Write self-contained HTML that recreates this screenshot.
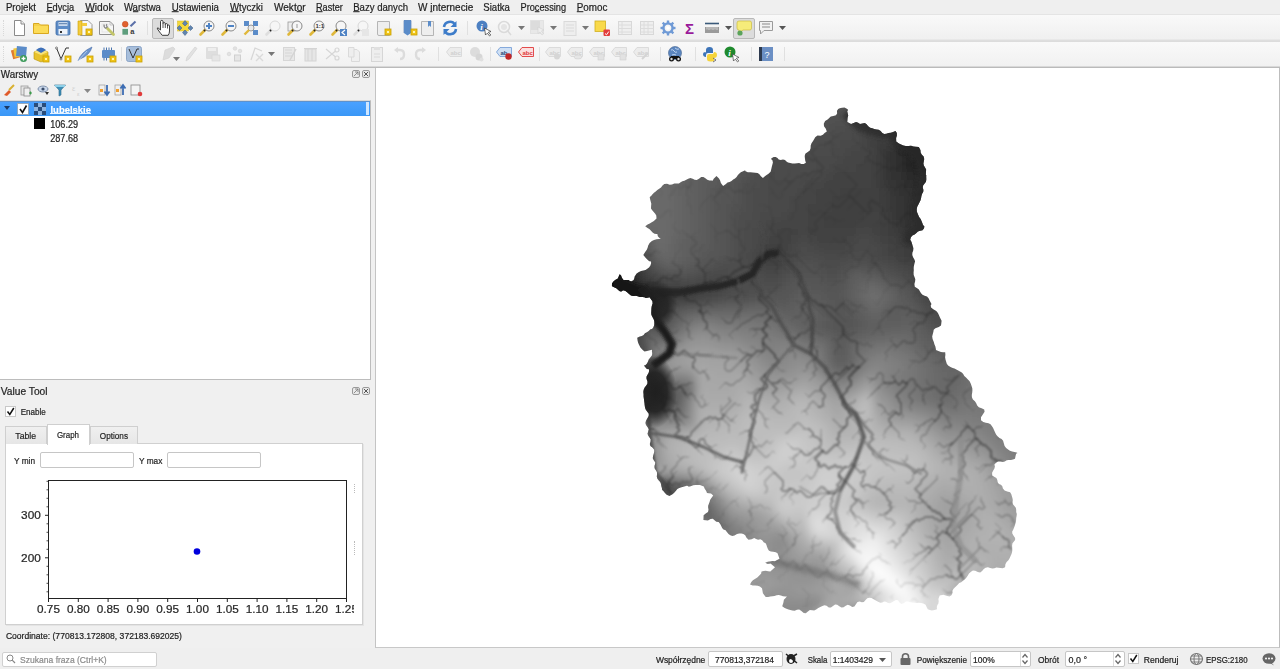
<!DOCTYPE html>
<html><head><meta charset="utf-8"><style>
*{margin:0;padding:0;box-sizing:border-box}
html,body{width:1280px;height:669px;overflow:hidden;background:#f0f0f0;font-family:"Liberation Sans",sans-serif;color:#222;font-size:10px}
.a{position:absolute;white-space:nowrap}
svg.a{overflow:visible}
#menubar{left:0;top:0;width:1280px;height:14px;background:#efefef}
#tb1{left:0;top:14px;width:1280px;height:27px;background:linear-gradient(#e4e4e4 0,#e4e4e4 1px,#f9f9f9 1px,#f0f0f0 25px,#e0e0e0 26px,#dcdcdc 27px)}
#tb2{left:0;top:41px;width:1280px;height:27px;background:linear-gradient(#dcdcdc 0,#dcdcdc 1px,#f9f9f9 1px,#f1f1f1 25px,#d8d8d8 25px,#d8d8d8 26px,#bababa 26px,#bababa 27px)}
.mi{top:2px;font-size:10px;line-height:11px;color:#1e1e1e;letter-spacing:-0.1px}
.mi u{text-decoration:underline;text-underline-offset:1px}
#canvas{left:375px;top:68px;width:905px;height:580px;background:#fff;border-left:1px solid #c4c4c4;border-right:1px solid #bdbdbd;border-bottom:1px solid #c8c8c8}
.t9{font-size:9.5px;color:#222}
.inp{background:#fff;border:1px solid #c6c6c6;border-radius:2px}
</style></head><body>
<div class="a" id="menubar"></div>
<div class="a" id="tb1"></div><div class="a" id="tb2"></div>
<div class="a" style="left:3px;top:20px;width:2px;height:16px;border-left:1px dotted #d8d8d8"></div>
<div class="a" style="left:3px;top:46px;width:2px;height:16px;border-left:1px dotted #d8d8d8"></div>
<svg class="a" style="left:11px;top:20px" width="16" height="16" viewBox="0 0 16 16"><path d="M3.5 .5H10L13.5 4V15.5H3.5Z" fill="#fff" stroke="#8a8a8a"/><path d="M10 .5V4H13.5" fill="#eee" stroke="#8a8a8a"/></svg>

<svg class="a" style="left:33px;top:20px" width="16" height="16" viewBox="0 0 16 16"><path d="M.5 3.5H6L7.5 5H15.5V13.5H.5Z" fill="#f5d14b" stroke="#d9a820"/><rect x="1" y="6" width="14" height="7" fill="#fcdc58"/></svg>

<svg class="a" style="left:55px;top:20px" width="16" height="16" viewBox="0 0 16 16"><rect x="1" y="1" width="14" height="14" rx="1.5" fill="#5d8cc7" stroke="#3d6aa5" stroke-width=".8"/><rect x="3.5" y="2" width="9" height="4" fill="#c9d9ee"/><rect x="4" y="3" width="8" height="1.2" fill="#6f8fb8"/><rect x="3.5" y="9" width="9" height="5.5" fill="#eef3fa"/><rect x="5" y="11" width="2" height="2" fill="#333"/></svg>

<svg class="a" style="left:77px;top:20px" width="16" height="16" viewBox="0 0 16 16"><path d="M3.5 .5H11L15 4.5V15.5H3.5Z" fill="#f7f7f7" stroke="#9a9a9a"/><path d="M1 1H5V15H1Z" fill="#f3cb3d" stroke="#c9a000" stroke-width=".6"/><path d="M5 3H10V6H5Z" fill="#f3cb3d"/><rect x="9" y="9" width="6" height="6" fill="#f0c419" stroke="#c9a000" stroke-width="0.8"/><rect x="11" y="11" width="2" height="2" fill="#fff6b0"/></svg>

<svg class="a" style="left:99px;top:20px" width="16" height="16" viewBox="0 0 16 16"><path d="M.5 1.5H11L14.5 5V14.5H.5Z" fill="#f6f6f6" stroke="#8e8e8e"/><path d="M11 1.5V5H14.5" fill="none" stroke="#b0b0b0" stroke-width=".7"/><rect x="3" y="4" width="6" height="8" fill="none" stroke="#e0e0e0" stroke-width=".8"/><path d="M8.5 8.5L14.5 14.5" stroke="#c3c66a" stroke-width="2.8" stroke-linecap="round"/><path d="M5.2 4.5Q4.5 7 6.5 8.2L8.2 7Q6.8 5.6 7.8 4.2" fill="none" stroke="#8a8a8a" stroke-width="1.3"/></svg>

<svg class="a" style="left:121px;top:20px" width="16" height="16" viewBox="0 0 16 16"><circle cx="4.2" cy="4.2" r="2.9" fill="#e0612f" stroke="#c04a20" stroke-width=".5"/><rect x="1.4" y="8.9" width="5.6" height="5.8" fill="#5e9e7e"/><path d="M9.5 6.2L14.5 1.5" stroke="#5a6fa8" stroke-width="2"/><text x="9.2" y="14" font-size="7.5" font-weight="bold" fill="#3a3a3a" font-family="Liberation Sans">a</text></svg>

<div class="a" style="left:147px;top:21px;width:1px;height:14px;background:#e0e0e0"></div>
<div class="a" style="left:152px;top:18px;width:22px;height:21px;background:#dcdcdc;border:1px solid #b8b8b8;border-radius:2px"></div>
<svg class="a" style="left:156px;top:20px" width="16" height="16" viewBox="0 0 16 16"><path d="M1.5 9Q.8 7.8 2 7.8L4.5 10V1.6Q4.5 .4 5.75 .4Q7 .4 7 1.6V3.6Q7 2.6 8.15 2.6Q9.3 2.6 9.3 3.6V4.6Q9.3 3.6 10.4 3.6Q11.5 3.6 11.5 4.6V6Q11.5 5 12.5 5Q13.5 5 13.5 6V11Q13.5 13.5 12.2 15.3H6.2Q5 13.8 3.6 12Z" fill="#fff" stroke="#2a2a2a" stroke-width=".9" stroke-linejoin="round"/><path d="M7 3.6V8M9.3 4.6V8M11.5 6V8.5" stroke="#2a2a2a" stroke-width=".8"/></svg>

<svg class="a" style="left:177px;top:20px" width="16" height="16" viewBox="0 0 16 16"><rect x=".5" y="1" width="11" height="10" fill="#f3d83a" stroke="#d8b820" stroke-width=".5"/><path d="M8 .5L10.5 3.5L8 6L5.5 3.5Z M2.5 5.5L5 8L2.5 10.5L0 8Z M13.5 5.5L16 8L13.5 10.5L11 8Z M8 10L10.5 12.5L8 15.5L5.5 12.5Z" fill="#5f84b0" stroke="#3a5a80" stroke-width=".5"/></svg>

<svg class="a" style="left:199px;top:20px" width="16" height="16" viewBox="0 0 16 16"><path d="M1.5 14.5L6 10" stroke="#e0b83a" stroke-width="2.6" stroke-linecap="round"/><path d="M5 11L6 10" stroke="#222" stroke-width="2"/><circle cx="10" cy="6" r="5" fill="#f6f6f6" stroke="#8a8a8a" stroke-width="1"/><path d="M10 3V9M7 6H13" stroke="#4f83c4" stroke-width="2"/></svg>

<svg class="a" style="left:221px;top:20px" width="16" height="16" viewBox="0 0 16 16"><path d="M1.5 14.5L6 10" stroke="#e0b83a" stroke-width="2.6" stroke-linecap="round"/><path d="M5 11L6 10" stroke="#222" stroke-width="2"/><circle cx="10" cy="6" r="5" fill="#f6f6f6" stroke="#8a8a8a" stroke-width="1"/><path d="M7 6H13" stroke="#4f83c4" stroke-width="2"/></svg>

<svg class="a" style="left:243px;top:20px" width="16" height="16" viewBox="0 0 16 16"><path d="M1 1H6L1 6Z M15 1H10L15 6Z M15 15H10L15 10Z" fill="#4f83c4"/><rect x="1" y="1" width="5" height="5" fill="#5b8cc9"/><rect x="10" y="1" width="5" height="5" fill="#5b8cc9"/><rect x="10" y="10" width="5" height="5" fill="#5b8cc9"/><circle cx="8" cy="8" r="3" fill="#eaeaea" stroke="#999"/><path d="M1.5 14.5L6 10" stroke="#e0b83a" stroke-width="2.4"/></svg>

<svg class="a" style="left:265px;top:20px" width="16" height="16" viewBox="0 0 16 16"><path d="M1.5 14.5L6 10" stroke="#dedede" stroke-width="2.6" stroke-linecap="round"/><path d="M5 11L6 10" stroke="#222" stroke-width="2"/><circle cx="10" cy="6" r="5" fill="#f6f6f6" stroke="#d8d8d8" stroke-width="1"/></svg>

<svg class="a" style="left:287px;top:20px" width="16" height="16" viewBox="0 0 16 16"><rect x="1" y="2" width="7" height="9" fill="#eee" stroke="#999" stroke-width=".8"/><path d="M1.5 14.5L6 10" stroke="#e0b83a" stroke-width="2.6" stroke-linecap="round"/><path d="M5 11L6 10" stroke="#222" stroke-width="2"/><circle cx="10" cy="6" r="5" fill="#f6f6f6" stroke="#8a8a8a" stroke-width="1"/><path d="M10 4V8" stroke="#999"/></svg>

<svg class="a" style="left:309px;top:20px" width="16" height="16" viewBox="0 0 16 16"><path d="M1.5 14.5L6 10" stroke="#e0b83a" stroke-width="2.6" stroke-linecap="round"/><path d="M5 11L6 10" stroke="#222" stroke-width="2"/><circle cx="10" cy="6" r="5" fill="#f6f6f6" stroke="#8a8a8a" stroke-width="1"/><text x="6.5" y="8.3" font-size="6" font-weight="bold" fill="#333" font-family="Liberation Sans">1:1</text></svg>

<svg class="a" style="left:331px;top:20px" width="16" height="16" viewBox="0 0 16 16"><path d="M1.5 14.5L6 10" stroke="#e0b83a" stroke-width="2.6" stroke-linecap="round"/><path d="M5 11L6 10" stroke="#222" stroke-width="2"/><circle cx="10" cy="6" r="5" fill="#f6f6f6" stroke="#8a8a8a" stroke-width="1"/><rect x="9" y="9" width="7" height="7" fill="#4f83c4"/><path d="M14 10L11 12.5L14 15" stroke="#fff" stroke-width="1.2" fill="none"/></svg>

<svg class="a" style="left:353px;top:20px" width="16" height="16" viewBox="0 0 16 16"><path d="M1.5 14.5L6 10" stroke="#dedede" stroke-width="2.6" stroke-linecap="round"/><path d="M5 11L6 10" stroke="#222" stroke-width="2"/><circle cx="10" cy="6" r="5" fill="#f6f6f6" stroke="#d8d8d8" stroke-width="1"/><rect x="9" y="9" width="7" height="7" fill="#e6e6e6"/></svg>

<svg class="a" style="left:376px;top:20px" width="16" height="16" viewBox="0 0 16 16"><path d="M1.5 1.5H13.5V15.5H3Q1.5 15.5 1.5 14Z" fill="#eeeeee" stroke="#b5b5b5"/><rect x="9" y="9" width="6" height="6" fill="#f0c419" stroke="#c9a000" stroke-width="0.8"/><rect x="11" y="11" width="2" height="2" fill="#fff6b0"/></svg>

<svg class="a" style="left:402px;top:20px" width="16" height="16" viewBox="0 0 16 16"><path d="M2 .5H9V13L5.5 10L2 13Z" fill="#5b8cc9" stroke="#3e6aa8" stroke-width=".6"/><path d="M2 .5H9V13L5.5 15.5L2 13Z" fill="#5b8cc9"/><rect x="9" y="9" width="6" height="6" fill="#f0c419" stroke="#c9a000" stroke-width="0.8"/><rect x="11" y="11" width="2" height="2" fill="#fff6b0"/></svg>

<svg class="a" style="left:420px;top:20px" width="16" height="16" viewBox="0 0 16 16"><path d="M1.5 1.5H13.5V15.5H3Q1.5 15.5 1.5 14Z" fill="#eeeeee" stroke="#b5b5b5"/><path d="M8 1V7L9.5 5.5L11 7V1Z" fill="#5b8cc9"/></svg>

<svg class="a" style="left:442px;top:20px" width="16" height="16" viewBox="0 0 16 16"><path d="M2 7A6 6 0 0 1 13 4.5" stroke="#3d7cc9" stroke-width="2.6" fill="none"/><path d="M14.5 1V7H8.5Z" fill="#3d7cc9"/><path d="M14 9A6 6 0 0 1 3 11.5" stroke="#3d7cc9" stroke-width="2.6" fill="none"/><path d="M1.5 15V9H7.5Z" fill="#3d7cc9"/></svg>

<div class="a" style="left:467px;top:21px;width:1px;height:14px;background:#e0e0e0"></div>
<svg class="a" style="left:476px;top:20px" width="16" height="16" viewBox="0 0 16 16"><circle cx="6" cy="6" r="5.5" fill="#4d80c2"/><text x="4.3" y="9.5" font-size="9" font-style="italic" font-weight="bold" fill="#fff" font-family="Liberation Serif">i</text><path d="M8.5 8L15 11.5L12.3 12.3L14.8 15L13.6 16L11.3 13.2L9.5 15Z" fill="#fff" stroke="#333" stroke-width=".7"/></svg>

<svg class="a" style="left:497px;top:20px" width="16" height="16" viewBox="0 0 16 16"><circle cx="7" cy="7" r="5.5" fill="none" stroke="#dadada" stroke-width="1.5"/><circle cx="7" cy="7" r="3" fill="#e4e4e4"/><path d="M10 10L14 15" stroke="#dadada" stroke-width="1.5"/></svg>

<svg class="a" style="left:518px;top:26px" width="7" height="4" viewBox="0 0 7 4"><path d="M0 0H7L3.5 4Z" fill="#777"/></svg>

<svg class="a" style="left:530px;top:20px" width="16" height="16" viewBox="0 0 16 16"><rect x=".5" y=".5" width="13" height="13" fill="#e8e8e8" stroke="#d4d4d4" stroke-dasharray="1 1"/><rect x="1" y="1" width="9" height="9" fill="#dcdcdc"/><path d="M8 7L14 10L11.5 11L13.5 14L12 15L10 12L8 13.5Z" fill="#eee" stroke="#d0d0d0" stroke-width=".6"/></svg>

<svg class="a" style="left:550px;top:26px" width="7" height="4" viewBox="0 0 7 4"><path d="M0 0H7L3.5 4Z" fill="#777"/></svg>

<svg class="a" style="left:562px;top:20px" width="16" height="16" viewBox="0 0 16 16"><rect x="2" y="1.5" width="12" height="14" fill="#eeeeee" stroke="#dadada"/><path d="M4 5H12M4 8H12M4 11H12" stroke="#dadada"/></svg>

<svg class="a" style="left:582px;top:26px" width="7" height="4" viewBox="0 0 7 4"><path d="M0 0H7L3.5 4Z" fill="#777"/></svg>

<svg class="a" style="left:594px;top:20px" width="16" height="16" viewBox="0 0 16 16"><rect x="1" y="1" width="10.5" height="10.5" fill="#f9d94a" stroke="#d0b020" stroke-width=".8"/><rect x="9.5" y="9.5" width="6.5" height="6.5" rx="1" fill="#e33d3d"/><path d="M11 13.5L12.5 14.8L14.8 11.5" stroke="#fff" stroke-width="1" fill="none"/></svg>

<svg class="a" style="left:617px;top:20px" width="16" height="16" viewBox="0 0 16 16"><rect x="1.5" y="1.5" width="13" height="13" fill="#efefef" stroke="#d8d8d8"/><path d="M1.5 5H14.5M1.5 8.5H14.5M1.5 12H14.5M5 1.5V14.5" stroke="#dcdcdc"/></svg>

<svg class="a" style="left:639px;top:20px" width="16" height="16" viewBox="0 0 16 16"><rect x="1.5" y="1.5" width="13" height="13" fill="#efefef" stroke="#d8d8d8"/><path d="M1.5 5H14.5M1.5 8.5H14.5M1.5 12H14.5M5 1.5V14.5M9 1.5V14.5" stroke="#dcdcdc"/></svg>

<svg class="a" style="left:660px;top:20px" width="16" height="16" viewBox="0 0 16 16"><g transform="translate(8 8)"><circle r="4.6" fill="none" stroke="#6f9ad6" stroke-width="2.4"/><rect x="-1.2" y="-7.5" width="2.4" height="3.6" fill="#6f9ad6" transform="rotate(0)"/><rect x="-1.2" y="-7.5" width="2.4" height="3.6" fill="#6f9ad6" transform="rotate(45)"/><rect x="-1.2" y="-7.5" width="2.4" height="3.6" fill="#6f9ad6" transform="rotate(90)"/><rect x="-1.2" y="-7.5" width="2.4" height="3.6" fill="#6f9ad6" transform="rotate(135)"/><rect x="-1.2" y="-7.5" width="2.4" height="3.6" fill="#6f9ad6" transform="rotate(180)"/><rect x="-1.2" y="-7.5" width="2.4" height="3.6" fill="#6f9ad6" transform="rotate(225)"/><rect x="-1.2" y="-7.5" width="2.4" height="3.6" fill="#6f9ad6" transform="rotate(270)"/><rect x="-1.2" y="-7.5" width="2.4" height="3.6" fill="#6f9ad6" transform="rotate(315)"/><circle r="1.8" fill="#fff"/></g></svg>

<svg class="a" style="left:684px;top:20px" width="16" height="16" viewBox="0 0 16 16"><text x="1" y="14" font-size="15" font-weight="bold" fill="#9a1a9a" font-family="Liberation Sans">&#931;</text></svg>

<svg class="a" style="left:704px;top:20px" width="16" height="16" viewBox="0 0 16 16"><path d="M1 3.5H15" stroke="#3b5a7a" stroke-width="1.6"/><rect x="1" y="7" width="14" height="6" fill="#9a9a9a"/><path d="M3 7V9.5M5 7V10M7 7V9.5M9 7V10M11 7V9.5M13 7V10" stroke="#eee" stroke-width=".7"/></svg>

<svg class="a" style="left:725px;top:26px" width="7" height="4" viewBox="0 0 7 4"><path d="M0 0H7L3.5 4Z" fill="#555"/></svg>

<div class="a" style="left:733px;top:18px;width:22px;height:21px;background:#dcdcdc;border:1px solid #b8b8b8;border-radius:2px"></div>
<svg class="a" style="left:736px;top:20px" width="16" height="16" viewBox="0 0 16 16"><path d="M3 1H14Q15.5 1 15.5 3V8Q15.5 10 14 10H7L3 13V10Q1 10 1 8V3Q1 1 3 1Z" fill="#f6ec7a" stroke="#cbbd40" stroke-width=".7"/><circle cx="4" cy="13" r="2.6" fill="#5aa35a"/></svg>

<svg class="a" style="left:758px;top:20px" width="16" height="16" viewBox="0 0 16 16"><path d="M1.5 1.5H14.5V10.5H6L2.5 14V10.5H1.5Z" fill="#f2f2f2" stroke="#9a9a9a"/><path d="M4 4H12M4 7H12" stroke="#8a8a8a" stroke-width="1.2"/></svg>

<svg class="a" style="left:779px;top:26px" width="7" height="4" viewBox="0 0 7 4"><path d="M0 0H7L3.5 4Z" fill="#555"/></svg>

<svg class="a" style="left:11px;top:46px" width="16" height="16" viewBox="0 0 16 16"><rect x="1" y="3" width="9" height="9" fill="#e07a30" transform="rotate(-15 6 8)"/><rect x="3" y="2" width="9" height="9" fill="#f0c53a" transform="rotate(-8 7 7)"/><rect x="5.5" y=".5" width="10" height="10" fill="#5b8cc9" transform="rotate(5 10 5)"/><circle cx="12.5" cy="12.5" r="3.5" fill="#3c9a5a"/><path d="M12.5 10.5V14.5M10.5 12.5H14.5" stroke="#fff" stroke-width="1.3"/></svg>

<svg class="a" style="left:33px;top:46px" width="16" height="16" viewBox="0 0 16 16"><path d="M1 6L8 3L15 6V13L8 16L1 13Z" fill="#e8c22c" stroke="#b8960a" stroke-width=".6"/><path d="M1 6L8 9L15 6L8 3Z" fill="#f7e27a"/><path d="M3 4Q8 -1 13 4L8 7Z" fill="#3d6fb8"/><rect x="10" y="10" width="6" height="6" fill="#f0c419" stroke="#c9a000" stroke-width="0.8"/><rect x="12" y="12" width="2" height="2" fill="#fff6b0"/></svg>

<svg class="a" style="left:55px;top:46px" width="16" height="16" viewBox="0 0 16 16"><path d="M1.5 2L6 13L11 2L14 2" stroke="#333" stroke-width="1" fill="none"/><circle cx="1.5" cy="2" r="1" fill="#fff" stroke="#333" stroke-width=".6"/><circle cx="6" cy="13" r="1" fill="#fff" stroke="#333" stroke-width=".6"/><rect x="10" y="10" width="6" height="6" fill="#f0c419" stroke="#c9a000" stroke-width="0.8"/><rect x="12" y="12" width="2" height="2" fill="#fff6b0"/></svg>

<svg class="a" style="left:77px;top:46px" width="16" height="16" viewBox="0 0 16 16"><path d="M1 15Q4 6 15 1Q13 9 3 13Z" fill="#6d95cf" stroke="#4a6fa8" stroke-width=".6"/><path d="M1 15L10 5" stroke="#cfe0f5" stroke-width=".7"/><rect x="10" y="10" width="6" height="6" fill="#f0c419" stroke="#c9a000" stroke-width="0.8"/><rect x="12" y="12" width="2" height="2" fill="#fff6b0"/></svg>

<svg class="a" style="left:101px;top:46px" width="16" height="16" viewBox="0 0 16 16"><rect x="1" y="4" width="13" height="8" rx="1" fill="#5b8cc9"/><path d="M3 1.5V4M5.5 1.5V4M8 1.5V4M10.5 1.5V4M3 12V14.5M5.5 12V14.5" stroke="#4a74ad" stroke-width="1"/><rect x="9" y="10" width="6" height="6" fill="#f0c419" stroke="#c9a000" stroke-width="0.8"/><rect x="11" y="12" width="2" height="2" fill="#fff6b0"/></svg>

<div class="a" style="left:121px;top:47px;width:1px;height:14px;background:#e0e0e0"></div>
<svg class="a" style="left:126px;top:46px" width="16" height="16" viewBox="0 0 16 16"><rect x=".5" y=".5" width="15" height="15" rx="2" fill="#a7bedb" stroke="#7d9ac0" stroke-width=".8"/><path d="M3 3L7 12L11 3L13 3" stroke="#333" fill="none"/><rect x="10" y="10" width="6" height="6" fill="#f0c419" stroke="#c9a000" stroke-width="0.8"/><rect x="12" y="12" width="2" height="2" fill="#fff6b0"/></svg>

<svg class="a" style="left:161px;top:46px" width="16" height="16" viewBox="0 0 16 16"><path d="M2 14L4 4L12 1L14 3L8 12Z" fill="#dcdcdc" stroke="#d0d0d0" stroke-width=".6"/></svg>

<svg class="a" style="left:173px;top:57px" width="7" height="4" viewBox="0 0 7 4"><path d="M0 0H7L3.5 4Z" fill="#777"/></svg>

<svg class="a" style="left:184px;top:46px" width="16" height="16" viewBox="0 0 16 16"><path d="M2 15L3 11L11 1L13 2.5L5 13Z" fill="#e2e2e2" stroke="#d2d2d2" stroke-width=".7"/></svg>

<svg class="a" style="left:205px;top:46px" width="16" height="16" viewBox="0 0 16 16"><rect x="1" y="1" width="12" height="12" rx="1" fill="#dedede"/><rect x="3" y="2" width="8" height="3" fill="#eee"/><rect x="7" y="9" width="8" height="6" fill="#e6e6e6" stroke="#d4d4d4" stroke-width=".6"/></svg>

<svg class="a" style="left:227px;top:46px" width="16" height="16" viewBox="0 0 16 16"><circle cx="2" cy="8" r="1.8" fill="#e2e2e2" stroke="#d4d4d4" stroke-width=".6"/><circle cx="8" cy="2.5" r="1.8" fill="#e2e2e2" stroke="#d4d4d4" stroke-width=".6"/><circle cx="13" cy="5" r="1.8" fill="#e2e2e2" stroke="#d4d4d4" stroke-width=".6"/><rect x="7.5" y="9" width="6" height="6" fill="#e6e6e6" stroke="#cfcfcf"/></svg>

<svg class="a" style="left:250px;top:46px" width="16" height="16" viewBox="0 0 16 16"><path d="M1 14L5 2L12 5" stroke="#d6d6d6" stroke-width="1.2" fill="none"/><path d="M6 8L13 15M13 8L6 15" stroke="#dadada" stroke-width="1.4"/></svg>

<svg class="a" style="left:268px;top:52px" width="7" height="4" viewBox="0 0 7 4"><path d="M0 0H7L3.5 4Z" fill="#777"/></svg>

<svg class="a" style="left:282px;top:46px" width="16" height="16" viewBox="0 0 16 16"><rect x="1.5" y="1.5" width="11" height="13" fill="#e8e8e8" stroke="#d6d6d6"/><path d="M3 4H10M3 7H10M3 10H10" stroke="#d6d6d6"/><path d="M8 14L14 3" stroke="#d4d4d4" stroke-width="1.5"/></svg>

<svg class="a" style="left:303px;top:46px" width="16" height="16" viewBox="0 0 16 16"><rect x="2" y="3" width="11" height="12" fill="#e6e6e6" stroke="#d4d4d4"/><path d="M1 2.5H14M5 3V15M9 3V15" stroke="#d4d4d4"/></svg>

<svg class="a" style="left:325px;top:46px" width="16" height="16" viewBox="0 0 16 16"><circle cx="12" cy="4" r="2" fill="none" stroke="#d6d6d6" stroke-width="1.2"/><circle cx="12" cy="12" r="2" fill="none" stroke="#d6d6d6" stroke-width="1.2"/><path d="M1 3L10.5 11M1 13L10.5 5" stroke="#d6d6d6" stroke-width="1.2"/></svg>

<svg class="a" style="left:347px;top:46px" width="16" height="16" viewBox="0 0 16 16"><path d="M4.5 3.5H10L12.5 6V15.5H4.5Z" fill="#f0f0f0" stroke="#dadada"/><path d="M1.5 1.5H7V11H1.5Z" fill="#eeeeee" stroke="#dadada"/></svg>

<svg class="a" style="left:369px;top:46px" width="16" height="16" viewBox="0 0 16 16"><rect x="2.5" y="1.5" width="11" height="14" fill="#eeeeee" stroke="#d6d6d6"/><rect x="5" y="1" width="6" height="3" fill="#e0e0e0"/><path d="M5 8H11M5 11H11" stroke="#dadada"/></svg>

<svg class="a" style="left:391px;top:46px" width="16" height="16" viewBox="0 0 16 16"><path d="M3 4L7 1V7Z" fill="#dcdcdc"/><path d="M5 4H9Q13 4 13 8.5Q13 13 9 13" stroke="#dcdcdc" stroke-width="2.4" fill="none"/></svg>

<svg class="a" style="left:413px;top:46px" width="16" height="16" viewBox="0 0 16 16"><path d="M13 4L9 1V7Z" fill="#dcdcdc"/><path d="M11 4H7Q3 4 3 8.5Q3 13 7 13" stroke="#dcdcdc" stroke-width="2.4" fill="none"/></svg>

<div class="a" style="left:438px;top:47px;width:1px;height:14px;background:#e0e0e0"></div>
<svg class="a" style="left:446px;top:44px" width="16" height="16" viewBox="0 0 16 16"><path d="M.5 8L4 3.5H15.5V12.5H4Z" fill="#ececec" stroke="#d8d8d8" stroke-width=".9"/><text x="4.5" y="10.5" font-size="6" font-weight="bold" fill="#d0d0d0" font-family="Liberation Sans">abc</text></svg>

<svg class="a" style="left:469px;top:46px" width="16" height="16" viewBox="0 0 16 16"><circle cx="6" cy="6" r="5" fill="#dcdcdc"/><circle cx="10" cy="11" r="3.5" fill="#d6d6d6"/><circle cx="12.5" cy="13.5" r="2" fill="#e0e0e0"/></svg>

<div class="a" style="left:490px;top:47px;width:1px;height:14px;background:#e0e0e0"></div>
<svg class="a" style="left:496px;top:44px" width="16" height="16" viewBox="0 0 16 16"><path d="M.5 8L4 3.5H15.5V12.5H4Z" fill="#cfe0f5" stroke="#7aa2d8" stroke-width=".9"/><text x="4.5" y="10.5" font-size="6" font-weight="bold" fill="#2a4a78" font-family="Liberation Sans">ab</text><circle cx="12.5" cy="12.5" r="3.2" fill="#c0282a"/></svg>

<svg class="a" style="left:518px;top:44px" width="16" height="16" viewBox="0 0 16 16"><path d="M.5 8L4 3.5H15.5V12.5H4Z" fill="#fbe0e0" stroke="#e03a3a" stroke-width=".9"/><text x="4.5" y="10.5" font-size="6" font-weight="bold" fill="#e03a3a" font-family="Liberation Sans">abc</text></svg>

<div class="a" style="left:539px;top:47px;width:1px;height:14px;background:#e0e0e0"></div>
<svg class="a" style="left:545px;top:44px" width="16" height="16" viewBox="0 0 16 16"><path d="M.5 8L4 3.5H15.5V12.5H4Z" fill="#ececec" stroke="#d8d8d8" stroke-width=".9"/><text x="4.5" y="10.5" font-size="6" font-weight="bold" fill="#d0d0d0" font-family="Liberation Sans">abc</text><circle cx="12" cy="12.5" r="3" fill="#d6d6d6"/></svg>

<svg class="a" style="left:567px;top:44px" width="16" height="16" viewBox="0 0 16 16"><path d="M.5 8L4 3.5H15.5V12.5H4Z" fill="#ececec" stroke="#d8d8d8" stroke-width=".9"/><text x="4.5" y="10.5" font-size="6" font-weight="bold" fill="#d0d0d0" font-family="Liberation Sans">abc</text><ellipse cx="11" cy="13" rx="4" ry="2" fill="#e6e6e6" stroke="#d0d0d0" stroke-width=".6"/></svg>

<svg class="a" style="left:589px;top:44px" width="16" height="16" viewBox="0 0 16 16"><path d="M.5 8L4 3.5H15.5V12.5H4Z" fill="#ececec" stroke="#d8d8d8" stroke-width=".9"/><text x="4.5" y="10.5" font-size="6" font-weight="bold" fill="#d0d0d0" font-family="Liberation Sans">abc</text><rect x="9" y="10" width="6" height="6" fill="#e2e2e2" stroke="#d0d0d0" stroke-width=".6"/></svg>

<svg class="a" style="left:611px;top:44px" width="16" height="16" viewBox="0 0 16 16"><path d="M.5 8L4 3.5H15.5V12.5H4Z" fill="#ececec" stroke="#d8d8d8" stroke-width=".9"/><text x="4.5" y="10.5" font-size="6" font-weight="bold" fill="#d0d0d0" font-family="Liberation Sans">abc</text><rect x="9" y="10" width="6" height="6" fill="#e2e2e2" stroke="#d0d0d0" stroke-width=".6"/></svg>

<svg class="a" style="left:633px;top:44px" width="16" height="16" viewBox="0 0 16 16"><path d="M.5 8L4 3.5H15.5V12.5H4Z" fill="#ececec" stroke="#d8d8d8" stroke-width=".9"/><text x="4.5" y="10.5" font-size="6" font-weight="bold" fill="#d0d0d0" font-family="Liberation Sans">abc</text><path d="M9 15L15 9" stroke="#d4d4d4" stroke-width="2"/></svg>

<div class="a" style="left:660px;top:47px;width:1px;height:14px;background:#e0e0e0"></div>
<svg class="a" style="left:667px;top:46px" width="16" height="16" viewBox="0 0 16 16"><circle cx="8" cy="7" r="6.5" fill="#5b86c0" stroke="#3f5f8c" stroke-width=".6"/><path d="M4 4Q6 3 7 5T10 6M8 2Q10 4 12 3M5 9Q7 8 9 9" stroke="#bcd2ee" stroke-width="1" fill="none"/><circle cx="4.5" cy="13" r="2.5" fill="#111"/><circle cx="11.5" cy="13" r="2.5" fill="#111"/><rect x="4" y="10" width="8" height="3" fill="#111"/><circle cx="4.5" cy="13" r="1.2" fill="#ddd"/><circle cx="11.5" cy="13" r="1.2" fill="#ddd"/></svg>

<div class="a" style="left:695px;top:47px;width:1px;height:14px;background:#e0e0e0"></div>
<svg class="a" style="left:702px;top:46px" width="16" height="16" viewBox="0 0 16 16"><path d="M4 7V4Q4 1 7.5 1Q11 1 11 4V7H6Q4 7 4 9V11Q1 11 1 8Q1 6 3.5 6Z" fill="#3d74b8"/><path d="M12 6Q15 6 15 9Q15 12 12 12V14.5Q12 15.5 8.5 15.5Q5 15.5 5 13V10Q5 8 7 8H11Z" fill="#f5d43c"/><path d="M11 12L14 14L11 16" stroke="#555" stroke-width=".8" fill="none"/></svg>

<svg class="a" style="left:724px;top:46px" width="16" height="16" viewBox="0 0 16 16"><circle cx="6" cy="6" r="5.5" fill="#1f8a2e"/><text x="4.3" y="9.5" font-size="9" font-style="italic" font-weight="bold" fill="#fff" font-family="Liberation Serif">i</text><path d="M8.5 8L15 11.5L12.3 12.3L14.8 15L13.6 16L11.3 13.2L9.5 15Z" fill="#fff" stroke="#444" stroke-width=".7"/></svg>

<div class="a" style="left:751px;top:47px;width:1px;height:14px;background:#e0e0e0"></div>
<svg class="a" style="left:758px;top:46px" width="16" height="16" viewBox="0 0 16 16"><rect x="1" y="1" width="14" height="14" fill="#6b8fc4"/><rect x="1" y="1" width="3" height="14" fill="#2d3a4e"/><text x="6.5" y="11.5" font-size="9" fill="#fff" font-family="Liberation Sans">?</text></svg>

<div class="a" style="left:784px;top:47px;width:1px;height:14px;background:#e0e0e0"></div>
<div class="a" style="left:352px;top:70px;width:8px;height:8px;border:1px solid #9a9a9a;border-radius:2px;background:#eaeaea"></div><div class="a" style="left:362px;top:70px;width:8px;height:8px;border:1px solid #9a9a9a;border-radius:2px;background:#eaeaea"></div><svg class="a" style="left:353px;top:71px" width="6" height="6" viewBox="0 0 6 6"><path d="M1 5L5 1M2 1H5V4" stroke="#777" stroke-width=".8" fill="none"/></svg>
<svg class="a" style="left:363px;top:71px" width="6" height="6" viewBox="0 0 6 6"><path d="M1 1L5 5M5 1L1 5" stroke="#555" stroke-width="1"/></svg>

<svg class="a" style="left:3px;top:84px" width="12" height="12" viewBox="0 0 12 12"><path d="M1 11L6 6L8 8L4 12Z" fill="#e05a2a"/><path d="M6 6L11 1" stroke="#d9b030" stroke-width="2"/></svg>

<svg class="a" style="left:20px;top:84px" width="12" height="12" viewBox="0 0 12 12"><rect x="1" y="2" width="7" height="9" fill="#e6e6e6" stroke="#999" stroke-width=".8"/><rect x="4" y="4" width="6" height="8" fill="#f0f0f0" stroke="#888" stroke-width=".8"/><path d="M9 9H12M10.5 7.5V10.5" stroke="#3a9a4a" stroke-width="1.2"/></svg>

<svg class="a" style="left:37px;top:84px" width="12" height="12" viewBox="0 0 12 12"><ellipse cx="6" cy="5" rx="5" ry="3" fill="#c8d6ea" stroke="#6a7d9a" stroke-width=".8"/><circle cx="6" cy="5" r="1.6" fill="#3a4d6a"/><path d="M8 8H12L10 11Z" fill="#333"/></svg>

<svg class="a" style="left:54px;top:84px" width="12" height="12" viewBox="0 0 12 12"><path d="M.5 1H11.5L7 6V11L5 12V6Z" fill="#3d8fb8" stroke="#2c6a8a" stroke-width=".6"/><path d="M1 1H11V3H1Z" fill="#8fd0e8"/></svg>

<svg class="a" style="left:71px;top:84px" width="12" height="12" viewBox="0 0 12 12"><text x="1" y="7" font-size="8" fill="#d0d0d0" font-family="Liberation Serif">&#949;</text><text x="6" y="12" font-size="6" fill="#d0d0d0" font-family="Liberation Sans">&#949;</text></svg>

<svg class="a" style="left:84px;top:89px" width="7" height="4" viewBox="0 0 7 4"><path d="M0 0H7L3.5 4Z" fill="#888"/></svg>

<svg class="a" style="left:98px;top:84px" width="12" height="12" viewBox="0 0 12 12"><rect x="1" y="1" width="6" height="10" fill="#f0f0f0" stroke="#999" stroke-width=".7"/><rect x="2" y="5" width="3" height="3" fill="#f0a030"/><path d="M9 1V10M6.5 7.5L9 11L11.5 7.5" stroke="#3d6db3" stroke-width="1.8" fill="none"/></svg>

<svg class="a" style="left:114px;top:84px" width="12" height="12" viewBox="0 0 12 12"><rect x="1" y="1" width="6" height="10" fill="#f0f0f0" stroke="#999" stroke-width=".7"/><rect x="2" y="5" width="3" height="3" fill="#f0a030"/><path d="M9 11V2M6.5 4.5L9 1L11.5 4.5" stroke="#3d6db3" stroke-width="1.8" fill="none"/></svg>

<svg class="a" style="left:130px;top:84px" width="12" height="12" viewBox="0 0 12 12"><rect x="1" y="1" width="9" height="10" fill="#f4f4f4" stroke="#888" stroke-width=".8"/><circle cx="10" cy="10" r="2.3" fill="#e03a3a"/></svg>

<div class="a" style="left:0;top:100px;width:371px;height:280px;background:#fff;border-top:1px solid #d8d8d8;border-right:1px solid #bcbcbc;border-bottom:1px solid #bcbcbc"></div>
<div class="a" style="left:0;top:101px;width:370px;height:15px;background:linear-gradient(#4aa1ff,#3a97f6);border-top:1px solid #5f92cc"></div>
<div class="a" style="left:366px;top:102px;width:3px;height:13px;background:#cfe6ff"></div>
<svg class="a" style="left:4px;top:106px" width="6" height="4" viewBox="0 0 6 4"><path d="M0 0H6L3 4Z" fill="#1a3a66"/></svg>

<div class="a" style="left:17px;top:103px;width:12px;height:12px;background:#fff;border:1px solid #9ab"></div>
<svg class="a" style="left:18px;top:104px" width="10" height="10" viewBox="0 0 10 10"><path d="M2 5L4.5 8.5L8.5 1.5" stroke="#111" stroke-width="1.6" fill="none"/></svg>

<svg class="a" style="left:34px;top:103px" width="12" height="12" viewBox="0 0 12 12"><rect x="0" y="0" width="4" height="4" fill="#2a4d7a"/><rect x="8" y="0" width="4" height="4" fill="#2a4d7a"/><rect x="4" y="4" width="4" height="4" fill="#2a4d7a"/><rect x="0" y="8" width="4" height="4" fill="#2a4d7a"/><rect x="8" y="8" width="4" height="4" fill="#2a4d7a"/><rect x="4" y="0" width="4" height="4" fill="#8fb3dd"/><rect x="0" y="4" width="4" height="4" fill="#8fb3dd"/><rect x="8" y="4" width="4" height="4" fill="#8fb3dd"/><rect x="4" y="8" width="4" height="4" fill="#8fb3dd"/></svg>

<div class="a" style="left:50px;top:113px;width:41px;height:1px;background:#e8f2ff"></div>
<div class="a" style="left:34px;top:118px;width:11px;height:11px;background:#000"></div>
<div class="a" style="left:352px;top:387px;width:8px;height:8px;border:1px solid #9a9a9a;border-radius:2px;background:#eaeaea"></div><div class="a" style="left:362px;top:387px;width:8px;height:8px;border:1px solid #9a9a9a;border-radius:2px;background:#eaeaea"></div><svg class="a" style="left:353px;top:388px" width="6" height="6" viewBox="0 0 6 6"><path d="M1 5L5 1M2 1H5V4" stroke="#777" stroke-width=".8" fill="none"/></svg>
<svg class="a" style="left:363px;top:388px" width="6" height="6" viewBox="0 0 6 6"><path d="M1 1L5 5M5 1L1 5" stroke="#555" stroke-width="1"/></svg>

<div class="a" style="left:5px;top:406px;width:11px;height:11px;background:#fff;border:1px solid #c8c8c8"></div>
<svg class="a" style="left:6px;top:407px" width="9" height="9" viewBox="0 0 9 9"><path d="M1.5 4.5L3.8 7.5L7.8 1" stroke="#111" stroke-width="1.5" fill="none"/></svg>

<div class="a" style="left:5px;top:443px;width:358px;height:182px;background:#fff;border:1px solid #d0d0d0;box-shadow:1px 1px 0 #e4e4e4"></div>
<div class="a" style="left:5px;top:426px;width:42px;height:18px;background:linear-gradient(#f0f0f0,#e6e6e6);border:1px solid #cfcfcf;border-bottom:none"></div>
<div class="a" style="left:90px;top:426px;width:48px;height:18px;background:linear-gradient(#f0f0f0,#e6e6e6);border:1px solid #cfcfcf;border-bottom:none"></div>
<div class="a" style="left:47px;top:424px;width:43px;height:21px;background:#fff;border:1px solid #cfcfcf;border-bottom:none"></div>
<div class="a inp" style="left:40px;top:452px;width:94px;height:16px"></div>
<div class="a inp" style="left:167px;top:452px;width:94px;height:16px"></div>
<svg class="a" style="left:0;top:0" width="370" height="669" viewBox="0 0 370 669"><rect x="48.5" y="480.5" width="298" height="118" fill="#fff" stroke="#222" stroke-width="1"/><path d="M46.5 591.8H48.5" stroke="#222" stroke-width="0.8"/><path d="M46.5 583.3H48.5" stroke="#222" stroke-width="0.8"/><path d="M46.5 574.8H48.5" stroke="#222" stroke-width="0.8"/><path d="M46.5 566.3H48.5" stroke="#222" stroke-width="0.8"/><path d="M45.0 557.8H48.5" stroke="#222" stroke-width="1"/><path d="M46.5 549.3H48.5" stroke="#222" stroke-width="0.8"/><path d="M46.5 540.8H48.5" stroke="#222" stroke-width="0.8"/><path d="M46.5 532.3H48.5" stroke="#222" stroke-width="0.8"/><path d="M46.5 523.8H48.5" stroke="#222" stroke-width="0.8"/><path d="M45.0 515.3H48.5" stroke="#222" stroke-width="1"/><path d="M46.5 506.8H48.5" stroke="#222" stroke-width="0.8"/><path d="M46.5 498.3H48.5" stroke="#222" stroke-width="0.8"/><path d="M46.5 489.8H48.5" stroke="#222" stroke-width="0.8"/><path d="M46.5 481.3H48.5" stroke="#222" stroke-width="0.8"/><path d="M48.5 598.5V602" stroke="#222" stroke-width="1"/><path d="M78.3 598.5V602" stroke="#222" stroke-width="1"/><path d="M108.1 598.5V602" stroke="#222" stroke-width="1"/><path d="M137.9 598.5V602" stroke="#222" stroke-width="1"/><path d="M167.7 598.5V602" stroke="#222" stroke-width="1"/><path d="M197.5 598.5V602" stroke="#222" stroke-width="1"/><path d="M227.3 598.5V602" stroke="#222" stroke-width="1"/><path d="M257.1 598.5V602" stroke="#222" stroke-width="1"/><path d="M286.9 598.5V602" stroke="#222" stroke-width="1"/><path d="M316.7 598.5V602" stroke="#222" stroke-width="1"/><path d="M346.5 598.5V602" stroke="#222" stroke-width="1"/><circle cx="197" cy="551.5" r="3.3" fill="#0000dd"/></svg>
<div class="a" style="left:354px;top:484px;width:1px;height:9px;border-left:1px dotted #bbb"></div>
<div class="a" style="left:354px;top:541px;width:1px;height:14px;border-left:1px dotted #bbb"></div>
<div class="a" id="canvas"></div>
<svg class="a" style="left:0;top:0;overflow:hidden" width="1280" height="669" viewBox="0 0 1280 669"><defs><clipPath id="cp"><polygon points="611.9,286.2 612.0,283.3 613.6,281.3 615.6,279.8 617.6,278.7 618.6,276.5 619.7,274.1 621.3,275.7 622.1,278.1 623.5,279.9 626.1,280.0 628.9,280.0 629.9,281.1 631.6,281.3 633.6,280.0 634.2,278.5 634.6,276.4 636.6,273.5 638.9,272.0 641.0,271.1 643.3,270.5 645.5,269.9 647.3,268.7 649.0,267.6 650.4,265.6 651.1,263.2 651.0,261.4 649.3,261.2 647.5,259.7 645.8,258.1 643.3,254.9 645.5,251.5 646.8,249.8 647.6,247.7 648.2,245.6 649.6,243.0 651.9,241.0 654.0,239.9 656.5,239.3 659.1,238.9 660.8,239.0 659.7,238.2 658.0,236.4 657.3,234.4 658.4,234.1 658.4,234.3 656.4,234.0 654.5,233.8 652.6,232.4 650.8,230.6 649.3,228.9 647.5,228.0 645.2,226.3 648.0,224.3 649.8,223.6 651.3,222.4 653.9,220.9 656.5,218.6 656.3,215.5 655.2,213.7 653.7,212.0 652.2,210.3 651.0,208.5 651.1,206.1 651.3,203.8 650.7,201.5 650.1,199.2 649.7,197.1 651.1,195.9 652.5,194.2 654.0,192.7 655.7,191.5 657.3,190.0 659.2,188.8 661.0,187.4 662.5,185.5 664.3,184.0 667.0,183.7 669.7,184.8 672.0,184.6 674.3,183.6 676.6,183.4 678.9,183.4 680.6,182.3 682.4,181.3 684.4,180.7 686.3,179.7 688.2,178.8 690.4,178.1 692.7,178.8 694.6,179.7 696.7,179.9 699.0,178.7 701.2,177.0 703.4,176.9 705.4,178.2 707.3,179.7 709.4,180.5 711.5,180.6 712.6,180.7 713.7,178.8 716.5,176.0 719.0,178.4 720.1,180.6 720.9,183.1 723.1,185.9 725.9,184.0 727.5,182.4 729.6,181.9 731.5,180.9 733.2,179.5 735.0,178.4 736.6,177.0 737.9,175.0 739.4,173.5 740.8,172.2 743.1,171.3 745.2,170.3 745.1,169.9 745.5,171.2 747.8,172.2 750.5,172.2 752.9,172.4 755.2,172.7 757.6,173.1 759.4,174.3 760.9,176.3 762.9,178.0 764.9,176.3 766.6,175.0 768.5,173.8 770.6,171.8 771.3,168.9 771.8,166.8 772.4,164.6 772.9,162.5 772.4,160.2 771.0,159.0 771.6,158.2 773.6,157.1 775.7,157.1 777.5,158.1 778.7,159.6 780.7,160.1 783.0,159.6 785.0,160.0 786.5,161.5 788.0,162.6 790.2,163.0 792.4,163.6 794.8,163.6 797.1,163.3 799.1,163.1 801.4,163.9 803.7,164.1 805.9,162.8 805.2,160.4 804.9,158.2 804.7,156.1 805.3,153.7 807.7,152.1 809.8,150.6 810.6,148.3 810.7,145.5 811.5,143.2 812.9,141.3 814.1,139.3 815.2,137.2 817.5,135.5 820.6,135.8 822.9,134.8 824.6,133.1 826.8,131.5 825.8,128.7 824.0,126.2 823.8,123.8 825.1,120.9 827.6,119.6 829.2,118.1 830.8,116.6 833.3,115.9 835.9,115.2 837.1,113.4 837.0,110.7 838.2,109.1 839.7,108.3 842.0,107.8 844.5,107.5 846.8,108.7 848.2,109.9 847.2,111.1 847.7,113.3 848.2,115.4 847.6,117.7 847.3,121.9 851.1,123.9 853.6,122.9 856.1,122.0 858.1,122.7 860.0,123.9 862.4,123.5 864.8,123.0 866.6,124.2 868.2,126.3 870.1,127.7 872.2,128.2 874.2,128.9 876.3,129.4 878.6,129.7 880.6,130.9 882.3,133.0 884.2,134.0 886.4,133.7 888.6,133.1 890.9,132.7 893.1,131.9 895.5,131.1 896.8,133.0 896.9,135.4 896.1,138.1 896.2,141.4 898.9,143.4 901.0,144.6 903.2,145.6 905.7,146.0 908.6,146.1 911.1,145.7 913.2,146.4 915.5,146.7 918.8,147.0 920.4,149.9 920.6,152.6 921.8,154.7 923.6,156.6 924.2,158.9 923.8,161.2 923.4,163.5 923.8,165.6 925.0,167.4 926.1,169.4 926.0,172.0 925.8,174.6 926.3,175.6 926.2,176.7 926.3,179.3 926.0,181.8 924.6,183.6 923.1,185.4 922.8,187.5 923.4,189.9 923.2,192.0 922.1,193.8 921.4,195.9 921.1,198.1 920.5,200.2 919.5,202.3 918.4,204.4 917.3,206.6 916.7,209.3 916.9,211.8 917.9,214.2 919.1,216.9 920.6,218.9 921.5,220.9 922.3,223.0 923.0,225.1 924.4,226.5 923.9,228.6 922.5,230.3 920.1,230.8 917.9,231.6 916.4,233.1 914.6,234.4 912.4,235.5 910.9,237.2 910.2,239.7 911.4,241.8 912.1,244.0 912.7,246.1 913.4,248.3 913.2,250.5 912.4,252.8 912.3,255.0 913.1,257.2 914.3,259.2 915.1,261.3 914.5,263.6 913.9,265.9 913.7,268.1 913.8,270.3 913.6,272.6 913.7,274.9 914.5,277.0 915.3,279.2 915.1,281.5 914.4,284.1 914.8,286.8 917.2,288.3 918.9,289.5 920.0,291.4 921.1,293.2 922.5,294.7 924.6,295.7 927.0,296.5 928.6,298.2 929.6,300.5 930.7,302.6 931.5,304.1 930.7,305.5 931.1,307.5 933.3,309.2 935.9,310.8 937.2,312.1 938.3,313.7 939.3,315.9 940.2,318.1 941.6,320.7 941.3,323.5 941.0,325.5 938.8,327.0 935.4,328.2 933.7,329.8 933.4,331.8 932.8,334.1 932.2,336.5 932.6,339.1 933.8,341.9 934.4,344.3 935.3,346.3 935.8,348.5 936.0,350.0 937.1,350.4 939.0,351.3 941.0,352.1 943.0,352.3 945.2,352.3 945.4,354.7 945.1,357.2 945.5,359.5 946.1,361.6 946.8,363.8 948.1,365.6 950.5,367.0 952.7,368.1 954.5,368.5 956.3,369.5 958.2,370.4 960.0,371.4 961.8,372.4 963.2,374.0 964.3,376.0 966.0,377.6 967.9,379.5 969.6,381.2 970.7,383.4 971.5,385.7 972.3,388.2 972.4,390.5 972.2,392.8 971.8,395.1 971.9,397.3 972.9,399.5 974.9,401.3 976.2,403.2 977.2,405.4 978.8,407.2 981.6,408.2 984.2,409.6 984.6,411.7 982.8,414.5 981.0,417.3 981.0,420.3 983.3,422.1 985.8,422.7 988.5,423.2 990.5,424.3 991.8,426.0 993.0,427.8 994.0,430.0 995.0,432.2 996.1,434.4 997.5,436.3 999.5,437.9 1001.6,439.0 1003.1,440.8 1003.8,443.3 1004.6,445.9 1006.1,448.1 1008.1,449.6 1009.9,450.8 1012.1,451.6 1014.4,451.9 1016.6,452.5 1017.5,453.1 1016.1,453.8 1015.5,456.2 1015.0,458.7 1013.0,459.5 1010.9,459.9 1008.8,460.0 1006.7,460.3 1004.8,461.4 1002.9,461.9 1000.4,461.4 998.0,461.5 996.1,462.8 994.4,464.4 994.9,466.5 994.4,468.6 993.1,470.7 992.1,472.8 992.2,475.5 994.6,476.9 996.4,478.0 997.3,479.9 997.7,482.3 998.9,483.9 1000.9,484.8 1002.3,486.3 1002.9,488.5 1004.6,490.5 1007.2,491.5 1010.1,492.3 1011.3,494.2 1011.8,496.1 1012.4,498.1 1012.8,500.1 1012.5,502.3 1012.9,504.3 1014.4,506.0 1015.8,507.7 1016.2,509.8 1016.2,511.9 1016.8,513.9 1016.6,515.9 1016.2,518.0 1016.1,520.0 1015.9,522.0 1015.3,524.1 1014.7,526.0 1014.0,527.8 1013.2,529.7 1012.2,531.6 1012.3,533.6 1013.6,535.8 1015.1,538.0 1015.1,540.0 1013.7,541.7 1012.5,543.3 1012.1,545.4 1012.2,547.6 1012.3,549.9 1012.1,552.1 1011.5,554.1 1010.6,556.1 1009.6,558.3 1008.4,560.3 1006.6,562.1 1005.4,564.2 1005.1,567.2 1002.7,568.3 1000.6,568.0 998.5,567.7 996.4,567.6 994.4,568.2 992.4,568.5 990.2,567.9 987.9,567.2 985.6,567.7 983.8,569.0 982.1,570.9 980.2,572.4 977.8,572.0 975.2,570.8 972.9,570.6 971.0,571.8 969.0,573.5 967.7,575.8 966.3,577.8 964.7,579.4 963.0,580.8 961.2,582.2 959.2,583.1 957.9,584.4 956.4,585.9 954.8,587.4 953.4,589.0 952.4,590.7 952.6,592.7 951.5,595.2 949.5,596.4 946.4,595.7 943.3,594.7 939.7,595.6 938.4,598.9 938.7,601.2 938.4,603.4 937.4,605.1 936.8,607.1 937.0,609.2 934.5,610.1 931.8,610.6 929.9,609.9 927.8,609.2 926.7,607.2 925.6,604.7 923.3,603.5 921.1,602.9 918.9,602.8 916.6,602.9 914.3,602.7 912.1,602.6 910.1,602.3 908.2,601.4 906.0,601.5 903.6,603.2 901.3,604.1 899.5,602.5 898.0,600.2 896.0,600.0 894.0,601.1 892.0,602.3 890.0,603.2 888.0,602.9 886.0,601.7 884.1,601.4 882.3,602.4 880.3,602.7 878.1,601.8 875.9,600.5 873.7,599.2 871.5,598.1 869.3,597.7 867.3,598.3 865.6,600.1 863.8,602.0 861.8,602.3 859.7,601.6 857.5,602.0 855.9,604.3 854.4,606.6 852.2,607.0 849.9,605.4 847.8,604.8 845.7,605.8 843.6,607.3 841.5,607.6 839.3,606.2 837.2,604.7 835.1,604.6 833.0,606.1 830.9,607.6 828.8,607.4 826.6,605.8 824.5,605.2 822.4,606.0 820.3,606.9 818.3,607.9 816.2,609.6 814.2,610.6 812.1,610.2 809.9,610.0 807.9,611.5 805.8,613.2 803.7,613.0 801.4,610.9 799.2,609.5 797.0,609.8 794.7,610.7 792.3,610.5 790.4,610.0 788.5,609.4 786.5,608.8 784.7,607.9 782.2,606.2 783.3,603.1 783.9,599.8 785.8,597.7 787.4,595.9 788.9,594.1 791.0,593.2 792.9,596.0 792.6,596.5 790.2,596.3 787.8,596.2 785.4,596.4 783.0,596.3 780.9,595.5 778.8,594.9 776.6,595.2 774.5,596.0 772.4,596.3 770.2,596.6 768.1,596.9 765.7,596.9 764.2,595.0 762.9,593.3 762.5,591.0 762.0,588.3 759.9,586.6 757.7,585.7 755.2,585.5 752.7,585.4 750.0,584.5 751.3,581.9 752.9,580.2 754.9,578.9 757.3,577.6 759.3,575.4 761.2,573.4 761.3,572.2 761.6,571.6 763.6,570.9 765.8,570.8 768.1,571.3 770.3,571.6 775.0,567.3 770.6,563.6 767.7,564.0 765.2,562.8 767.8,561.7 770.1,561.4 772.4,561.1 774.9,561.2 779.5,558.8 777.5,553.2 775.7,552.2 773.3,551.8 770.9,551.4 769.0,550.7 767.9,548.9 767.0,546.8 766.4,544.7 765.4,543.1 763.9,542.5 762.2,540.3 760.3,539.3 758.1,539.7 756.1,539.1 754.2,538.1 751.7,539.2 748.5,539.7 746.5,537.8 745.2,535.3 743.4,534.0 741.4,533.5 739.3,533.4 737.0,534.1 734.5,535.4 732.3,535.9 730.3,535.3 728.5,534.0 726.9,532.0 725.3,530.0 723.8,529.7 722.3,528.2 721.2,526.1 720.2,523.9 718.6,521.9 716.3,521.7 714.5,520.3 712.8,518.7 710.6,518.9 707.9,520.4 703.4,519.9 703.6,515.2 705.7,513.6 708.0,511.9 708.5,509.7 708.1,507.3 708.2,505.4 709.0,503.5 709.7,501.6 710.2,499.7 711.4,497.9 713.2,495.5 711.0,493.5 708.8,493.2 707.0,492.9 706.2,490.9 704.7,488.7 703.8,486.6 701.9,485.8 699.9,485.1 697.7,485.0 695.5,485.1 693.2,485.3 690.8,486.2 688.5,486.8 688.1,485.9 686.8,485.8 684.3,486.6 681.6,487.2 679.3,487.9 677.4,489.0 675.8,491.1 674.0,493.0 672.2,494.6 669.4,496.1 666.6,494.8 664.9,493.0 663.3,491.1 662.1,489.9 662.0,488.5 661.3,486.3 661.0,484.1 660.2,482.0 658.3,480.0 657.1,478.3 656.8,476.6 657.1,474.1 656.9,471.9 655.7,470.1 654.6,468.3 654.5,466.0 655.1,463.9 655.2,462.2 653.8,460.2 652.8,458.3 653.0,456.2 653.7,454.0 654.2,451.9 654.2,449.8 652.7,447.8 650.4,446.0 649.8,444.0 650.5,441.8 650.7,439.6 649.7,437.7 648.3,435.8 647.5,433.8 648.2,431.6 648.8,429.3 647.7,427.2 646.0,425.1 645.4,423.0 646.0,420.7 647.3,418.4 648.7,416.0 648.8,413.8 647.3,411.7 645.7,409.6 645.0,407.5 644.7,405.3 644.5,403.1 644.2,400.9 643.9,398.7 643.6,396.5 643.6,394.3 643.4,392.0 643.7,389.7 644.7,387.6 646.3,385.6 647.5,383.5 647.5,381.3 646.6,379.1 646.5,376.8 647.4,374.9 648.6,373.1 649.1,371.0 649.0,369.3 646.9,369.0 645.1,367.1 643.9,365.6 645.3,365.3 646.8,363.7 647.9,361.7 648.7,359.4 649.7,358.2 650.7,357.1 652.0,355.3 652.2,353.2 651.9,351.2 652.0,349.8 650.0,350.2 647.1,351.1 644.5,351.4 642.7,350.1 640.4,347.6 639.0,344.8 638.2,342.9 637.6,340.7 637.2,337.7 639.7,336.6 641.8,336.0 643.6,335.0 644.9,333.3 646.8,332.2 648.7,331.0 650.4,329.3 652.0,329.0 653.2,327.5 654.2,325.3 654.4,323.2 654.3,321.1 653.6,319.1 652.5,317.1 651.5,315.1 651.3,313.0 651.4,310.7 651.5,308.3 651.8,305.9 652.7,303.4 652.5,301.2 649.6,297.3 645.9,298.0 644.5,297.3 642.3,297.1 640.0,297.0 637.8,296.2 635.6,295.8 633.3,295.9 631.0,295.5 629.1,294.1 627.2,292.3 625.2,290.7 623.0,290.3 621.3,291.4 619.9,291.2 618.2,289.9 616.7,288.4 614.6,287.4"/></clipPath><filter id="b8" x="-50%" y="-50%" width="200%" height="200%"><feGaussianBlur stdDeviation="8"/></filter><filter id="b15" x="-50%" y="-50%" width="200%" height="200%"><feGaussianBlur stdDeviation="15"/></filter><filter id="b4" x="-10%" y="-10%" width="120%" height="120%"><feGaussianBlur stdDeviation="5"/></filter><filter id="b1" x="-50%" y="-50%" width="200%" height="200%"><feGaussianBlur stdDeviation="1"/></filter><filter id="tex" x="0" y="0" width="100%" height="100%" filterUnits="objectBoundingBox" color-interpolation-filters="sRGB"><feTurbulence type="fractalNoise" baseFrequency="0.035" numOctaves="4" seed="3"/><feColorMatrix type="matrix" values="1 0 0 0 0  1 0 0 0 0  1 0 0 0 0  0 0 0 0 1"/><feComponentTransfer><feFuncR type="table" tableValues="1 1 1 1 1 .25 1 1 1 1 1"/><feFuncG type="table" tableValues="1 1 1 1 1 .25 1 1 1 1 1"/><feFuncB type="table" tableValues="1 1 1 1 1 .25 1 1 1 1 1"/></feComponentTransfer></filter><filter id="b07" x="0" y="0" width="100%" height="100%"><feGaussianBlur stdDeviation="0.8"/></filter><filter id="b15x" x="-20%" y="-20%" width="140%" height="140%"><feGaussianBlur stdDeviation="1.6"/></filter><filter id="b3" x="-50%" y="-50%" width="200%" height="200%"><feGaussianBlur stdDeviation="2"/></filter><linearGradient id="lg" x1="0" y1="107" x2="0" y2="610" gradientUnits="userSpaceOnUse"><stop offset="0" stop-color="#565656"/><stop offset=".35" stop-color="#6e6e6e"/><stop offset=".6" stop-color="#a8a8a8"/><stop offset="1" stop-color="#b8b8b8"/></linearGradient></defs><g clip-path="url(#cp)"><g filter="url(#b4)"><rect x="600" y="100" width="72" height="8" fill="#696969"/><rect x="672" y="100" width="32" height="8" fill="#636363"/><rect x="704" y="100" width="80" height="8" fill="#4e4e4e"/><rect x="784" y="100" width="104" height="8" fill="#515151"/><rect x="888" y="100" width="8" height="8" fill="#3f3f3f"/><rect x="896" y="100" width="136" height="8" fill="#1e1e1e"/><rect x="600" y="108" width="72" height="8" fill="#696969"/><rect x="672" y="108" width="32" height="8" fill="#636363"/><rect x="704" y="108" width="88" height="8" fill="#4e4e4e"/><rect x="792" y="108" width="88" height="8" fill="#515151"/><rect x="880" y="108" width="16" height="8" fill="#3f3f3f"/><rect x="896" y="108" width="88" height="8" fill="#1e1e1e"/><rect x="984" y="108" width="32" height="8" fill="#212121"/><rect x="1016" y="108" width="8" height="8" fill="#1e1e1e"/><rect x="1024" y="108" width="8" height="8" fill="#212121"/><rect x="600" y="116" width="8" height="8" fill="#6c6c6c"/><rect x="608" y="116" width="64" height="8" fill="#696969"/><rect x="672" y="116" width="40" height="8" fill="#636363"/><rect x="712" y="116" width="88" height="8" fill="#4e4e4e"/><rect x="800" y="116" width="72" height="8" fill="#515151"/><rect x="872" y="116" width="24" height="8" fill="#3f3f3f"/><rect x="896" y="116" width="16" height="8" fill="#1e1e1e"/><rect x="912" y="116" width="104" height="8" fill="#212121"/><rect x="1016" y="116" width="8" height="8" fill="#1e1e1e"/><rect x="1024" y="116" width="8" height="8" fill="#212121"/><rect x="600" y="124" width="8" height="8" fill="#6c6c6c"/><rect x="608" y="124" width="64" height="8" fill="#696969"/><rect x="672" y="124" width="40" height="8" fill="#606060"/><rect x="712" y="124" width="96" height="8" fill="#4e4e4e"/><rect x="808" y="124" width="24" height="8" fill="#515151"/><rect x="832" y="124" width="16" height="8" fill="#4e4e4e"/><rect x="848" y="124" width="8" height="8" fill="#484848"/><rect x="856" y="124" width="8" height="8" fill="#515151"/><rect x="864" y="124" width="32" height="8" fill="#3f3f3f"/><rect x="896" y="124" width="136" height="8" fill="#212121"/><rect x="600" y="132" width="16" height="8" fill="#6c6c6c"/><rect x="616" y="132" width="40" height="8" fill="#696969"/><rect x="656" y="132" width="16" height="8" fill="#666666"/><rect x="672" y="132" width="48" height="8" fill="#606060"/><rect x="720" y="132" width="8" height="8" fill="#4b4b4b"/><rect x="728" y="132" width="72" height="8" fill="#4e4e4e"/><rect x="800" y="132" width="8" height="8" fill="#545454"/><rect x="808" y="132" width="24" height="8" fill="#4e4e4e"/><rect x="832" y="132" width="24" height="8" fill="#4b4b4b"/><rect x="856" y="132" width="8" height="8" fill="#454545"/><rect x="864" y="132" width="8" height="8" fill="#3f3f3f"/><rect x="872" y="132" width="24" height="8" fill="#424242"/><rect x="896" y="132" width="136" height="8" fill="#212121"/><rect x="600" y="140" width="16" height="8" fill="#6c6c6c"/><rect x="616" y="140" width="32" height="8" fill="#696969"/><rect x="648" y="140" width="24" height="8" fill="#666666"/><rect x="672" y="140" width="48" height="8" fill="#606060"/><rect x="720" y="140" width="8" height="8" fill="#575757"/><rect x="728" y="140" width="56" height="8" fill="#4b4b4b"/><rect x="784" y="140" width="8" height="8" fill="#545454"/><rect x="792" y="140" width="32" height="8" fill="#4e4e4e"/><rect x="824" y="140" width="16" height="8" fill="#4b4b4b"/><rect x="840" y="140" width="24" height="8" fill="#484848"/><rect x="864" y="140" width="8" height="8" fill="#424242"/><rect x="872" y="140" width="8" height="8" fill="#3c3c3c"/><rect x="880" y="140" width="8" height="8" fill="#363636"/><rect x="888" y="140" width="8" height="8" fill="#424242"/><rect x="896" y="140" width="136" height="8" fill="#212121"/><rect x="600" y="148" width="16" height="8" fill="#6c6c6c"/><rect x="616" y="148" width="32" height="8" fill="#696969"/><rect x="648" y="148" width="32" height="8" fill="#666666"/><rect x="680" y="148" width="40" height="8" fill="#606060"/><rect x="720" y="148" width="16" height="8" fill="#545454"/><rect x="736" y="148" width="32" height="8" fill="#4b4b4b"/><rect x="768" y="148" width="8" height="8" fill="#545454"/><rect x="776" y="148" width="8" height="8" fill="#4e4e4e"/><rect x="784" y="148" width="48" height="8" fill="#4b4b4b"/><rect x="832" y="148" width="16" height="8" fill="#484848"/><rect x="848" y="148" width="24" height="8" fill="#454545"/><rect x="872" y="148" width="8" height="8" fill="#3f3f3f"/><rect x="880" y="148" width="8" height="8" fill="#393939"/><rect x="888" y="148" width="8" height="8" fill="#303030"/><rect x="896" y="148" width="8" height="8" fill="#2a2a2a"/><rect x="904" y="148" width="48" height="8" fill="#242424"/><rect x="952" y="148" width="64" height="8" fill="#212121"/><rect x="1016" y="148" width="8" height="8" fill="#242424"/><rect x="1024" y="148" width="8" height="8" fill="#212121"/><rect x="600" y="156" width="8" height="8" fill="#6c6c6c"/><rect x="608" y="156" width="8" height="8" fill="#6f6f6f"/><rect x="616" y="156" width="8" height="8" fill="#6c6c6c"/><rect x="624" y="156" width="32" height="8" fill="#696969"/><rect x="656" y="156" width="24" height="8" fill="#666666"/><rect x="680" y="156" width="40" height="8" fill="#606060"/><rect x="720" y="156" width="16" height="8" fill="#545454"/><rect x="736" y="156" width="8" height="8" fill="#4b4b4b"/><rect x="744" y="156" width="8" height="8" fill="#5a5a5a"/><rect x="752" y="156" width="8" height="8" fill="#545454"/><rect x="760" y="156" width="56" height="8" fill="#4b4b4b"/><rect x="816" y="156" width="24" height="8" fill="#484848"/><rect x="840" y="156" width="24" height="8" fill="#454545"/><rect x="864" y="156" width="8" height="8" fill="#424242"/><rect x="872" y="156" width="8" height="8" fill="#3f3f3f"/><rect x="880" y="156" width="8" height="8" fill="#393939"/><rect x="888" y="156" width="8" height="8" fill="#333333"/><rect x="896" y="156" width="8" height="8" fill="#2d2d2d"/><rect x="904" y="156" width="8" height="8" fill="#272727"/><rect x="912" y="156" width="40" height="8" fill="#242424"/><rect x="952" y="156" width="56" height="8" fill="#212121"/><rect x="1008" y="156" width="16" height="8" fill="#242424"/><rect x="1024" y="156" width="8" height="8" fill="#212121"/><rect x="600" y="164" width="16" height="8" fill="#6f6f6f"/><rect x="616" y="164" width="8" height="8" fill="#6c6c6c"/><rect x="624" y="164" width="32" height="8" fill="#696969"/><rect x="656" y="164" width="24" height="8" fill="#666666"/><rect x="680" y="164" width="40" height="8" fill="#606060"/><rect x="720" y="164" width="8" height="8" fill="#545454"/><rect x="728" y="164" width="8" height="8" fill="#5a5a5a"/><rect x="736" y="164" width="8" height="8" fill="#545454"/><rect x="744" y="164" width="8" height="8" fill="#515151"/><rect x="752" y="164" width="8" height="8" fill="#4e4e4e"/><rect x="760" y="164" width="56" height="8" fill="#4b4b4b"/><rect x="816" y="164" width="16" height="8" fill="#484848"/><rect x="832" y="164" width="24" height="8" fill="#454545"/><rect x="856" y="164" width="16" height="8" fill="#424242"/><rect x="872" y="164" width="8" height="8" fill="#3f3f3f"/><rect x="880" y="164" width="8" height="8" fill="#393939"/><rect x="888" y="164" width="8" height="8" fill="#333333"/><rect x="896" y="164" width="8" height="8" fill="#2d2d2d"/><rect x="904" y="164" width="8" height="8" fill="#272727"/><rect x="912" y="164" width="40" height="8" fill="#242424"/><rect x="952" y="164" width="56" height="8" fill="#212121"/><rect x="1008" y="164" width="16" height="8" fill="#242424"/><rect x="1024" y="164" width="8" height="8" fill="#212121"/><rect x="600" y="172" width="16" height="8" fill="#6f6f6f"/><rect x="616" y="172" width="16" height="8" fill="#6c6c6c"/><rect x="632" y="172" width="32" height="8" fill="#696969"/><rect x="664" y="172" width="16" height="8" fill="#666666"/><rect x="680" y="172" width="16" height="8" fill="#606060"/><rect x="696" y="172" width="16" height="8" fill="#5d5d5d"/><rect x="712" y="172" width="8" height="8" fill="#5a5a5a"/><rect x="720" y="172" width="8" height="8" fill="#575757"/><rect x="728" y="172" width="16" height="8" fill="#545454"/><rect x="744" y="172" width="8" height="8" fill="#515151"/><rect x="752" y="172" width="8" height="8" fill="#4e4e4e"/><rect x="760" y="172" width="8" height="8" fill="#4b4b4b"/><rect x="768" y="172" width="8" height="8" fill="#484848"/><rect x="776" y="172" width="24" height="8" fill="#4b4b4b"/><rect x="800" y="172" width="24" height="8" fill="#484848"/><rect x="824" y="172" width="8" height="8" fill="#454545"/><rect x="832" y="172" width="40" height="8" fill="#424242"/><rect x="872" y="172" width="8" height="8" fill="#3f3f3f"/><rect x="880" y="172" width="8" height="8" fill="#393939"/><rect x="888" y="172" width="8" height="8" fill="#333333"/><rect x="896" y="172" width="8" height="8" fill="#303030"/><rect x="904" y="172" width="16" height="8" fill="#2a2a2a"/><rect x="920" y="172" width="56" height="8" fill="#2d2d2d"/><rect x="976" y="172" width="24" height="8" fill="#2a2a2a"/><rect x="1000" y="172" width="8" height="8" fill="#2d2d2d"/><rect x="1008" y="172" width="16" height="8" fill="#303030"/><rect x="1024" y="172" width="8" height="8" fill="#2d2d2d"/><rect x="600" y="180" width="24" height="8" fill="#6f6f6f"/><rect x="624" y="180" width="8" height="8" fill="#6c6c6c"/><rect x="632" y="180" width="32" height="8" fill="#696969"/><rect x="664" y="180" width="16" height="8" fill="#666666"/><rect x="680" y="180" width="16" height="8" fill="#606060"/><rect x="696" y="180" width="8" height="8" fill="#5d5d5d"/><rect x="704" y="180" width="16" height="8" fill="#5a5a5a"/><rect x="720" y="180" width="8" height="8" fill="#575757"/><rect x="728" y="180" width="8" height="8" fill="#545454"/><rect x="736" y="180" width="8" height="8" fill="#515151"/><rect x="744" y="180" width="16" height="8" fill="#4e4e4e"/><rect x="760" y="180" width="8" height="8" fill="#4b4b4b"/><rect x="768" y="180" width="40" height="8" fill="#484848"/><rect x="808" y="180" width="16" height="8" fill="#454545"/><rect x="824" y="180" width="48" height="8" fill="#424242"/><rect x="872" y="180" width="8" height="8" fill="#3f3f3f"/><rect x="880" y="180" width="8" height="8" fill="#393939"/><rect x="888" y="180" width="8" height="8" fill="#363636"/><rect x="896" y="180" width="8" height="8" fill="#303030"/><rect x="904" y="180" width="8" height="8" fill="#2d2d2d"/><rect x="912" y="180" width="8" height="8" fill="#2a2a2a"/><rect x="920" y="180" width="56" height="8" fill="#2d2d2d"/><rect x="976" y="180" width="16" height="8" fill="#2a2a2a"/><rect x="992" y="180" width="16" height="8" fill="#2d2d2d"/><rect x="1008" y="180" width="16" height="8" fill="#303030"/><rect x="1024" y="180" width="8" height="8" fill="#2d2d2d"/><rect x="600" y="188" width="8" height="8" fill="#6f6f6f"/><rect x="608" y="188" width="8" height="8" fill="#727272"/><rect x="616" y="188" width="8" height="8" fill="#6f6f6f"/><rect x="624" y="188" width="16" height="8" fill="#6c6c6c"/><rect x="640" y="188" width="32" height="8" fill="#696969"/><rect x="672" y="188" width="16" height="8" fill="#636363"/><rect x="688" y="188" width="8" height="8" fill="#606060"/><rect x="696" y="188" width="8" height="8" fill="#5d5d5d"/><rect x="704" y="188" width="8" height="8" fill="#5a5a5a"/><rect x="712" y="188" width="16" height="8" fill="#575757"/><rect x="728" y="188" width="8" height="8" fill="#545454"/><rect x="736" y="188" width="8" height="8" fill="#515151"/><rect x="744" y="188" width="8" height="8" fill="#4e4e4e"/><rect x="752" y="188" width="16" height="8" fill="#4b4b4b"/><rect x="768" y="188" width="32" height="8" fill="#484848"/><rect x="800" y="188" width="16" height="8" fill="#454545"/><rect x="816" y="188" width="24" height="8" fill="#424242"/><rect x="840" y="188" width="40" height="8" fill="#3f3f3f"/><rect x="880" y="188" width="8" height="8" fill="#3c3c3c"/><rect x="888" y="188" width="8" height="8" fill="#393939"/><rect x="896" y="188" width="8" height="8" fill="#333333"/><rect x="904" y="188" width="8" height="8" fill="#303030"/><rect x="912" y="188" width="64" height="8" fill="#2d2d2d"/><rect x="976" y="188" width="16" height="8" fill="#2a2a2a"/><rect x="992" y="188" width="8" height="8" fill="#2d2d2d"/><rect x="1000" y="188" width="24" height="8" fill="#303030"/><rect x="1024" y="188" width="8" height="8" fill="#2d2d2d"/><rect x="600" y="196" width="8" height="8" fill="#6f6f6f"/><rect x="608" y="196" width="16" height="8" fill="#727272"/><rect x="624" y="196" width="8" height="8" fill="#6f6f6f"/><rect x="632" y="196" width="8" height="8" fill="#6c6c6c"/><rect x="640" y="196" width="32" height="8" fill="#696969"/><rect x="672" y="196" width="8" height="8" fill="#666666"/><rect x="680" y="196" width="8" height="8" fill="#636363"/><rect x="688" y="196" width="8" height="8" fill="#606060"/><rect x="696" y="196" width="8" height="8" fill="#5d5d5d"/><rect x="704" y="196" width="8" height="8" fill="#5a5a5a"/><rect x="712" y="196" width="8" height="8" fill="#575757"/><rect x="720" y="196" width="16" height="8" fill="#545454"/><rect x="736" y="196" width="8" height="8" fill="#515151"/><rect x="744" y="196" width="8" height="8" fill="#4e4e4e"/><rect x="752" y="196" width="16" height="8" fill="#4b4b4b"/><rect x="768" y="196" width="24" height="8" fill="#484848"/><rect x="792" y="196" width="24" height="8" fill="#454545"/><rect x="816" y="196" width="16" height="8" fill="#424242"/><rect x="832" y="196" width="48" height="8" fill="#3f3f3f"/><rect x="880" y="196" width="8" height="8" fill="#3c3c3c"/><rect x="888" y="196" width="8" height="8" fill="#393939"/><rect x="896" y="196" width="8" height="8" fill="#363636"/><rect x="904" y="196" width="24" height="8" fill="#303030"/><rect x="928" y="196" width="48" height="8" fill="#2d2d2d"/><rect x="976" y="196" width="8" height="8" fill="#2a2a2a"/><rect x="984" y="196" width="16" height="8" fill="#2d2d2d"/><rect x="1000" y="196" width="24" height="8" fill="#303030"/><rect x="1024" y="196" width="8" height="8" fill="#2d2d2d"/><rect x="600" y="204" width="8" height="8" fill="#6f6f6f"/><rect x="608" y="204" width="16" height="8" fill="#727272"/><rect x="624" y="204" width="8" height="8" fill="#6f6f6f"/><rect x="632" y="204" width="16" height="8" fill="#6c6c6c"/><rect x="648" y="204" width="24" height="8" fill="#696969"/><rect x="672" y="204" width="8" height="8" fill="#666666"/><rect x="680" y="204" width="8" height="8" fill="#636363"/><rect x="688" y="204" width="8" height="8" fill="#606060"/><rect x="696" y="204" width="8" height="8" fill="#5d5d5d"/><rect x="704" y="204" width="8" height="8" fill="#5a5a5a"/><rect x="712" y="204" width="8" height="8" fill="#575757"/><rect x="720" y="204" width="8" height="8" fill="#545454"/><rect x="728" y="204" width="16" height="8" fill="#515151"/><rect x="744" y="204" width="8" height="8" fill="#4e4e4e"/><rect x="752" y="204" width="16" height="8" fill="#4b4b4b"/><rect x="768" y="204" width="24" height="8" fill="#484848"/><rect x="792" y="204" width="16" height="8" fill="#454545"/><rect x="808" y="204" width="24" height="8" fill="#424242"/><rect x="832" y="204" width="40" height="8" fill="#3f3f3f"/><rect x="872" y="204" width="8" height="8" fill="#424242"/><rect x="880" y="204" width="8" height="8" fill="#3c3c3c"/><rect x="888" y="204" width="8" height="8" fill="#393939"/><rect x="896" y="204" width="8" height="8" fill="#363636"/><rect x="904" y="204" width="16" height="8" fill="#333333"/><rect x="920" y="204" width="8" height="8" fill="#303030"/><rect x="928" y="204" width="24" height="8" fill="#333333"/><rect x="952" y="204" width="32" height="8" fill="#303030"/><rect x="984" y="204" width="16" height="8" fill="#333333"/><rect x="1000" y="204" width="24" height="8" fill="#363636"/><rect x="1024" y="204" width="8" height="8" fill="#333333"/><rect x="600" y="212" width="8" height="8" fill="#6f6f6f"/><rect x="608" y="212" width="16" height="8" fill="#727272"/><rect x="624" y="212" width="16" height="8" fill="#6f6f6f"/><rect x="640" y="212" width="8" height="8" fill="#6c6c6c"/><rect x="648" y="212" width="24" height="8" fill="#696969"/><rect x="672" y="212" width="8" height="8" fill="#666666"/><rect x="680" y="212" width="8" height="8" fill="#636363"/><rect x="688" y="212" width="8" height="8" fill="#606060"/><rect x="696" y="212" width="8" height="8" fill="#5d5d5d"/><rect x="704" y="212" width="8" height="8" fill="#5a5a5a"/><rect x="712" y="212" width="8" height="8" fill="#575757"/><rect x="720" y="212" width="8" height="8" fill="#545454"/><rect x="728" y="212" width="8" height="8" fill="#515151"/><rect x="736" y="212" width="16" height="8" fill="#4e4e4e"/><rect x="752" y="212" width="8" height="8" fill="#4b4b4b"/><rect x="760" y="212" width="24" height="8" fill="#484848"/><rect x="784" y="212" width="24" height="8" fill="#454545"/><rect x="808" y="212" width="16" height="8" fill="#424242"/><rect x="824" y="212" width="40" height="8" fill="#3f3f3f"/><rect x="864" y="212" width="16" height="8" fill="#424242"/><rect x="880" y="212" width="8" height="8" fill="#3f3f3f"/><rect x="888" y="212" width="8" height="8" fill="#393939"/><rect x="896" y="212" width="8" height="8" fill="#363636"/><rect x="904" y="212" width="56" height="8" fill="#333333"/><rect x="960" y="212" width="24" height="8" fill="#303030"/><rect x="984" y="212" width="8" height="8" fill="#333333"/><rect x="992" y="212" width="32" height="8" fill="#363636"/><rect x="1024" y="212" width="8" height="8" fill="#333333"/><rect x="600" y="220" width="8" height="8" fill="#6f6f6f"/><rect x="608" y="220" width="24" height="8" fill="#727272"/><rect x="632" y="220" width="8" height="8" fill="#6f6f6f"/><rect x="640" y="220" width="8" height="8" fill="#6c6c6c"/><rect x="648" y="220" width="8" height="8" fill="#696969"/><rect x="656" y="220" width="8" height="8" fill="#6c6c6c"/><rect x="664" y="220" width="8" height="8" fill="#696969"/><rect x="672" y="220" width="8" height="8" fill="#666666"/><rect x="680" y="220" width="8" height="8" fill="#636363"/><rect x="688" y="220" width="8" height="8" fill="#606060"/><rect x="696" y="220" width="8" height="8" fill="#5d5d5d"/><rect x="704" y="220" width="8" height="8" fill="#5a5a5a"/><rect x="712" y="220" width="8" height="8" fill="#575757"/><rect x="720" y="220" width="8" height="8" fill="#545454"/><rect x="728" y="220" width="8" height="8" fill="#515151"/><rect x="736" y="220" width="8" height="8" fill="#4e4e4e"/><rect x="744" y="220" width="16" height="8" fill="#4b4b4b"/><rect x="760" y="220" width="8" height="8" fill="#484848"/><rect x="768" y="220" width="40" height="8" fill="#454545"/><rect x="808" y="220" width="16" height="8" fill="#424242"/><rect x="824" y="220" width="32" height="8" fill="#3f3f3f"/><rect x="856" y="220" width="24" height="8" fill="#424242"/><rect x="880" y="220" width="8" height="8" fill="#3f3f3f"/><rect x="888" y="220" width="8" height="8" fill="#3c3c3c"/><rect x="896" y="220" width="8" height="8" fill="#363636"/><rect x="904" y="220" width="8" height="8" fill="#333333"/><rect x="912" y="220" width="24" height="8" fill="#363636"/><rect x="936" y="220" width="24" height="8" fill="#333333"/><rect x="960" y="220" width="8" height="8" fill="#303030"/><rect x="968" y="220" width="16" height="8" fill="#333333"/><rect x="984" y="220" width="16" height="8" fill="#363636"/><rect x="1000" y="220" width="16" height="8" fill="#393939"/><rect x="1016" y="220" width="8" height="8" fill="#363636"/><rect x="1024" y="220" width="8" height="8" fill="#333333"/><rect x="600" y="228" width="8" height="8" fill="#757575"/><rect x="608" y="228" width="8" height="8" fill="#787878"/><rect x="616" y="228" width="8" height="8" fill="#7b7b7b"/><rect x="624" y="228" width="8" height="8" fill="#757575"/><rect x="632" y="228" width="8" height="8" fill="#727272"/><rect x="640" y="228" width="8" height="8" fill="#6f6f6f"/><rect x="648" y="228" width="8" height="8" fill="#666666"/><rect x="656" y="228" width="8" height="8" fill="#6c6c6c"/><rect x="664" y="228" width="8" height="8" fill="#696969"/><rect x="672" y="228" width="8" height="8" fill="#666666"/><rect x="680" y="228" width="8" height="8" fill="#636363"/><rect x="688" y="228" width="8" height="8" fill="#606060"/><rect x="696" y="228" width="8" height="8" fill="#5d5d5d"/><rect x="704" y="228" width="8" height="8" fill="#5a5a5a"/><rect x="712" y="228" width="8" height="8" fill="#575757"/><rect x="720" y="228" width="8" height="8" fill="#545454"/><rect x="728" y="228" width="8" height="8" fill="#515151"/><rect x="736" y="228" width="8" height="8" fill="#4e4e4e"/><rect x="744" y="228" width="8" height="8" fill="#4b4b4b"/><rect x="752" y="228" width="16" height="8" fill="#484848"/><rect x="768" y="228" width="8" height="8" fill="#454545"/><rect x="776" y="228" width="24" height="8" fill="#424242"/><rect x="800" y="228" width="8" height="8" fill="#454545"/><rect x="808" y="228" width="48" height="8" fill="#424242"/><rect x="856" y="228" width="16" height="8" fill="#454545"/><rect x="872" y="228" width="8" height="8" fill="#424242"/><rect x="880" y="228" width="8" height="8" fill="#3f3f3f"/><rect x="888" y="228" width="8" height="8" fill="#3c3c3c"/><rect x="896" y="228" width="8" height="8" fill="#393939"/><rect x="904" y="228" width="16" height="8" fill="#363636"/><rect x="920" y="228" width="8" height="8" fill="#393939"/><rect x="928" y="228" width="8" height="8" fill="#363636"/><rect x="936" y="228" width="24" height="8" fill="#333333"/><rect x="960" y="228" width="8" height="8" fill="#303030"/><rect x="968" y="228" width="16" height="8" fill="#333333"/><rect x="984" y="228" width="8" height="8" fill="#363636"/><rect x="992" y="228" width="24" height="8" fill="#393939"/><rect x="1016" y="228" width="8" height="8" fill="#363636"/><rect x="1024" y="228" width="8" height="8" fill="#333333"/><rect x="600" y="236" width="8" height="8" fill="#0c0c0c"/><rect x="608" y="236" width="8" height="8" fill="#787878"/><rect x="616" y="236" width="8" height="8" fill="#7b7b7b"/><rect x="624" y="236" width="16" height="8" fill="#787878"/><rect x="640" y="236" width="8" height="8" fill="#4e4e4e"/><rect x="648" y="236" width="8" height="8" fill="#666666"/><rect x="656" y="236" width="8" height="8" fill="#6c6c6c"/><rect x="664" y="236" width="8" height="8" fill="#696969"/><rect x="672" y="236" width="8" height="8" fill="#636363"/><rect x="680" y="236" width="8" height="8" fill="#606060"/><rect x="688" y="236" width="16" height="8" fill="#5d5d5d"/><rect x="704" y="236" width="8" height="8" fill="#5a5a5a"/><rect x="712" y="236" width="8" height="8" fill="#575757"/><rect x="720" y="236" width="8" height="8" fill="#545454"/><rect x="728" y="236" width="8" height="8" fill="#515151"/><rect x="736" y="236" width="8" height="8" fill="#4e4e4e"/><rect x="744" y="236" width="8" height="8" fill="#4b4b4b"/><rect x="752" y="236" width="8" height="8" fill="#484848"/><rect x="760" y="236" width="8" height="8" fill="#454545"/><rect x="768" y="236" width="24" height="8" fill="#424242"/><rect x="792" y="236" width="8" height="8" fill="#454545"/><rect x="800" y="236" width="8" height="8" fill="#484848"/><rect x="808" y="236" width="8" height="8" fill="#454545"/><rect x="816" y="236" width="32" height="8" fill="#424242"/><rect x="848" y="236" width="8" height="8" fill="#454545"/><rect x="856" y="236" width="16" height="8" fill="#484848"/><rect x="872" y="236" width="8" height="8" fill="#454545"/><rect x="880" y="236" width="8" height="8" fill="#424242"/><rect x="888" y="236" width="8" height="8" fill="#3f3f3f"/><rect x="896" y="236" width="8" height="8" fill="#3c3c3c"/><rect x="904" y="236" width="8" height="8" fill="#393939"/><rect x="912" y="236" width="8" height="8" fill="#363636"/><rect x="920" y="236" width="16" height="8" fill="#393939"/><rect x="936" y="236" width="40" height="8" fill="#333333"/><rect x="976" y="236" width="16" height="8" fill="#363636"/><rect x="992" y="236" width="24" height="8" fill="#393939"/><rect x="1016" y="236" width="8" height="8" fill="#363636"/><rect x="1024" y="236" width="8" height="8" fill="#333333"/><rect x="600" y="244" width="16" height="8" fill="#0c0c0c"/><rect x="616" y="244" width="16" height="8" fill="#7b7b7b"/><rect x="632" y="244" width="8" height="8" fill="#787878"/><rect x="640" y="244" width="8" height="8" fill="#4e4e4e"/><rect x="648" y="244" width="8" height="8" fill="#606060"/><rect x="656" y="244" width="8" height="8" fill="#6c6c6c"/><rect x="664" y="244" width="8" height="8" fill="#666666"/><rect x="672" y="244" width="8" height="8" fill="#636363"/><rect x="680" y="244" width="8" height="8" fill="#606060"/><rect x="688" y="244" width="8" height="8" fill="#5d5d5d"/><rect x="696" y="244" width="16" height="8" fill="#5a5a5a"/><rect x="712" y="244" width="8" height="8" fill="#575757"/><rect x="720" y="244" width="8" height="8" fill="#545454"/><rect x="728" y="244" width="8" height="8" fill="#515151"/><rect x="736" y="244" width="8" height="8" fill="#4e4e4e"/><rect x="744" y="244" width="8" height="8" fill="#4b4b4b"/><rect x="752" y="244" width="8" height="8" fill="#484848"/><rect x="760" y="244" width="8" height="8" fill="#424242"/><rect x="768" y="244" width="16" height="8" fill="#3f3f3f"/><rect x="784" y="244" width="8" height="8" fill="#424242"/><rect x="792" y="244" width="8" height="8" fill="#484848"/><rect x="800" y="244" width="8" height="8" fill="#4b4b4b"/><rect x="808" y="244" width="8" height="8" fill="#484848"/><rect x="816" y="244" width="32" height="8" fill="#454545"/><rect x="848" y="244" width="32" height="8" fill="#484848"/><rect x="880" y="244" width="8" height="8" fill="#454545"/><rect x="888" y="244" width="8" height="8" fill="#424242"/><rect x="896" y="244" width="8" height="8" fill="#3f3f3f"/><rect x="904" y="244" width="8" height="8" fill="#3c3c3c"/><rect x="912" y="244" width="8" height="8" fill="#393939"/><rect x="920" y="244" width="16" height="8" fill="#3c3c3c"/><rect x="936" y="244" width="8" height="8" fill="#3f3f3f"/><rect x="944" y="244" width="24" height="8" fill="#3c3c3c"/><rect x="968" y="244" width="16" height="8" fill="#3f3f3f"/><rect x="984" y="244" width="8" height="8" fill="#424242"/><rect x="992" y="244" width="16" height="8" fill="#454545"/><rect x="1008" y="244" width="16" height="8" fill="#424242"/><rect x="1024" y="244" width="8" height="8" fill="#3f3f3f"/><rect x="600" y="252" width="16" height="8" fill="#0c0c0c"/><rect x="616" y="252" width="16" height="8" fill="#0f0f0f"/><rect x="632" y="252" width="8" height="8" fill="#393939"/><rect x="640" y="252" width="8" height="8" fill="#4e4e4e"/><rect x="648" y="252" width="8" height="8" fill="#5a5a5a"/><rect x="656" y="252" width="16" height="8" fill="#666666"/><rect x="672" y="252" width="8" height="8" fill="#636363"/><rect x="680" y="252" width="8" height="8" fill="#606060"/><rect x="688" y="252" width="8" height="8" fill="#5d5d5d"/><rect x="696" y="252" width="8" height="8" fill="#5a5a5a"/><rect x="704" y="252" width="16" height="8" fill="#575757"/><rect x="720" y="252" width="8" height="8" fill="#545454"/><rect x="728" y="252" width="8" height="8" fill="#515151"/><rect x="736" y="252" width="8" height="8" fill="#4e4e4e"/><rect x="744" y="252" width="8" height="8" fill="#484848"/><rect x="752" y="252" width="8" height="8" fill="#454545"/><rect x="760" y="252" width="8" height="8" fill="#424242"/><rect x="768" y="252" width="8" height="8" fill="#3c3c3c"/><rect x="776" y="252" width="8" height="8" fill="#3f3f3f"/><rect x="784" y="252" width="8" height="8" fill="#454545"/><rect x="792" y="252" width="8" height="8" fill="#484848"/><rect x="800" y="252" width="8" height="8" fill="#4e4e4e"/><rect x="808" y="252" width="16" height="8" fill="#4b4b4b"/><rect x="824" y="252" width="24" height="8" fill="#484848"/><rect x="848" y="252" width="24" height="8" fill="#4b4b4b"/><rect x="872" y="252" width="8" height="8" fill="#484848"/><rect x="880" y="252" width="8" height="8" fill="#454545"/><rect x="888" y="252" width="8" height="8" fill="#424242"/><rect x="896" y="252" width="8" height="8" fill="#3f3f3f"/><rect x="904" y="252" width="24" height="8" fill="#3c3c3c"/><rect x="928" y="252" width="8" height="8" fill="#3f3f3f"/><rect x="936" y="252" width="8" height="8" fill="#3c3c3c"/><rect x="944" y="252" width="8" height="8" fill="#3f3f3f"/><rect x="952" y="252" width="16" height="8" fill="#3c3c3c"/><rect x="968" y="252" width="8" height="8" fill="#3f3f3f"/><rect x="976" y="252" width="16" height="8" fill="#424242"/><rect x="992" y="252" width="24" height="8" fill="#454545"/><rect x="1016" y="252" width="16" height="8" fill="#424242"/><rect x="600" y="260" width="8" height="8" fill="#0c0c0c"/><rect x="608" y="260" width="24" height="8" fill="#0f0f0f"/><rect x="632" y="260" width="8" height="8" fill="#363636"/><rect x="640" y="260" width="8" height="8" fill="#454545"/><rect x="648" y="260" width="8" height="8" fill="#515151"/><rect x="656" y="260" width="8" height="8" fill="#5d5d5d"/><rect x="664" y="260" width="8" height="8" fill="#636363"/><rect x="672" y="260" width="8" height="8" fill="#606060"/><rect x="680" y="260" width="8" height="8" fill="#5d5d5d"/><rect x="688" y="260" width="8" height="8" fill="#5a5a5a"/><rect x="696" y="260" width="8" height="8" fill="#575757"/><rect x="704" y="260" width="8" height="8" fill="#545454"/><rect x="712" y="260" width="8" height="8" fill="#515151"/><rect x="720" y="260" width="24" height="8" fill="#4e4e4e"/><rect x="744" y="260" width="8" height="8" fill="#4b4b4b"/><rect x="752" y="260" width="8" height="8" fill="#454545"/><rect x="760" y="260" width="8" height="8" fill="#424242"/><rect x="768" y="260" width="8" height="8" fill="#3f3f3f"/><rect x="776" y="260" width="8" height="8" fill="#454545"/><rect x="784" y="260" width="8" height="8" fill="#484848"/><rect x="792" y="260" width="8" height="8" fill="#4e4e4e"/><rect x="800" y="260" width="16" height="8" fill="#515151"/><rect x="816" y="260" width="8" height="8" fill="#4e4e4e"/><rect x="824" y="260" width="16" height="8" fill="#4b4b4b"/><rect x="840" y="260" width="16" height="8" fill="#4e4e4e"/><rect x="856" y="260" width="8" height="8" fill="#515151"/><rect x="864" y="260" width="16" height="8" fill="#4e4e4e"/><rect x="880" y="260" width="8" height="8" fill="#4b4b4b"/><rect x="888" y="260" width="8" height="8" fill="#484848"/><rect x="896" y="260" width="8" height="8" fill="#454545"/><rect x="904" y="260" width="8" height="8" fill="#424242"/><rect x="912" y="260" width="8" height="8" fill="#3f3f3f"/><rect x="920" y="260" width="8" height="8" fill="#3c3c3c"/><rect x="928" y="260" width="24" height="8" fill="#3f3f3f"/><rect x="952" y="260" width="8" height="8" fill="#3c3c3c"/><rect x="960" y="260" width="8" height="8" fill="#3f3f3f"/><rect x="968" y="260" width="8" height="8" fill="#424242"/><rect x="976" y="260" width="8" height="8" fill="#454545"/><rect x="984" y="260" width="24" height="8" fill="#484848"/><rect x="1008" y="260" width="8" height="8" fill="#454545"/><rect x="1016" y="260" width="16" height="8" fill="#424242"/><rect x="600" y="268" width="8" height="8" fill="#0c0c0c"/><rect x="608" y="268" width="16" height="8" fill="#0f0f0f"/><rect x="624" y="268" width="8" height="8" fill="#121212"/><rect x="632" y="268" width="8" height="8" fill="#333333"/><rect x="640" y="268" width="8" height="8" fill="#3f3f3f"/><rect x="648" y="268" width="8" height="8" fill="#4b4b4b"/><rect x="656" y="268" width="8" height="8" fill="#515151"/><rect x="664" y="268" width="24" height="8" fill="#575757"/><rect x="688" y="268" width="8" height="8" fill="#545454"/><rect x="696" y="268" width="8" height="8" fill="#515151"/><rect x="704" y="268" width="8" height="8" fill="#4e4e4e"/><rect x="712" y="268" width="16" height="8" fill="#4b4b4b"/><rect x="728" y="268" width="24" height="8" fill="#4e4e4e"/><rect x="752" y="268" width="8" height="8" fill="#4b4b4b"/><rect x="760" y="268" width="8" height="8" fill="#484848"/><rect x="768" y="268" width="8" height="8" fill="#454545"/><rect x="776" y="268" width="8" height="8" fill="#484848"/><rect x="784" y="268" width="8" height="8" fill="#4e4e4e"/><rect x="792" y="268" width="32" height="8" fill="#515151"/><rect x="824" y="268" width="16" height="8" fill="#4e4e4e"/><rect x="840" y="268" width="8" height="8" fill="#515151"/><rect x="848" y="268" width="16" height="8" fill="#5a5a5a"/><rect x="864" y="268" width="16" height="8" fill="#575757"/><rect x="880" y="268" width="8" height="8" fill="#515151"/><rect x="888" y="268" width="8" height="8" fill="#4e4e4e"/><rect x="896" y="268" width="8" height="8" fill="#4b4b4b"/><rect x="904" y="268" width="8" height="8" fill="#484848"/><rect x="912" y="268" width="16" height="8" fill="#3f3f3f"/><rect x="928" y="268" width="16" height="8" fill="#424242"/><rect x="944" y="268" width="16" height="8" fill="#3f3f3f"/><rect x="960" y="268" width="8" height="8" fill="#424242"/><rect x="968" y="268" width="16" height="8" fill="#454545"/><rect x="984" y="268" width="24" height="8" fill="#484848"/><rect x="1008" y="268" width="16" height="8" fill="#454545"/><rect x="1024" y="268" width="8" height="8" fill="#424242"/><rect x="600" y="276" width="8" height="8" fill="#0c0c0c"/><rect x="608" y="276" width="8" height="8" fill="#0f0f0f"/><rect x="616" y="276" width="8" height="8" fill="#121212"/><rect x="624" y="276" width="8" height="8" fill="#1e1e1e"/><rect x="632" y="276" width="8" height="8" fill="#2a2a2a"/><rect x="640" y="276" width="8" height="8" fill="#393939"/><rect x="648" y="276" width="8" height="8" fill="#3f3f3f"/><rect x="656" y="276" width="8" height="8" fill="#454545"/><rect x="664" y="276" width="16" height="8" fill="#4b4b4b"/><rect x="680" y="276" width="8" height="8" fill="#4e4e4e"/><rect x="688" y="276" width="8" height="8" fill="#4b4b4b"/><rect x="696" y="276" width="16" height="8" fill="#484848"/><rect x="712" y="276" width="8" height="8" fill="#454545"/><rect x="720" y="276" width="8" height="8" fill="#484848"/><rect x="728" y="276" width="8" height="8" fill="#4b4b4b"/><rect x="736" y="276" width="16" height="8" fill="#4e4e4e"/><rect x="752" y="276" width="8" height="8" fill="#515151"/><rect x="760" y="276" width="8" height="8" fill="#4b4b4b"/><rect x="768" y="276" width="8" height="8" fill="#484848"/><rect x="776" y="276" width="8" height="8" fill="#4e4e4e"/><rect x="784" y="276" width="8" height="8" fill="#515151"/><rect x="792" y="276" width="32" height="8" fill="#545454"/><rect x="824" y="276" width="16" height="8" fill="#515151"/><rect x="840" y="276" width="8" height="8" fill="#545454"/><rect x="848" y="276" width="8" height="8" fill="#5d5d5d"/><rect x="856" y="276" width="24" height="8" fill="#606060"/><rect x="880" y="276" width="8" height="8" fill="#5a5a5a"/><rect x="888" y="276" width="8" height="8" fill="#545454"/><rect x="896" y="276" width="8" height="8" fill="#515151"/><rect x="904" y="276" width="8" height="8" fill="#4e4e4e"/><rect x="912" y="276" width="8" height="8" fill="#454545"/><rect x="920" y="276" width="16" height="8" fill="#424242"/><rect x="936" y="276" width="16" height="8" fill="#454545"/><rect x="952" y="276" width="8" height="8" fill="#5a5a5a"/><rect x="960" y="276" width="16" height="8" fill="#5d5d5d"/><rect x="976" y="276" width="8" height="8" fill="#606060"/><rect x="984" y="276" width="16" height="8" fill="#636363"/><rect x="1000" y="276" width="16" height="8" fill="#606060"/><rect x="1016" y="276" width="8" height="8" fill="#5d5d5d"/><rect x="1024" y="276" width="8" height="8" fill="#5a5a5a"/><rect x="600" y="284" width="8" height="8" fill="#0c0c0c"/><rect x="608" y="284" width="8" height="8" fill="#0f0f0f"/><rect x="616" y="284" width="8" height="8" fill="#121212"/><rect x="624" y="284" width="8" height="8" fill="#151515"/><rect x="632" y="284" width="8" height="8" fill="#242424"/><rect x="640" y="284" width="8" height="8" fill="#2a2a2a"/><rect x="648" y="284" width="8" height="8" fill="#303030"/><rect x="656" y="284" width="8" height="8" fill="#393939"/><rect x="664" y="284" width="16" height="8" fill="#3f3f3f"/><rect x="680" y="284" width="8" height="8" fill="#424242"/><rect x="688" y="284" width="8" height="8" fill="#454545"/><rect x="696" y="284" width="16" height="8" fill="#424242"/><rect x="712" y="284" width="8" height="8" fill="#454545"/><rect x="720" y="284" width="8" height="8" fill="#484848"/><rect x="728" y="284" width="8" height="8" fill="#4b4b4b"/><rect x="736" y="284" width="24" height="8" fill="#4e4e4e"/><rect x="760" y="284" width="8" height="8" fill="#515151"/><rect x="768" y="284" width="8" height="8" fill="#4e4e4e"/><rect x="776" y="284" width="8" height="8" fill="#515151"/><rect x="784" y="284" width="8" height="8" fill="#545454"/><rect x="792" y="284" width="8" height="8" fill="#575757"/><rect x="800" y="284" width="8" height="8" fill="#5a5a5a"/><rect x="808" y="284" width="16" height="8" fill="#575757"/><rect x="824" y="284" width="16" height="8" fill="#545454"/><rect x="840" y="284" width="8" height="8" fill="#575757"/><rect x="848" y="284" width="8" height="8" fill="#5d5d5d"/><rect x="856" y="284" width="8" height="8" fill="#636363"/><rect x="864" y="284" width="16" height="8" fill="#696969"/><rect x="880" y="284" width="8" height="8" fill="#636363"/><rect x="888" y="284" width="8" height="8" fill="#5d5d5d"/><rect x="896" y="284" width="8" height="8" fill="#575757"/><rect x="904" y="284" width="8" height="8" fill="#545454"/><rect x="912" y="284" width="8" height="8" fill="#4b4b4b"/><rect x="920" y="284" width="8" height="8" fill="#454545"/><rect x="928" y="284" width="8" height="8" fill="#424242"/><rect x="936" y="284" width="8" height="8" fill="#454545"/><rect x="944" y="284" width="8" height="8" fill="#484848"/><rect x="952" y="284" width="8" height="8" fill="#5a5a5a"/><rect x="960" y="284" width="8" height="8" fill="#5d5d5d"/><rect x="968" y="284" width="16" height="8" fill="#606060"/><rect x="984" y="284" width="24" height="8" fill="#636363"/><rect x="1008" y="284" width="8" height="8" fill="#606060"/><rect x="1016" y="284" width="8" height="8" fill="#5d5d5d"/><rect x="1024" y="284" width="8" height="8" fill="#5a5a5a"/><rect x="600" y="292" width="8" height="8" fill="#0c0c0c"/><rect x="608" y="292" width="8" height="8" fill="#0f0f0f"/><rect x="616" y="292" width="8" height="8" fill="#151515"/><rect x="624" y="292" width="8" height="8" fill="#181818"/><rect x="632" y="292" width="8" height="8" fill="#212121"/><rect x="640" y="292" width="8" height="8" fill="#272727"/><rect x="648" y="292" width="8" height="8" fill="#2a2a2a"/><rect x="656" y="292" width="8" height="8" fill="#303030"/><rect x="664" y="292" width="8" height="8" fill="#363636"/><rect x="672" y="292" width="16" height="8" fill="#393939"/><rect x="688" y="292" width="8" height="8" fill="#3c3c3c"/><rect x="696" y="292" width="8" height="8" fill="#3f3f3f"/><rect x="704" y="292" width="8" height="8" fill="#424242"/><rect x="712" y="292" width="8" height="8" fill="#454545"/><rect x="720" y="292" width="8" height="8" fill="#484848"/><rect x="728" y="292" width="24" height="8" fill="#4e4e4e"/><rect x="752" y="292" width="16" height="8" fill="#515151"/><rect x="768" y="292" width="8" height="8" fill="#545454"/><rect x="776" y="292" width="16" height="8" fill="#575757"/><rect x="792" y="292" width="8" height="8" fill="#5a5a5a"/><rect x="800" y="292" width="8" height="8" fill="#5d5d5d"/><rect x="808" y="292" width="16" height="8" fill="#5a5a5a"/><rect x="824" y="292" width="16" height="8" fill="#575757"/><rect x="840" y="292" width="8" height="8" fill="#5a5a5a"/><rect x="848" y="292" width="8" height="8" fill="#606060"/><rect x="856" y="292" width="8" height="8" fill="#666666"/><rect x="864" y="292" width="8" height="8" fill="#6c6c6c"/><rect x="872" y="292" width="8" height="8" fill="#6f6f6f"/><rect x="880" y="292" width="8" height="8" fill="#696969"/><rect x="888" y="292" width="8" height="8" fill="#636363"/><rect x="896" y="292" width="8" height="8" fill="#5d5d5d"/><rect x="904" y="292" width="8" height="8" fill="#575757"/><rect x="912" y="292" width="8" height="8" fill="#515151"/><rect x="920" y="292" width="16" height="8" fill="#454545"/><rect x="936" y="292" width="8" height="8" fill="#484848"/><rect x="944" y="292" width="8" height="8" fill="#4b4b4b"/><rect x="952" y="292" width="16" height="8" fill="#5d5d5d"/><rect x="968" y="292" width="8" height="8" fill="#606060"/><rect x="976" y="292" width="32" height="8" fill="#636363"/><rect x="1008" y="292" width="8" height="8" fill="#606060"/><rect x="1016" y="292" width="8" height="8" fill="#5d5d5d"/><rect x="1024" y="292" width="8" height="8" fill="#5a5a5a"/><rect x="600" y="300" width="8" height="8" fill="#0c0c0c"/><rect x="608" y="300" width="16" height="8" fill="#151515"/><rect x="624" y="300" width="8" height="8" fill="#181818"/><rect x="632" y="300" width="8" height="8" fill="#2a2a2a"/><rect x="640" y="300" width="8" height="8" fill="#2d2d2d"/><rect x="648" y="300" width="8" height="8" fill="#333333"/><rect x="656" y="300" width="8" height="8" fill="#393939"/><rect x="664" y="300" width="8" height="8" fill="#424242"/><rect x="672" y="300" width="16" height="8" fill="#4b4b4b"/><rect x="688" y="300" width="8" height="8" fill="#4e4e4e"/><rect x="696" y="300" width="8" height="8" fill="#515151"/><rect x="704" y="300" width="8" height="8" fill="#545454"/><rect x="712" y="300" width="8" height="8" fill="#575757"/><rect x="720" y="300" width="32" height="8" fill="#5a5a5a"/><rect x="752" y="300" width="24" height="8" fill="#5d5d5d"/><rect x="776" y="300" width="8" height="8" fill="#575757"/><rect x="784" y="300" width="8" height="8" fill="#5a5a5a"/><rect x="792" y="300" width="8" height="8" fill="#5d5d5d"/><rect x="800" y="300" width="8" height="8" fill="#606060"/><rect x="808" y="300" width="8" height="8" fill="#5d5d5d"/><rect x="816" y="300" width="16" height="8" fill="#5a5a5a"/><rect x="832" y="300" width="16" height="8" fill="#575757"/><rect x="848" y="300" width="8" height="8" fill="#5a5a5a"/><rect x="856" y="300" width="8" height="8" fill="#606060"/><rect x="864" y="300" width="8" height="8" fill="#666666"/><rect x="872" y="300" width="8" height="8" fill="#6c6c6c"/><rect x="880" y="300" width="8" height="8" fill="#666666"/><rect x="888" y="300" width="8" height="8" fill="#606060"/><rect x="896" y="300" width="16" height="8" fill="#5a5a5a"/><rect x="912" y="300" width="8" height="8" fill="#575757"/><rect x="920" y="300" width="8" height="8" fill="#4b4b4b"/><rect x="928" y="300" width="16" height="8" fill="#484848"/><rect x="944" y="300" width="16" height="8" fill="#4e4e4e"/><rect x="960" y="300" width="16" height="8" fill="#606060"/><rect x="976" y="300" width="8" height="8" fill="#636363"/><rect x="984" y="300" width="8" height="8" fill="#666666"/><rect x="992" y="300" width="16" height="8" fill="#636363"/><rect x="1008" y="300" width="8" height="8" fill="#606060"/><rect x="1016" y="300" width="16" height="8" fill="#5d5d5d"/><rect x="600" y="308" width="8" height="8" fill="#121212"/><rect x="608" y="308" width="8" height="8" fill="#151515"/><rect x="616" y="308" width="16" height="8" fill="#181818"/><rect x="632" y="308" width="16" height="8" fill="#393939"/><rect x="648" y="308" width="8" height="8" fill="#3c3c3c"/><rect x="656" y="308" width="8" height="8" fill="#424242"/><rect x="664" y="308" width="8" height="8" fill="#4b4b4b"/><rect x="672" y="308" width="8" height="8" fill="#545454"/><rect x="680" y="308" width="16" height="8" fill="#606060"/><rect x="696" y="308" width="8" height="8" fill="#636363"/><rect x="704" y="308" width="40" height="8" fill="#666666"/><rect x="744" y="308" width="24" height="8" fill="#696969"/><rect x="768" y="308" width="8" height="8" fill="#666666"/><rect x="776" y="308" width="8" height="8" fill="#606060"/><rect x="784" y="308" width="8" height="8" fill="#5d5d5d"/><rect x="792" y="308" width="24" height="8" fill="#606060"/><rect x="816" y="308" width="8" height="8" fill="#5d5d5d"/><rect x="824" y="308" width="8" height="8" fill="#5a5a5a"/><rect x="832" y="308" width="16" height="8" fill="#575757"/><rect x="848" y="308" width="8" height="8" fill="#5a5a5a"/><rect x="856" y="308" width="8" height="8" fill="#5d5d5d"/><rect x="864" y="308" width="8" height="8" fill="#636363"/><rect x="872" y="308" width="8" height="8" fill="#666666"/><rect x="880" y="308" width="8" height="8" fill="#606060"/><rect x="888" y="308" width="8" height="8" fill="#5a5a5a"/><rect x="896" y="308" width="16" height="8" fill="#5d5d5d"/><rect x="912" y="308" width="8" height="8" fill="#5a5a5a"/><rect x="920" y="308" width="8" height="8" fill="#515151"/><rect x="928" y="308" width="16" height="8" fill="#4b4b4b"/><rect x="944" y="308" width="8" height="8" fill="#515151"/><rect x="952" y="308" width="8" height="8" fill="#545454"/><rect x="960" y="308" width="8" height="8" fill="#606060"/><rect x="968" y="308" width="16" height="8" fill="#636363"/><rect x="984" y="308" width="8" height="8" fill="#666666"/><rect x="992" y="308" width="16" height="8" fill="#636363"/><rect x="1008" y="308" width="8" height="8" fill="#606060"/><rect x="1016" y="308" width="16" height="8" fill="#5d5d5d"/><rect x="600" y="316" width="8" height="8" fill="#121212"/><rect x="608" y="316" width="8" height="8" fill="#151515"/><rect x="616" y="316" width="8" height="8" fill="#181818"/><rect x="624" y="316" width="8" height="8" fill="#636363"/><rect x="632" y="316" width="8" height="8" fill="#333333"/><rect x="640" y="316" width="16" height="8" fill="#454545"/><rect x="656" y="316" width="8" height="8" fill="#484848"/><rect x="664" y="316" width="8" height="8" fill="#515151"/><rect x="672" y="316" width="8" height="8" fill="#5d5d5d"/><rect x="680" y="316" width="8" height="8" fill="#696969"/><rect x="688" y="316" width="8" height="8" fill="#727272"/><rect x="696" y="316" width="8" height="8" fill="#757575"/><rect x="704" y="316" width="8" height="8" fill="#787878"/><rect x="712" y="316" width="8" height="8" fill="#757575"/><rect x="720" y="316" width="24" height="8" fill="#727272"/><rect x="744" y="316" width="8" height="8" fill="#757575"/><rect x="752" y="316" width="8" height="8" fill="#727272"/><rect x="760" y="316" width="16" height="8" fill="#6f6f6f"/><rect x="776" y="316" width="8" height="8" fill="#696969"/><rect x="784" y="316" width="8" height="8" fill="#636363"/><rect x="792" y="316" width="24" height="8" fill="#606060"/><rect x="816" y="316" width="8" height="8" fill="#5d5d5d"/><rect x="824" y="316" width="8" height="8" fill="#5a5a5a"/><rect x="832" y="316" width="24" height="8" fill="#575757"/><rect x="856" y="316" width="8" height="8" fill="#5a5a5a"/><rect x="864" y="316" width="8" height="8" fill="#5d5d5d"/><rect x="872" y="316" width="8" height="8" fill="#636363"/><rect x="880" y="316" width="24" height="8" fill="#5d5d5d"/><rect x="904" y="316" width="8" height="8" fill="#606060"/><rect x="912" y="316" width="8" height="8" fill="#5d5d5d"/><rect x="920" y="316" width="8" height="8" fill="#575757"/><rect x="928" y="316" width="16" height="8" fill="#4e4e4e"/><rect x="944" y="316" width="8" height="8" fill="#515151"/><rect x="952" y="316" width="8" height="8" fill="#575757"/><rect x="960" y="316" width="16" height="8" fill="#636363"/><rect x="976" y="316" width="24" height="8" fill="#666666"/><rect x="1000" y="316" width="8" height="8" fill="#636363"/><rect x="1008" y="316" width="16" height="8" fill="#606060"/><rect x="1024" y="316" width="8" height="8" fill="#5d5d5d"/><rect x="600" y="324" width="8" height="8" fill="#5d5d5d"/><rect x="608" y="324" width="8" height="8" fill="#606060"/><rect x="616" y="324" width="8" height="8" fill="#636363"/><rect x="624" y="324" width="8" height="8" fill="#666666"/><rect x="632" y="324" width="8" height="8" fill="#212121"/><rect x="640" y="324" width="8" height="8" fill="#515151"/><rect x="648" y="324" width="16" height="8" fill="#545454"/><rect x="664" y="324" width="8" height="8" fill="#5a5a5a"/><rect x="672" y="324" width="8" height="8" fill="#666666"/><rect x="680" y="324" width="8" height="8" fill="#727272"/><rect x="688" y="324" width="8" height="8" fill="#7e7e7e"/><rect x="696" y="324" width="8" height="8" fill="#878787"/><rect x="704" y="324" width="8" height="8" fill="#848484"/><rect x="712" y="324" width="8" height="8" fill="#818181"/><rect x="720" y="324" width="16" height="8" fill="#7e7e7e"/><rect x="736" y="324" width="16" height="8" fill="#7b7b7b"/><rect x="752" y="324" width="16" height="8" fill="#787878"/><rect x="768" y="324" width="8" height="8" fill="#757575"/><rect x="776" y="324" width="8" height="8" fill="#6f6f6f"/><rect x="784" y="324" width="8" height="8" fill="#696969"/><rect x="792" y="324" width="8" height="8" fill="#666666"/><rect x="800" y="324" width="8" height="8" fill="#606060"/><rect x="808" y="324" width="8" height="8" fill="#5d5d5d"/><rect x="816" y="324" width="8" height="8" fill="#5a5a5a"/><rect x="824" y="324" width="8" height="8" fill="#575757"/><rect x="832" y="324" width="16" height="8" fill="#545454"/><rect x="848" y="324" width="8" height="8" fill="#575757"/><rect x="856" y="324" width="8" height="8" fill="#5a5a5a"/><rect x="864" y="324" width="16" height="8" fill="#5d5d5d"/><rect x="880" y="324" width="24" height="8" fill="#606060"/><rect x="904" y="324" width="8" height="8" fill="#636363"/><rect x="912" y="324" width="8" height="8" fill="#606060"/><rect x="920" y="324" width="8" height="8" fill="#5a5a5a"/><rect x="928" y="324" width="8" height="8" fill="#545454"/><rect x="936" y="324" width="8" height="8" fill="#515151"/><rect x="944" y="324" width="8" height="8" fill="#545454"/><rect x="952" y="324" width="16" height="8" fill="#5a5a5a"/><rect x="968" y="324" width="32" height="8" fill="#666666"/><rect x="1000" y="324" width="8" height="8" fill="#636363"/><rect x="1008" y="324" width="16" height="8" fill="#606060"/><rect x="1024" y="324" width="8" height="8" fill="#5d5d5d"/><rect x="600" y="332" width="8" height="8" fill="#5d5d5d"/><rect x="608" y="332" width="8" height="8" fill="#606060"/><rect x="616" y="332" width="8" height="8" fill="#636363"/><rect x="624" y="332" width="8" height="8" fill="#666666"/><rect x="632" y="332" width="8" height="8" fill="#303030"/><rect x="640" y="332" width="8" height="8" fill="#5d5d5d"/><rect x="648" y="332" width="16" height="8" fill="#606060"/><rect x="664" y="332" width="8" height="8" fill="#696969"/><rect x="672" y="332" width="8" height="8" fill="#757575"/><rect x="680" y="332" width="8" height="8" fill="#818181"/><rect x="688" y="332" width="8" height="8" fill="#8d8d8d"/><rect x="696" y="332" width="16" height="8" fill="#909090"/><rect x="712" y="332" width="8" height="8" fill="#8a8a8a"/><rect x="720" y="332" width="16" height="8" fill="#878787"/><rect x="736" y="332" width="8" height="8" fill="#848484"/><rect x="744" y="332" width="16" height="8" fill="#818181"/><rect x="760" y="332" width="8" height="8" fill="#7e7e7e"/><rect x="768" y="332" width="8" height="8" fill="#7b7b7b"/><rect x="776" y="332" width="8" height="8" fill="#787878"/><rect x="784" y="332" width="8" height="8" fill="#757575"/><rect x="792" y="332" width="8" height="8" fill="#6f6f6f"/><rect x="800" y="332" width="8" height="8" fill="#696969"/><rect x="808" y="332" width="8" height="8" fill="#666666"/><rect x="816" y="332" width="8" height="8" fill="#636363"/><rect x="824" y="332" width="8" height="8" fill="#606060"/><rect x="832" y="332" width="16" height="8" fill="#5a5a5a"/><rect x="848" y="332" width="8" height="8" fill="#5d5d5d"/><rect x="856" y="332" width="8" height="8" fill="#606060"/><rect x="864" y="332" width="8" height="8" fill="#636363"/><rect x="872" y="332" width="16" height="8" fill="#666666"/><rect x="888" y="332" width="24" height="8" fill="#696969"/><rect x="912" y="332" width="8" height="8" fill="#636363"/><rect x="920" y="332" width="8" height="8" fill="#5d5d5d"/><rect x="928" y="332" width="8" height="8" fill="#5a5a5a"/><rect x="936" y="332" width="8" height="8" fill="#545454"/><rect x="944" y="332" width="8" height="8" fill="#575757"/><rect x="952" y="332" width="8" height="8" fill="#5a5a5a"/><rect x="960" y="332" width="8" height="8" fill="#5d5d5d"/><rect x="968" y="332" width="32" height="8" fill="#666666"/><rect x="1000" y="332" width="16" height="8" fill="#636363"/><rect x="1016" y="332" width="8" height="8" fill="#606060"/><rect x="1024" y="332" width="8" height="8" fill="#5d5d5d"/><rect x="600" y="340" width="16" height="8" fill="#606060"/><rect x="616" y="340" width="8" height="8" fill="#636363"/><rect x="624" y="340" width="8" height="8" fill="#666666"/><rect x="632" y="340" width="8" height="8" fill="#3f3f3f"/><rect x="640" y="340" width="8" height="8" fill="#4e4e4e"/><rect x="648" y="340" width="16" height="8" fill="#6f6f6f"/><rect x="664" y="340" width="8" height="8" fill="#787878"/><rect x="672" y="340" width="8" height="8" fill="#848484"/><rect x="680" y="340" width="8" height="8" fill="#909090"/><rect x="688" y="340" width="24" height="8" fill="#969696"/><rect x="712" y="340" width="8" height="8" fill="#939393"/><rect x="720" y="340" width="16" height="8" fill="#909090"/><rect x="736" y="340" width="8" height="8" fill="#8d8d8d"/><rect x="744" y="340" width="16" height="8" fill="#878787"/><rect x="760" y="340" width="8" height="8" fill="#818181"/><rect x="768" y="340" width="8" height="8" fill="#7e7e7e"/><rect x="776" y="340" width="16" height="8" fill="#818181"/><rect x="792" y="340" width="8" height="8" fill="#7b7b7b"/><rect x="800" y="340" width="8" height="8" fill="#757575"/><rect x="808" y="340" width="8" height="8" fill="#727272"/><rect x="816" y="340" width="8" height="8" fill="#6f6f6f"/><rect x="824" y="340" width="8" height="8" fill="#696969"/><rect x="832" y="340" width="16" height="8" fill="#5a5a5a"/><rect x="848" y="340" width="8" height="8" fill="#666666"/><rect x="856" y="340" width="8" height="8" fill="#696969"/><rect x="864" y="340" width="8" height="8" fill="#6c6c6c"/><rect x="872" y="340" width="16" height="8" fill="#6f6f6f"/><rect x="888" y="340" width="8" height="8" fill="#727272"/><rect x="896" y="340" width="8" height="8" fill="#6f6f6f"/><rect x="904" y="340" width="8" height="8" fill="#6c6c6c"/><rect x="912" y="340" width="8" height="8" fill="#666666"/><rect x="920" y="340" width="8" height="8" fill="#606060"/><rect x="928" y="340" width="8" height="8" fill="#5d5d5d"/><rect x="936" y="340" width="16" height="8" fill="#5a5a5a"/><rect x="952" y="340" width="8" height="8" fill="#5d5d5d"/><rect x="960" y="340" width="8" height="8" fill="#606060"/><rect x="968" y="340" width="16" height="8" fill="#696969"/><rect x="984" y="340" width="16" height="8" fill="#666666"/><rect x="1000" y="340" width="16" height="8" fill="#636363"/><rect x="1016" y="340" width="8" height="8" fill="#606060"/><rect x="1024" y="340" width="8" height="8" fill="#5d5d5d"/><rect x="600" y="348" width="16" height="8" fill="#606060"/><rect x="616" y="348" width="8" height="8" fill="#636363"/><rect x="624" y="348" width="8" height="8" fill="#666666"/><rect x="632" y="348" width="8" height="8" fill="#696969"/><rect x="640" y="348" width="8" height="8" fill="#363636"/><rect x="648" y="348" width="8" height="8" fill="#6f6f6f"/><rect x="656" y="348" width="8" height="8" fill="#848484"/><rect x="664" y="348" width="8" height="8" fill="#878787"/><rect x="672" y="348" width="8" height="8" fill="#939393"/><rect x="680" y="348" width="8" height="8" fill="#999999"/><rect x="688" y="348" width="32" height="8" fill="#9c9c9c"/><rect x="720" y="348" width="16" height="8" fill="#999999"/><rect x="736" y="348" width="8" height="8" fill="#969696"/><rect x="744" y="348" width="8" height="8" fill="#909090"/><rect x="752" y="348" width="8" height="8" fill="#8a8a8a"/><rect x="760" y="348" width="8" height="8" fill="#848484"/><rect x="768" y="348" width="8" height="8" fill="#818181"/><rect x="776" y="348" width="8" height="8" fill="#848484"/><rect x="784" y="348" width="16" height="8" fill="#878787"/><rect x="800" y="348" width="8" height="8" fill="#818181"/><rect x="808" y="348" width="8" height="8" fill="#7e7e7e"/><rect x="816" y="348" width="8" height="8" fill="#787878"/><rect x="824" y="348" width="8" height="8" fill="#696969"/><rect x="832" y="348" width="8" height="8" fill="#5d5d5d"/><rect x="840" y="348" width="8" height="8" fill="#5a5a5a"/><rect x="848" y="348" width="8" height="8" fill="#666666"/><rect x="856" y="348" width="8" height="8" fill="#727272"/><rect x="864" y="348" width="8" height="8" fill="#757575"/><rect x="872" y="348" width="8" height="8" fill="#787878"/><rect x="880" y="348" width="8" height="8" fill="#7b7b7b"/><rect x="888" y="348" width="8" height="8" fill="#787878"/><rect x="896" y="348" width="8" height="8" fill="#757575"/><rect x="904" y="348" width="8" height="8" fill="#727272"/><rect x="912" y="348" width="8" height="8" fill="#6c6c6c"/><rect x="920" y="348" width="8" height="8" fill="#666666"/><rect x="928" y="348" width="8" height="8" fill="#636363"/><rect x="936" y="348" width="16" height="8" fill="#5d5d5d"/><rect x="952" y="348" width="8" height="8" fill="#606060"/><rect x="960" y="348" width="8" height="8" fill="#636363"/><rect x="968" y="348" width="8" height="8" fill="#666666"/><rect x="976" y="348" width="24" height="8" fill="#696969"/><rect x="1000" y="348" width="16" height="8" fill="#666666"/><rect x="1016" y="348" width="8" height="8" fill="#636363"/><rect x="1024" y="348" width="8" height="8" fill="#606060"/><rect x="600" y="356" width="16" height="8" fill="#606060"/><rect x="616" y="356" width="8" height="8" fill="#666666"/><rect x="624" y="356" width="8" height="8" fill="#696969"/><rect x="632" y="356" width="8" height="8" fill="#6c6c6c"/><rect x="640" y="356" width="8" height="8" fill="#2d2d2d"/><rect x="648" y="356" width="8" height="8" fill="#636363"/><rect x="656" y="356" width="8" height="8" fill="#8d8d8d"/><rect x="664" y="356" width="8" height="8" fill="#969696"/><rect x="672" y="356" width="8" height="8" fill="#9c9c9c"/><rect x="680" y="356" width="8" height="8" fill="#9f9f9f"/><rect x="688" y="356" width="8" height="8" fill="#a2a2a2"/><rect x="696" y="356" width="8" height="8" fill="#a5a5a5"/><rect x="704" y="356" width="32" height="8" fill="#a2a2a2"/><rect x="736" y="356" width="8" height="8" fill="#9f9f9f"/><rect x="744" y="356" width="8" height="8" fill="#969696"/><rect x="752" y="356" width="8" height="8" fill="#909090"/><rect x="760" y="356" width="8" height="8" fill="#8a8a8a"/><rect x="768" y="356" width="8" height="8" fill="#848484"/><rect x="776" y="356" width="8" height="8" fill="#878787"/><rect x="784" y="356" width="8" height="8" fill="#8a8a8a"/><rect x="792" y="356" width="16" height="8" fill="#8d8d8d"/><rect x="808" y="356" width="8" height="8" fill="#878787"/><rect x="816" y="356" width="8" height="8" fill="#787878"/><rect x="824" y="356" width="8" height="8" fill="#6c6c6c"/><rect x="832" y="356" width="16" height="8" fill="#5d5d5d"/><rect x="848" y="356" width="8" height="8" fill="#666666"/><rect x="856" y="356" width="8" height="8" fill="#727272"/><rect x="864" y="356" width="8" height="8" fill="#7e7e7e"/><rect x="872" y="356" width="16" height="8" fill="#818181"/><rect x="888" y="356" width="8" height="8" fill="#7e7e7e"/><rect x="896" y="356" width="8" height="8" fill="#7b7b7b"/><rect x="904" y="356" width="8" height="8" fill="#787878"/><rect x="912" y="356" width="8" height="8" fill="#727272"/><rect x="920" y="356" width="8" height="8" fill="#6c6c6c"/><rect x="928" y="356" width="8" height="8" fill="#696969"/><rect x="936" y="356" width="8" height="8" fill="#636363"/><rect x="944" y="356" width="8" height="8" fill="#606060"/><rect x="952" y="356" width="8" height="8" fill="#636363"/><rect x="960" y="356" width="8" height="8" fill="#666666"/><rect x="968" y="356" width="8" height="8" fill="#696969"/><rect x="976" y="356" width="16" height="8" fill="#6c6c6c"/><rect x="992" y="356" width="8" height="8" fill="#696969"/><rect x="1000" y="356" width="16" height="8" fill="#666666"/><rect x="1016" y="356" width="8" height="8" fill="#636363"/><rect x="1024" y="356" width="8" height="8" fill="#606060"/><rect x="600" y="364" width="8" height="8" fill="#272727"/><rect x="608" y="364" width="16" height="8" fill="#2a2a2a"/><rect x="624" y="364" width="8" height="8" fill="#2d2d2d"/><rect x="632" y="364" width="8" height="8" fill="#303030"/><rect x="640" y="364" width="8" height="8" fill="#3f3f3f"/><rect x="648" y="364" width="8" height="8" fill="#515151"/><rect x="656" y="364" width="8" height="8" fill="#7b7b7b"/><rect x="664" y="364" width="8" height="8" fill="#969696"/><rect x="672" y="364" width="8" height="8" fill="#999999"/><rect x="680" y="364" width="8" height="8" fill="#9c9c9c"/><rect x="688" y="364" width="8" height="8" fill="#9f9f9f"/><rect x="696" y="364" width="8" height="8" fill="#a8a8a8"/><rect x="704" y="364" width="32" height="8" fill="#a5a5a5"/><rect x="736" y="364" width="8" height="8" fill="#a2a2a2"/><rect x="744" y="364" width="8" height="8" fill="#9c9c9c"/><rect x="752" y="364" width="8" height="8" fill="#969696"/><rect x="760" y="364" width="8" height="8" fill="#909090"/><rect x="768" y="364" width="16" height="8" fill="#8a8a8a"/><rect x="784" y="364" width="8" height="8" fill="#8d8d8d"/><rect x="792" y="364" width="8" height="8" fill="#909090"/><rect x="800" y="364" width="8" height="8" fill="#939393"/><rect x="808" y="364" width="8" height="8" fill="#8d8d8d"/><rect x="816" y="364" width="8" height="8" fill="#7e7e7e"/><rect x="824" y="364" width="8" height="8" fill="#727272"/><rect x="832" y="364" width="16" height="8" fill="#636363"/><rect x="848" y="364" width="8" height="8" fill="#6c6c6c"/><rect x="856" y="364" width="8" height="8" fill="#787878"/><rect x="864" y="364" width="8" height="8" fill="#848484"/><rect x="872" y="364" width="8" height="8" fill="#878787"/><rect x="880" y="364" width="8" height="8" fill="#848484"/><rect x="888" y="364" width="8" height="8" fill="#818181"/><rect x="896" y="364" width="8" height="8" fill="#7e7e7e"/><rect x="904" y="364" width="8" height="8" fill="#787878"/><rect x="912" y="364" width="8" height="8" fill="#757575"/><rect x="920" y="364" width="8" height="8" fill="#6f6f6f"/><rect x="928" y="364" width="8" height="8" fill="#6c6c6c"/><rect x="936" y="364" width="16" height="8" fill="#666666"/><rect x="952" y="364" width="8" height="8" fill="#636363"/><rect x="960" y="364" width="8" height="8" fill="#696969"/><rect x="968" y="364" width="24" height="8" fill="#6c6c6c"/><rect x="992" y="364" width="16" height="8" fill="#696969"/><rect x="1008" y="364" width="8" height="8" fill="#666666"/><rect x="1016" y="364" width="8" height="8" fill="#636363"/><rect x="1024" y="364" width="8" height="8" fill="#606060"/><rect x="600" y="372" width="8" height="8" fill="#272727"/><rect x="608" y="372" width="16" height="8" fill="#2a2a2a"/><rect x="624" y="372" width="8" height="8" fill="#2d2d2d"/><rect x="632" y="372" width="8" height="8" fill="#303030"/><rect x="640" y="372" width="8" height="8" fill="#4e4e4e"/><rect x="648" y="372" width="8" height="8" fill="#424242"/><rect x="656" y="372" width="8" height="8" fill="#6f6f6f"/><rect x="664" y="372" width="8" height="8" fill="#818181"/><rect x="672" y="372" width="8" height="8" fill="#848484"/><rect x="680" y="372" width="8" height="8" fill="#878787"/><rect x="688" y="372" width="8" height="8" fill="#8d8d8d"/><rect x="696" y="372" width="16" height="8" fill="#a8a8a8"/><rect x="712" y="372" width="24" height="8" fill="#a5a5a5"/><rect x="736" y="372" width="8" height="8" fill="#a8a8a8"/><rect x="744" y="372" width="8" height="8" fill="#a2a2a2"/><rect x="752" y="372" width="8" height="8" fill="#9c9c9c"/><rect x="760" y="372" width="8" height="8" fill="#969696"/><rect x="768" y="372" width="24" height="8" fill="#939393"/><rect x="792" y="372" width="8" height="8" fill="#969696"/><rect x="800" y="372" width="8" height="8" fill="#9c9c9c"/><rect x="808" y="372" width="8" height="8" fill="#999999"/><rect x="816" y="372" width="8" height="8" fill="#909090"/><rect x="824" y="372" width="8" height="8" fill="#818181"/><rect x="832" y="372" width="8" height="8" fill="#757575"/><rect x="840" y="372" width="8" height="8" fill="#727272"/><rect x="848" y="372" width="8" height="8" fill="#7b7b7b"/><rect x="856" y="372" width="8" height="8" fill="#878787"/><rect x="864" y="372" width="8" height="8" fill="#909090"/><rect x="872" y="372" width="8" height="8" fill="#8d8d8d"/><rect x="880" y="372" width="8" height="8" fill="#848484"/><rect x="888" y="372" width="8" height="8" fill="#7e7e7e"/><rect x="896" y="372" width="8" height="8" fill="#7b7b7b"/><rect x="904" y="372" width="8" height="8" fill="#787878"/><rect x="912" y="372" width="8" height="8" fill="#757575"/><rect x="920" y="372" width="8" height="8" fill="#6f6f6f"/><rect x="928" y="372" width="8" height="8" fill="#6c6c6c"/><rect x="936" y="372" width="8" height="8" fill="#696969"/><rect x="944" y="372" width="16" height="8" fill="#666666"/><rect x="960" y="372" width="8" height="8" fill="#6c6c6c"/><rect x="968" y="372" width="16" height="8" fill="#6f6f6f"/><rect x="984" y="372" width="8" height="8" fill="#6c6c6c"/><rect x="992" y="372" width="16" height="8" fill="#696969"/><rect x="1008" y="372" width="8" height="8" fill="#666666"/><rect x="1016" y="372" width="8" height="8" fill="#636363"/><rect x="1024" y="372" width="8" height="8" fill="#727272"/><rect x="600" y="380" width="8" height="8" fill="#272727"/><rect x="608" y="380" width="8" height="8" fill="#2a2a2a"/><rect x="616" y="380" width="16" height="8" fill="#2d2d2d"/><rect x="632" y="380" width="8" height="8" fill="#303030"/><rect x="640" y="380" width="8" height="8" fill="#5d5d5d"/><rect x="648" y="380" width="8" height="8" fill="#333333"/><rect x="656" y="380" width="8" height="8" fill="#606060"/><rect x="664" y="380" width="8" height="8" fill="#6f6f6f"/><rect x="672" y="380" width="8" height="8" fill="#727272"/><rect x="680" y="380" width="8" height="8" fill="#757575"/><rect x="688" y="380" width="8" height="8" fill="#787878"/><rect x="696" y="380" width="40" height="8" fill="#a8a8a8"/><rect x="736" y="380" width="8" height="8" fill="#ababab"/><rect x="744" y="380" width="8" height="8" fill="#a8a8a8"/><rect x="752" y="380" width="8" height="8" fill="#a2a2a2"/><rect x="760" y="380" width="8" height="8" fill="#9c9c9c"/><rect x="768" y="380" width="8" height="8" fill="#999999"/><rect x="776" y="380" width="16" height="8" fill="#9c9c9c"/><rect x="792" y="380" width="8" height="8" fill="#9f9f9f"/><rect x="800" y="380" width="8" height="8" fill="#a5a5a5"/><rect x="808" y="380" width="8" height="8" fill="#9f9f9f"/><rect x="816" y="380" width="8" height="8" fill="#9c9c9c"/><rect x="824" y="380" width="8" height="8" fill="#939393"/><rect x="832" y="380" width="8" height="8" fill="#848484"/><rect x="840" y="380" width="8" height="8" fill="#818181"/><rect x="848" y="380" width="8" height="8" fill="#8a8a8a"/><rect x="856" y="380" width="8" height="8" fill="#939393"/><rect x="864" y="380" width="8" height="8" fill="#9f9f9f"/><rect x="872" y="380" width="8" height="8" fill="#909090"/><rect x="880" y="380" width="8" height="8" fill="#878787"/><rect x="888" y="380" width="8" height="8" fill="#7e7e7e"/><rect x="896" y="380" width="8" height="8" fill="#7b7b7b"/><rect x="904" y="380" width="8" height="8" fill="#787878"/><rect x="912" y="380" width="8" height="8" fill="#757575"/><rect x="920" y="380" width="8" height="8" fill="#6f6f6f"/><rect x="928" y="380" width="8" height="8" fill="#6c6c6c"/><rect x="936" y="380" width="24" height="8" fill="#696969"/><rect x="960" y="380" width="8" height="8" fill="#6c6c6c"/><rect x="968" y="380" width="16" height="8" fill="#727272"/><rect x="984" y="380" width="16" height="8" fill="#6c6c6c"/><rect x="1000" y="380" width="8" height="8" fill="#696969"/><rect x="1008" y="380" width="8" height="8" fill="#757575"/><rect x="1016" y="380" width="16" height="8" fill="#727272"/><rect x="600" y="388" width="8" height="8" fill="#272727"/><rect x="608" y="388" width="8" height="8" fill="#2a2a2a"/><rect x="616" y="388" width="16" height="8" fill="#2d2d2d"/><rect x="632" y="388" width="8" height="8" fill="#303030"/><rect x="640" y="388" width="8" height="8" fill="#696969"/><rect x="648" y="388" width="8" height="8" fill="#3c3c3c"/><rect x="656" y="388" width="8" height="8" fill="#515151"/><rect x="664" y="388" width="8" height="8" fill="#636363"/><rect x="672" y="388" width="8" height="8" fill="#5d5d5d"/><rect x="680" y="388" width="8" height="8" fill="#606060"/><rect x="688" y="388" width="8" height="8" fill="#727272"/><rect x="696" y="388" width="8" height="8" fill="#ababab"/><rect x="704" y="388" width="32" height="8" fill="#a8a8a8"/><rect x="736" y="388" width="16" height="8" fill="#aeaeae"/><rect x="752" y="388" width="8" height="8" fill="#a8a8a8"/><rect x="760" y="388" width="8" height="8" fill="#a5a5a5"/><rect x="768" y="388" width="16" height="8" fill="#a2a2a2"/><rect x="784" y="388" width="8" height="8" fill="#a8a8a8"/><rect x="792" y="388" width="8" height="8" fill="#ababab"/><rect x="800" y="388" width="8" height="8" fill="#aeaeae"/><rect x="808" y="388" width="8" height="8" fill="#a8a8a8"/><rect x="816" y="388" width="8" height="8" fill="#a2a2a2"/><rect x="824" y="388" width="8" height="8" fill="#9f9f9f"/><rect x="832" y="388" width="16" height="8" fill="#939393"/><rect x="848" y="388" width="8" height="8" fill="#999999"/><rect x="856" y="388" width="8" height="8" fill="#a2a2a2"/><rect x="864" y="388" width="8" height="8" fill="#aeaeae"/><rect x="872" y="388" width="8" height="8" fill="#969696"/><rect x="880" y="388" width="8" height="8" fill="#8d8d8d"/><rect x="888" y="388" width="8" height="8" fill="#878787"/><rect x="896" y="388" width="8" height="8" fill="#7e7e7e"/><rect x="904" y="388" width="8" height="8" fill="#7b7b7b"/><rect x="912" y="388" width="8" height="8" fill="#757575"/><rect x="920" y="388" width="8" height="8" fill="#727272"/><rect x="928" y="388" width="8" height="8" fill="#6f6f6f"/><rect x="936" y="388" width="16" height="8" fill="#696969"/><rect x="952" y="388" width="8" height="8" fill="#6c6c6c"/><rect x="960" y="388" width="8" height="8" fill="#6f6f6f"/><rect x="968" y="388" width="16" height="8" fill="#727272"/><rect x="984" y="388" width="16" height="8" fill="#6c6c6c"/><rect x="1000" y="388" width="8" height="8" fill="#787878"/><rect x="1008" y="388" width="16" height="8" fill="#757575"/><rect x="1024" y="388" width="8" height="8" fill="#727272"/><rect x="600" y="396" width="8" height="8" fill="#272727"/><rect x="608" y="396" width="8" height="8" fill="#2a2a2a"/><rect x="616" y="396" width="8" height="8" fill="#2d2d2d"/><rect x="624" y="396" width="16" height="8" fill="#303030"/><rect x="640" y="396" width="8" height="8" fill="#666666"/><rect x="648" y="396" width="8" height="8" fill="#4b4b4b"/><rect x="656" y="396" width="8" height="8" fill="#515151"/><rect x="664" y="396" width="16" height="8" fill="#545454"/><rect x="680" y="396" width="8" height="8" fill="#727272"/><rect x="688" y="396" width="8" height="8" fill="#8d8d8d"/><rect x="696" y="396" width="40" height="8" fill="#ababab"/><rect x="736" y="396" width="8" height="8" fill="#aeaeae"/><rect x="744" y="396" width="8" height="8" fill="#b7b7b7"/><rect x="752" y="396" width="8" height="8" fill="#b1b1b1"/><rect x="760" y="396" width="16" height="8" fill="#ababab"/><rect x="776" y="396" width="8" height="8" fill="#aeaeae"/><rect x="784" y="396" width="8" height="8" fill="#b1b1b1"/><rect x="792" y="396" width="8" height="8" fill="#b4b4b4"/><rect x="800" y="396" width="8" height="8" fill="#b7b7b7"/><rect x="808" y="396" width="8" height="8" fill="#b1b1b1"/><rect x="816" y="396" width="8" height="8" fill="#ababab"/><rect x="824" y="396" width="8" height="8" fill="#a5a5a5"/><rect x="832" y="396" width="16" height="8" fill="#a2a2a2"/><rect x="848" y="396" width="8" height="8" fill="#ababab"/><rect x="856" y="396" width="8" height="8" fill="#b4b4b4"/><rect x="864" y="396" width="8" height="8" fill="#bdbdbd"/><rect x="872" y="396" width="8" height="8" fill="#9c9c9c"/><rect x="880" y="396" width="8" height="8" fill="#969696"/><rect x="888" y="396" width="8" height="8" fill="#8d8d8d"/><rect x="896" y="396" width="8" height="8" fill="#848484"/><rect x="904" y="396" width="8" height="8" fill="#7b7b7b"/><rect x="912" y="396" width="8" height="8" fill="#787878"/><rect x="920" y="396" width="8" height="8" fill="#727272"/><rect x="928" y="396" width="8" height="8" fill="#6f6f6f"/><rect x="936" y="396" width="16" height="8" fill="#6c6c6c"/><rect x="952" y="396" width="8" height="8" fill="#6f6f6f"/><rect x="960" y="396" width="32" height="8" fill="#757575"/><rect x="992" y="396" width="8" height="8" fill="#7b7b7b"/><rect x="1000" y="396" width="8" height="8" fill="#787878"/><rect x="1008" y="396" width="16" height="8" fill="#757575"/><rect x="1024" y="396" width="8" height="8" fill="#727272"/><rect x="600" y="404" width="8" height="8" fill="#787878"/><rect x="608" y="404" width="8" height="8" fill="#7b7b7b"/><rect x="616" y="404" width="16" height="8" fill="#7e7e7e"/><rect x="632" y="404" width="8" height="8" fill="#818181"/><rect x="640" y="404" width="8" height="8" fill="#333333"/><rect x="648" y="404" width="8" height="8" fill="#5a5a5a"/><rect x="656" y="404" width="8" height="8" fill="#6c6c6c"/><rect x="664" y="404" width="8" height="8" fill="#666666"/><rect x="672" y="404" width="8" height="8" fill="#5d5d5d"/><rect x="680" y="404" width="8" height="8" fill="#727272"/><rect x="688" y="404" width="8" height="8" fill="#909090"/><rect x="696" y="404" width="40" height="8" fill="#aeaeae"/><rect x="736" y="404" width="8" height="8" fill="#b1b1b1"/><rect x="744" y="404" width="16" height="8" fill="#b7b7b7"/><rect x="760" y="404" width="8" height="8" fill="#b4b4b4"/><rect x="768" y="404" width="16" height="8" fill="#b1b1b1"/><rect x="784" y="404" width="8" height="8" fill="#b4b4b4"/><rect x="792" y="404" width="16" height="8" fill="#bababa"/><rect x="808" y="404" width="8" height="8" fill="#b4b4b4"/><rect x="816" y="404" width="8" height="8" fill="#b1b1b1"/><rect x="824" y="404" width="8" height="8" fill="#ababab"/><rect x="832" y="404" width="8" height="8" fill="#a5a5a5"/><rect x="840" y="404" width="8" height="8" fill="#a8a8a8"/><rect x="848" y="404" width="8" height="8" fill="#b1b1b1"/><rect x="856" y="404" width="8" height="8" fill="#bababa"/><rect x="864" y="404" width="8" height="8" fill="#c0c0c0"/><rect x="872" y="404" width="8" height="8" fill="#a2a2a2"/><rect x="880" y="404" width="8" height="8" fill="#9c9c9c"/><rect x="888" y="404" width="8" height="8" fill="#939393"/><rect x="896" y="404" width="8" height="8" fill="#8a8a8a"/><rect x="904" y="404" width="8" height="8" fill="#878787"/><rect x="912" y="404" width="8" height="8" fill="#848484"/><rect x="920" y="404" width="8" height="8" fill="#818181"/><rect x="928" y="404" width="8" height="8" fill="#7b7b7b"/><rect x="936" y="404" width="8" height="8" fill="#787878"/><rect x="944" y="404" width="16" height="8" fill="#727272"/><rect x="960" y="404" width="32" height="8" fill="#787878"/><rect x="992" y="404" width="8" height="8" fill="#7b7b7b"/><rect x="1000" y="404" width="16" height="8" fill="#787878"/><rect x="1016" y="404" width="8" height="8" fill="#757575"/><rect x="1024" y="404" width="8" height="8" fill="#727272"/><rect x="600" y="412" width="8" height="8" fill="#787878"/><rect x="608" y="412" width="8" height="8" fill="#7b7b7b"/><rect x="616" y="412" width="16" height="8" fill="#7e7e7e"/><rect x="632" y="412" width="8" height="8" fill="#818181"/><rect x="640" y="412" width="8" height="8" fill="#848484"/><rect x="648" y="412" width="8" height="8" fill="#6c6c6c"/><rect x="656" y="412" width="8" height="8" fill="#7b7b7b"/><rect x="664" y="412" width="8" height="8" fill="#787878"/><rect x="672" y="412" width="8" height="8" fill="#757575"/><rect x="680" y="412" width="8" height="8" fill="#787878"/><rect x="688" y="412" width="8" height="8" fill="#939393"/><rect x="696" y="412" width="40" height="8" fill="#b1b1b1"/><rect x="736" y="412" width="8" height="8" fill="#b7b7b7"/><rect x="744" y="412" width="8" height="8" fill="#bababa"/><rect x="752" y="412" width="8" height="8" fill="#bdbdbd"/><rect x="760" y="412" width="8" height="8" fill="#bababa"/><rect x="768" y="412" width="24" height="8" fill="#b7b7b7"/><rect x="792" y="412" width="8" height="8" fill="#bababa"/><rect x="800" y="412" width="8" height="8" fill="#bdbdbd"/><rect x="808" y="412" width="8" height="8" fill="#b7b7b7"/><rect x="816" y="412" width="8" height="8" fill="#b4b4b4"/><rect x="824" y="412" width="8" height="8" fill="#aeaeae"/><rect x="832" y="412" width="16" height="8" fill="#a8a8a8"/><rect x="848" y="412" width="8" height="8" fill="#b4b4b4"/><rect x="856" y="412" width="8" height="8" fill="#bababa"/><rect x="864" y="412" width="8" height="8" fill="#bdbdbd"/><rect x="872" y="412" width="8" height="8" fill="#ababab"/><rect x="880" y="412" width="8" height="8" fill="#a2a2a2"/><rect x="888" y="412" width="8" height="8" fill="#999999"/><rect x="896" y="412" width="16" height="8" fill="#969696"/><rect x="912" y="412" width="8" height="8" fill="#909090"/><rect x="920" y="412" width="8" height="8" fill="#8d8d8d"/><rect x="928" y="412" width="8" height="8" fill="#878787"/><rect x="936" y="412" width="8" height="8" fill="#818181"/><rect x="944" y="412" width="32" height="8" fill="#7b7b7b"/><rect x="976" y="412" width="8" height="8" fill="#787878"/><rect x="984" y="412" width="16" height="8" fill="#7b7b7b"/><rect x="1000" y="412" width="16" height="8" fill="#787878"/><rect x="1016" y="412" width="8" height="8" fill="#757575"/><rect x="1024" y="412" width="8" height="8" fill="#727272"/><rect x="600" y="420" width="8" height="8" fill="#787878"/><rect x="608" y="420" width="8" height="8" fill="#7b7b7b"/><rect x="616" y="420" width="16" height="8" fill="#7e7e7e"/><rect x="632" y="420" width="8" height="8" fill="#818181"/><rect x="640" y="420" width="16" height="8" fill="#848484"/><rect x="656" y="420" width="8" height="8" fill="#8d8d8d"/><rect x="664" y="420" width="8" height="8" fill="#8a8a8a"/><rect x="672" y="420" width="8" height="8" fill="#8d8d8d"/><rect x="680" y="420" width="8" height="8" fill="#909090"/><rect x="688" y="420" width="8" height="8" fill="#939393"/><rect x="696" y="420" width="8" height="8" fill="#b1b1b1"/><rect x="704" y="420" width="16" height="8" fill="#b4b4b4"/><rect x="720" y="420" width="16" height="8" fill="#b7b7b7"/><rect x="736" y="420" width="8" height="8" fill="#bababa"/><rect x="744" y="420" width="24" height="8" fill="#bdbdbd"/><rect x="768" y="420" width="32" height="8" fill="#bababa"/><rect x="800" y="420" width="8" height="8" fill="#c0c0c0"/><rect x="808" y="420" width="8" height="8" fill="#bdbdbd"/><rect x="816" y="420" width="8" height="8" fill="#bababa"/><rect x="824" y="420" width="8" height="8" fill="#b4b4b4"/><rect x="832" y="420" width="16" height="8" fill="#aeaeae"/><rect x="848" y="420" width="8" height="8" fill="#b4b4b4"/><rect x="856" y="420" width="8" height="8" fill="#b7b7b7"/><rect x="864" y="420" width="8" height="8" fill="#bababa"/><rect x="872" y="420" width="8" height="8" fill="#b1b1b1"/><rect x="880" y="420" width="8" height="8" fill="#a8a8a8"/><rect x="888" y="420" width="8" height="8" fill="#a5a5a5"/><rect x="896" y="420" width="16" height="8" fill="#a2a2a2"/><rect x="912" y="420" width="8" height="8" fill="#9f9f9f"/><rect x="920" y="420" width="8" height="8" fill="#999999"/><rect x="928" y="420" width="8" height="8" fill="#909090"/><rect x="936" y="420" width="8" height="8" fill="#8a8a8a"/><rect x="944" y="420" width="16" height="8" fill="#848484"/><rect x="960" y="420" width="8" height="8" fill="#818181"/><rect x="968" y="420" width="16" height="8" fill="#7e7e7e"/><rect x="984" y="420" width="16" height="8" fill="#7b7b7b"/><rect x="1000" y="420" width="16" height="8" fill="#787878"/><rect x="1016" y="420" width="8" height="8" fill="#7b7b7b"/><rect x="1024" y="420" width="8" height="8" fill="#787878"/><rect x="600" y="428" width="8" height="8" fill="#787878"/><rect x="608" y="428" width="8" height="8" fill="#7b7b7b"/><rect x="616" y="428" width="8" height="8" fill="#7e7e7e"/><rect x="624" y="428" width="16" height="8" fill="#818181"/><rect x="640" y="428" width="8" height="8" fill="#848484"/><rect x="648" y="428" width="8" height="8" fill="#8a8a8a"/><rect x="656" y="428" width="8" height="8" fill="#9c9c9c"/><rect x="664" y="428" width="8" height="8" fill="#a2a2a2"/><rect x="672" y="428" width="8" height="8" fill="#a5a5a5"/><rect x="680" y="428" width="8" height="8" fill="#a8a8a8"/><rect x="688" y="428" width="8" height="8" fill="#ababab"/><rect x="696" y="428" width="8" height="8" fill="#b4b4b4"/><rect x="704" y="428" width="16" height="8" fill="#b7b7b7"/><rect x="720" y="428" width="24" height="8" fill="#bababa"/><rect x="744" y="428" width="48" height="8" fill="#bdbdbd"/><rect x="792" y="428" width="8" height="8" fill="#c0c0c0"/><rect x="800" y="428" width="8" height="8" fill="#c3c3c3"/><rect x="808" y="428" width="16" height="8" fill="#c0c0c0"/><rect x="824" y="428" width="8" height="8" fill="#b7b7b7"/><rect x="832" y="428" width="16" height="8" fill="#b1b1b1"/><rect x="848" y="428" width="16" height="8" fill="#b4b4b4"/><rect x="864" y="428" width="16" height="8" fill="#b7b7b7"/><rect x="880" y="428" width="8" height="8" fill="#b4b4b4"/><rect x="888" y="428" width="24" height="8" fill="#b1b1b1"/><rect x="912" y="428" width="8" height="8" fill="#ababab"/><rect x="920" y="428" width="8" height="8" fill="#a2a2a2"/><rect x="928" y="428" width="8" height="8" fill="#9c9c9c"/><rect x="936" y="428" width="8" height="8" fill="#939393"/><rect x="944" y="428" width="16" height="8" fill="#8d8d8d"/><rect x="960" y="428" width="8" height="8" fill="#8a8a8a"/><rect x="968" y="428" width="8" height="8" fill="#878787"/><rect x="976" y="428" width="8" height="8" fill="#848484"/><rect x="984" y="428" width="16" height="8" fill="#7e7e7e"/><rect x="1000" y="428" width="24" height="8" fill="#7b7b7b"/><rect x="1024" y="428" width="8" height="8" fill="#787878"/><rect x="600" y="436" width="8" height="8" fill="#787878"/><rect x="608" y="436" width="8" height="8" fill="#7b7b7b"/><rect x="616" y="436" width="8" height="8" fill="#7e7e7e"/><rect x="624" y="436" width="16" height="8" fill="#818181"/><rect x="640" y="436" width="8" height="8" fill="#848484"/><rect x="648" y="436" width="8" height="8" fill="#8a8a8a"/><rect x="656" y="436" width="8" height="8" fill="#9c9c9c"/><rect x="664" y="436" width="8" height="8" fill="#aeaeae"/><rect x="672" y="436" width="8" height="8" fill="#b1b1b1"/><rect x="680" y="436" width="8" height="8" fill="#b4b4b4"/><rect x="688" y="436" width="8" height="8" fill="#b7b7b7"/><rect x="696" y="436" width="16" height="8" fill="#bababa"/><rect x="712" y="436" width="8" height="8" fill="#bdbdbd"/><rect x="720" y="436" width="8" height="8" fill="#bababa"/><rect x="728" y="436" width="8" height="8" fill="#bdbdbd"/><rect x="736" y="436" width="8" height="8" fill="#bababa"/><rect x="744" y="436" width="24" height="8" fill="#bdbdbd"/><rect x="768" y="436" width="8" height="8" fill="#c0c0c0"/><rect x="776" y="436" width="8" height="8" fill="#c6c6c6"/><rect x="784" y="436" width="8" height="8" fill="#c9c9c9"/><rect x="792" y="436" width="8" height="8" fill="#cccccc"/><rect x="800" y="436" width="8" height="8" fill="#c6c6c6"/><rect x="808" y="436" width="8" height="8" fill="#c3c3c3"/><rect x="816" y="436" width="8" height="8" fill="#c0c0c0"/><rect x="824" y="436" width="8" height="8" fill="#bababa"/><rect x="832" y="436" width="24" height="8" fill="#b7b7b7"/><rect x="856" y="436" width="40" height="8" fill="#bababa"/><rect x="896" y="436" width="16" height="8" fill="#b7b7b7"/><rect x="912" y="436" width="8" height="8" fill="#b4b4b4"/><rect x="920" y="436" width="8" height="8" fill="#ababab"/><rect x="928" y="436" width="8" height="8" fill="#a5a5a5"/><rect x="936" y="436" width="8" height="8" fill="#9c9c9c"/><rect x="944" y="436" width="16" height="8" fill="#969696"/><rect x="960" y="436" width="8" height="8" fill="#939393"/><rect x="968" y="436" width="8" height="8" fill="#8d8d8d"/><rect x="976" y="436" width="8" height="8" fill="#8a8a8a"/><rect x="984" y="436" width="8" height="8" fill="#848484"/><rect x="992" y="436" width="24" height="8" fill="#7e7e7e"/><rect x="1016" y="436" width="8" height="8" fill="#7b7b7b"/><rect x="1024" y="436" width="8" height="8" fill="#787878"/><rect x="600" y="444" width="8" height="8" fill="#7e7e7e"/><rect x="608" y="444" width="8" height="8" fill="#818181"/><rect x="616" y="444" width="16" height="8" fill="#848484"/><rect x="632" y="444" width="8" height="8" fill="#878787"/><rect x="640" y="444" width="8" height="8" fill="#8a8a8a"/><rect x="648" y="444" width="8" height="8" fill="#878787"/><rect x="656" y="444" width="8" height="8" fill="#9f9f9f"/><rect x="664" y="444" width="8" height="8" fill="#aeaeae"/><rect x="672" y="444" width="8" height="8" fill="#b4b4b4"/><rect x="680" y="444" width="8" height="8" fill="#b7b7b7"/><rect x="688" y="444" width="8" height="8" fill="#bababa"/><rect x="696" y="444" width="24" height="8" fill="#bdbdbd"/><rect x="720" y="444" width="8" height="8" fill="#c0c0c0"/><rect x="728" y="444" width="8" height="8" fill="#c3c3c3"/><rect x="736" y="444" width="8" height="8" fill="#c0c0c0"/><rect x="744" y="444" width="8" height="8" fill="#bdbdbd"/><rect x="752" y="444" width="16" height="8" fill="#c0c0c0"/><rect x="768" y="444" width="8" height="8" fill="#c3c3c3"/><rect x="776" y="444" width="8" height="8" fill="#cccccc"/><rect x="784" y="444" width="8" height="8" fill="#d2d2d2"/><rect x="792" y="444" width="8" height="8" fill="#cccccc"/><rect x="800" y="444" width="16" height="8" fill="#c6c6c6"/><rect x="816" y="444" width="8" height="8" fill="#c3c3c3"/><rect x="824" y="444" width="24" height="8" fill="#bdbdbd"/><rect x="848" y="444" width="32" height="8" fill="#c0c0c0"/><rect x="880" y="444" width="24" height="8" fill="#bdbdbd"/><rect x="904" y="444" width="16" height="8" fill="#bababa"/><rect x="920" y="444" width="8" height="8" fill="#b4b4b4"/><rect x="928" y="444" width="8" height="8" fill="#aeaeae"/><rect x="936" y="444" width="8" height="8" fill="#a5a5a5"/><rect x="944" y="444" width="16" height="8" fill="#9f9f9f"/><rect x="960" y="444" width="8" height="8" fill="#9c9c9c"/><rect x="968" y="444" width="8" height="8" fill="#969696"/><rect x="976" y="444" width="8" height="8" fill="#939393"/><rect x="984" y="444" width="8" height="8" fill="#8d8d8d"/><rect x="992" y="444" width="8" height="8" fill="#848484"/><rect x="1000" y="444" width="16" height="8" fill="#7e7e7e"/><rect x="1016" y="444" width="8" height="8" fill="#7b7b7b"/><rect x="1024" y="444" width="8" height="8" fill="#787878"/><rect x="600" y="452" width="8" height="8" fill="#7e7e7e"/><rect x="608" y="452" width="8" height="8" fill="#818181"/><rect x="616" y="452" width="8" height="8" fill="#848484"/><rect x="624" y="452" width="16" height="8" fill="#878787"/><rect x="640" y="452" width="16" height="8" fill="#8a8a8a"/><rect x="656" y="452" width="8" height="8" fill="#9c9c9c"/><rect x="664" y="452" width="8" height="8" fill="#ababab"/><rect x="672" y="452" width="8" height="8" fill="#b1b1b1"/><rect x="680" y="452" width="8" height="8" fill="#b7b7b7"/><rect x="688" y="452" width="8" height="8" fill="#bababa"/><rect x="696" y="452" width="8" height="8" fill="#bdbdbd"/><rect x="704" y="452" width="16" height="8" fill="#c0c0c0"/><rect x="720" y="452" width="8" height="8" fill="#c6c6c6"/><rect x="728" y="452" width="8" height="8" fill="#c9c9c9"/><rect x="736" y="452" width="8" height="8" fill="#c6c6c6"/><rect x="744" y="452" width="8" height="8" fill="#c3c3c3"/><rect x="752" y="452" width="8" height="8" fill="#c0c0c0"/><rect x="760" y="452" width="8" height="8" fill="#c3c3c3"/><rect x="768" y="452" width="8" height="8" fill="#c9c9c9"/><rect x="776" y="452" width="16" height="8" fill="#cfcfcf"/><rect x="792" y="452" width="8" height="8" fill="#cccccc"/><rect x="800" y="452" width="8" height="8" fill="#c9c9c9"/><rect x="808" y="452" width="24" height="8" fill="#c6c6c6"/><rect x="832" y="452" width="8" height="8" fill="#c3c3c3"/><rect x="840" y="452" width="24" height="8" fill="#c6c6c6"/><rect x="864" y="452" width="24" height="8" fill="#c3c3c3"/><rect x="888" y="452" width="24" height="8" fill="#c0c0c0"/><rect x="912" y="452" width="8" height="8" fill="#bdbdbd"/><rect x="920" y="452" width="8" height="8" fill="#bababa"/><rect x="928" y="452" width="8" height="8" fill="#b4b4b4"/><rect x="936" y="452" width="8" height="8" fill="#ababab"/><rect x="944" y="452" width="8" height="8" fill="#a8a8a8"/><rect x="952" y="452" width="16" height="8" fill="#a5a5a5"/><rect x="968" y="452" width="8" height="8" fill="#9f9f9f"/><rect x="976" y="452" width="8" height="8" fill="#9c9c9c"/><rect x="984" y="452" width="8" height="8" fill="#969696"/><rect x="992" y="452" width="8" height="8" fill="#8d8d8d"/><rect x="1000" y="452" width="8" height="8" fill="#848484"/><rect x="1008" y="452" width="8" height="8" fill="#7e7e7e"/><rect x="1016" y="452" width="8" height="8" fill="#7b7b7b"/><rect x="1024" y="452" width="8" height="8" fill="#787878"/><rect x="600" y="460" width="8" height="8" fill="#7e7e7e"/><rect x="608" y="460" width="8" height="8" fill="#818181"/><rect x="616" y="460" width="8" height="8" fill="#848484"/><rect x="624" y="460" width="16" height="8" fill="#878787"/><rect x="640" y="460" width="16" height="8" fill="#8a8a8a"/><rect x="656" y="460" width="8" height="8" fill="#999999"/><rect x="664" y="460" width="8" height="8" fill="#a8a8a8"/><rect x="672" y="460" width="8" height="8" fill="#aeaeae"/><rect x="680" y="460" width="8" height="8" fill="#b4b4b4"/><rect x="688" y="460" width="8" height="8" fill="#bababa"/><rect x="696" y="460" width="8" height="8" fill="#bdbdbd"/><rect x="704" y="460" width="8" height="8" fill="#c0c0c0"/><rect x="712" y="460" width="8" height="8" fill="#c6c6c6"/><rect x="720" y="460" width="8" height="8" fill="#c9c9c9"/><rect x="728" y="460" width="8" height="8" fill="#cfcfcf"/><rect x="736" y="460" width="16" height="8" fill="#cccccc"/><rect x="752" y="460" width="16" height="8" fill="#c9c9c9"/><rect x="768" y="460" width="16" height="8" fill="#cccccc"/><rect x="784" y="460" width="24" height="8" fill="#c9c9c9"/><rect x="808" y="460" width="8" height="8" fill="#c6c6c6"/><rect x="816" y="460" width="48" height="8" fill="#c9c9c9"/><rect x="864" y="460" width="16" height="8" fill="#c6c6c6"/><rect x="880" y="460" width="32" height="8" fill="#c3c3c3"/><rect x="912" y="460" width="8" height="8" fill="#c0c0c0"/><rect x="920" y="460" width="8" height="8" fill="#bababa"/><rect x="928" y="460" width="8" height="8" fill="#b7b7b7"/><rect x="936" y="460" width="8" height="8" fill="#b4b4b4"/><rect x="944" y="460" width="8" height="8" fill="#aeaeae"/><rect x="952" y="460" width="16" height="8" fill="#ababab"/><rect x="968" y="460" width="8" height="8" fill="#a8a8a8"/><rect x="976" y="460" width="8" height="8" fill="#a5a5a5"/><rect x="984" y="460" width="8" height="8" fill="#9c9c9c"/><rect x="992" y="460" width="8" height="8" fill="#939393"/><rect x="1000" y="460" width="8" height="8" fill="#8a8a8a"/><rect x="1008" y="460" width="8" height="8" fill="#7e7e7e"/><rect x="1016" y="460" width="8" height="8" fill="#7b7b7b"/><rect x="1024" y="460" width="8" height="8" fill="#787878"/><rect x="600" y="468" width="16" height="8" fill="#818181"/><rect x="616" y="468" width="8" height="8" fill="#848484"/><rect x="624" y="468" width="8" height="8" fill="#878787"/><rect x="632" y="468" width="16" height="8" fill="#8a8a8a"/><rect x="648" y="468" width="16" height="8" fill="#a8a8a8"/><rect x="664" y="468" width="8" height="8" fill="#9f9f9f"/><rect x="672" y="468" width="8" height="8" fill="#a2a2a2"/><rect x="680" y="468" width="8" height="8" fill="#a8a8a8"/><rect x="688" y="468" width="8" height="8" fill="#ababab"/><rect x="696" y="468" width="8" height="8" fill="#b4b4b4"/><rect x="704" y="468" width="8" height="8" fill="#c0c0c0"/><rect x="712" y="468" width="8" height="8" fill="#c6c6c6"/><rect x="720" y="468" width="8" height="8" fill="#cccccc"/><rect x="728" y="468" width="8" height="8" fill="#cfcfcf"/><rect x="736" y="468" width="8" height="8" fill="#d5d5d5"/><rect x="744" y="468" width="8" height="8" fill="#d2d2d2"/><rect x="752" y="468" width="8" height="8" fill="#cfcfcf"/><rect x="760" y="468" width="8" height="8" fill="#cccccc"/><rect x="768" y="468" width="8" height="8" fill="#c9c9c9"/><rect x="776" y="468" width="8" height="8" fill="#c6c6c6"/><rect x="784" y="468" width="16" height="8" fill="#c3c3c3"/><rect x="800" y="468" width="8" height="8" fill="#c6c6c6"/><rect x="808" y="468" width="8" height="8" fill="#c9c9c9"/><rect x="816" y="468" width="8" height="8" fill="#cccccc"/><rect x="824" y="468" width="8" height="8" fill="#cfcfcf"/><rect x="832" y="468" width="16" height="8" fill="#cccccc"/><rect x="848" y="468" width="16" height="8" fill="#c9c9c9"/><rect x="864" y="468" width="8" height="8" fill="#c6c6c6"/><rect x="872" y="468" width="24" height="8" fill="#c3c3c3"/><rect x="896" y="468" width="16" height="8" fill="#c0c0c0"/><rect x="912" y="468" width="8" height="8" fill="#bdbdbd"/><rect x="920" y="468" width="8" height="8" fill="#bababa"/><rect x="928" y="468" width="8" height="8" fill="#b7b7b7"/><rect x="936" y="468" width="8" height="8" fill="#b4b4b4"/><rect x="944" y="468" width="24" height="8" fill="#b1b1b1"/><rect x="968" y="468" width="8" height="8" fill="#aeaeae"/><rect x="976" y="468" width="8" height="8" fill="#ababab"/><rect x="984" y="468" width="8" height="8" fill="#a2a2a2"/><rect x="992" y="468" width="8" height="8" fill="#999999"/><rect x="1000" y="468" width="8" height="8" fill="#909090"/><rect x="1008" y="468" width="8" height="8" fill="#7e7e7e"/><rect x="1016" y="468" width="8" height="8" fill="#7b7b7b"/><rect x="1024" y="468" width="8" height="8" fill="#787878"/><rect x="600" y="476" width="16" height="8" fill="#818181"/><rect x="616" y="476" width="8" height="8" fill="#848484"/><rect x="624" y="476" width="8" height="8" fill="#878787"/><rect x="632" y="476" width="8" height="8" fill="#8a8a8a"/><rect x="640" y="476" width="16" height="8" fill="#a8a8a8"/><rect x="656" y="476" width="8" height="8" fill="#4b4b4b"/><rect x="664" y="476" width="8" height="8" fill="#666666"/><rect x="672" y="476" width="8" height="8" fill="#7b7b7b"/><rect x="680" y="476" width="8" height="8" fill="#7e7e7e"/><rect x="688" y="476" width="8" height="8" fill="#878787"/><rect x="696" y="476" width="8" height="8" fill="#969696"/><rect x="704" y="476" width="8" height="8" fill="#a5a5a5"/><rect x="712" y="476" width="8" height="8" fill="#b7b7b7"/><rect x="720" y="476" width="8" height="8" fill="#c3c3c3"/><rect x="728" y="476" width="8" height="8" fill="#c9c9c9"/><rect x="736" y="476" width="16" height="8" fill="#d2d2d2"/><rect x="752" y="476" width="8" height="8" fill="#cfcfcf"/><rect x="760" y="476" width="8" height="8" fill="#cccccc"/><rect x="768" y="476" width="8" height="8" fill="#c9c9c9"/><rect x="776" y="476" width="32" height="8" fill="#c6c6c6"/><rect x="808" y="476" width="8" height="8" fill="#c9c9c9"/><rect x="816" y="476" width="24" height="8" fill="#cfcfcf"/><rect x="840" y="476" width="8" height="8" fill="#cccccc"/><rect x="848" y="476" width="16" height="8" fill="#c9c9c9"/><rect x="864" y="476" width="8" height="8" fill="#c6c6c6"/><rect x="872" y="476" width="16" height="8" fill="#c0c0c0"/><rect x="888" y="476" width="24" height="8" fill="#bdbdbd"/><rect x="912" y="476" width="8" height="8" fill="#bababa"/><rect x="920" y="476" width="8" height="8" fill="#b7b7b7"/><rect x="928" y="476" width="8" height="8" fill="#b1b1b1"/><rect x="936" y="476" width="16" height="8" fill="#aeaeae"/><rect x="952" y="476" width="8" height="8" fill="#b1b1b1"/><rect x="960" y="476" width="8" height="8" fill="#aeaeae"/><rect x="968" y="476" width="8" height="8" fill="#b1b1b1"/><rect x="976" y="476" width="8" height="8" fill="#ababab"/><rect x="984" y="476" width="8" height="8" fill="#a8a8a8"/><rect x="992" y="476" width="8" height="8" fill="#9f9f9f"/><rect x="1000" y="476" width="8" height="8" fill="#969696"/><rect x="1008" y="476" width="8" height="8" fill="#9c9c9c"/><rect x="1016" y="476" width="16" height="8" fill="#999999"/><rect x="600" y="484" width="16" height="8" fill="#818181"/><rect x="616" y="484" width="8" height="8" fill="#848484"/><rect x="624" y="484" width="8" height="8" fill="#4b4b4b"/><rect x="632" y="484" width="24" height="8" fill="#4e4e4e"/><rect x="656" y="484" width="16" height="8" fill="#4b4b4b"/><rect x="672" y="484" width="8" height="8" fill="#515151"/><rect x="680" y="484" width="8" height="8" fill="#5a5a5a"/><rect x="688" y="484" width="8" height="8" fill="#666666"/><rect x="696" y="484" width="8" height="8" fill="#787878"/><rect x="704" y="484" width="8" height="8" fill="#8d8d8d"/><rect x="712" y="484" width="8" height="8" fill="#a2a2a2"/><rect x="720" y="484" width="8" height="8" fill="#b7b7b7"/><rect x="728" y="484" width="8" height="8" fill="#c0c0c0"/><rect x="736" y="484" width="8" height="8" fill="#c9c9c9"/><rect x="744" y="484" width="8" height="8" fill="#d2d2d2"/><rect x="752" y="484" width="8" height="8" fill="#cfcfcf"/><rect x="760" y="484" width="8" height="8" fill="#c9c9c9"/><rect x="768" y="484" width="24" height="8" fill="#c6c6c6"/><rect x="792" y="484" width="8" height="8" fill="#c9c9c9"/><rect x="800" y="484" width="8" height="8" fill="#c6c6c6"/><rect x="808" y="484" width="8" height="8" fill="#cccccc"/><rect x="816" y="484" width="24" height="8" fill="#cfcfcf"/><rect x="840" y="484" width="8" height="8" fill="#cccccc"/><rect x="848" y="484" width="8" height="8" fill="#c9c9c9"/><rect x="856" y="484" width="8" height="8" fill="#c6c6c6"/><rect x="864" y="484" width="8" height="8" fill="#c0c0c0"/><rect x="872" y="484" width="8" height="8" fill="#bdbdbd"/><rect x="880" y="484" width="32" height="8" fill="#bababa"/><rect x="912" y="484" width="8" height="8" fill="#b7b7b7"/><rect x="920" y="484" width="8" height="8" fill="#b1b1b1"/><rect x="928" y="484" width="8" height="8" fill="#aeaeae"/><rect x="936" y="484" width="8" height="8" fill="#ababab"/><rect x="944" y="484" width="8" height="8" fill="#a8a8a8"/><rect x="952" y="484" width="8" height="8" fill="#ababab"/><rect x="960" y="484" width="24" height="8" fill="#aeaeae"/><rect x="984" y="484" width="8" height="8" fill="#a8a8a8"/><rect x="992" y="484" width="8" height="8" fill="#a5a5a5"/><rect x="1000" y="484" width="16" height="8" fill="#9c9c9c"/><rect x="1016" y="484" width="16" height="8" fill="#999999"/><rect x="600" y="492" width="8" height="8" fill="#818181"/><rect x="608" y="492" width="16" height="8" fill="#484848"/><rect x="624" y="492" width="8" height="8" fill="#4b4b4b"/><rect x="632" y="492" width="16" height="8" fill="#4e4e4e"/><rect x="648" y="492" width="16" height="8" fill="#4b4b4b"/><rect x="664" y="492" width="8" height="8" fill="#484848"/><rect x="672" y="492" width="8" height="8" fill="#575757"/><rect x="680" y="492" width="8" height="8" fill="#515151"/><rect x="688" y="492" width="8" height="8" fill="#5a5a5a"/><rect x="696" y="492" width="8" height="8" fill="#696969"/><rect x="704" y="492" width="8" height="8" fill="#7b7b7b"/><rect x="712" y="492" width="8" height="8" fill="#8d8d8d"/><rect x="720" y="492" width="8" height="8" fill="#a2a2a2"/><rect x="728" y="492" width="8" height="8" fill="#b4b4b4"/><rect x="736" y="492" width="8" height="8" fill="#bababa"/><rect x="744" y="492" width="8" height="8" fill="#c3c3c3"/><rect x="752" y="492" width="8" height="8" fill="#c6c6c6"/><rect x="760" y="492" width="16" height="8" fill="#c3c3c3"/><rect x="776" y="492" width="32" height="8" fill="#c9c9c9"/><rect x="808" y="492" width="24" height="8" fill="#cfcfcf"/><rect x="832" y="492" width="16" height="8" fill="#cccccc"/><rect x="848" y="492" width="8" height="8" fill="#c9c9c9"/><rect x="856" y="492" width="8" height="8" fill="#c3c3c3"/><rect x="864" y="492" width="8" height="8" fill="#bdbdbd"/><rect x="872" y="492" width="40" height="8" fill="#b7b7b7"/><rect x="912" y="492" width="8" height="8" fill="#b4b4b4"/><rect x="920" y="492" width="8" height="8" fill="#aeaeae"/><rect x="928" y="492" width="8" height="8" fill="#ababab"/><rect x="936" y="492" width="16" height="8" fill="#a5a5a5"/><rect x="952" y="492" width="8" height="8" fill="#a8a8a8"/><rect x="960" y="492" width="8" height="8" fill="#ababab"/><rect x="968" y="492" width="16" height="8" fill="#aeaeae"/><rect x="984" y="492" width="8" height="8" fill="#ababab"/><rect x="992" y="492" width="8" height="8" fill="#a5a5a5"/><rect x="1000" y="492" width="8" height="8" fill="#9f9f9f"/><rect x="1008" y="492" width="16" height="8" fill="#9c9c9c"/><rect x="1024" y="492" width="8" height="8" fill="#999999"/><rect x="600" y="500" width="8" height="8" fill="#454545"/><rect x="608" y="500" width="16" height="8" fill="#484848"/><rect x="624" y="500" width="8" height="8" fill="#4b4b4b"/><rect x="632" y="500" width="16" height="8" fill="#4e4e4e"/><rect x="648" y="500" width="16" height="8" fill="#4b4b4b"/><rect x="664" y="500" width="8" height="8" fill="#484848"/><rect x="672" y="500" width="16" height="8" fill="#4e4e4e"/><rect x="688" y="500" width="8" height="8" fill="#545454"/><rect x="696" y="500" width="8" height="8" fill="#606060"/><rect x="704" y="500" width="8" height="8" fill="#6c6c6c"/><rect x="712" y="500" width="8" height="8" fill="#7e7e7e"/><rect x="720" y="500" width="8" height="8" fill="#909090"/><rect x="728" y="500" width="8" height="8" fill="#a2a2a2"/><rect x="736" y="500" width="8" height="8" fill="#ababab"/><rect x="744" y="500" width="8" height="8" fill="#b1b1b1"/><rect x="752" y="500" width="8" height="8" fill="#b4b4b4"/><rect x="760" y="500" width="8" height="8" fill="#bababa"/><rect x="768" y="500" width="8" height="8" fill="#bdbdbd"/><rect x="776" y="500" width="64" height="8" fill="#cccccc"/><rect x="840" y="500" width="8" height="8" fill="#c9c9c9"/><rect x="848" y="500" width="8" height="8" fill="#c3c3c3"/><rect x="856" y="500" width="8" height="8" fill="#c0c0c0"/><rect x="864" y="500" width="8" height="8" fill="#bababa"/><rect x="872" y="500" width="40" height="8" fill="#b4b4b4"/><rect x="912" y="500" width="8" height="8" fill="#b1b1b1"/><rect x="920" y="500" width="8" height="8" fill="#ababab"/><rect x="928" y="500" width="8" height="8" fill="#a8a8a8"/><rect x="936" y="500" width="8" height="8" fill="#a2a2a2"/><rect x="944" y="500" width="8" height="8" fill="#9f9f9f"/><rect x="952" y="500" width="8" height="8" fill="#a2a2a2"/><rect x="960" y="500" width="8" height="8" fill="#a5a5a5"/><rect x="968" y="500" width="8" height="8" fill="#a8a8a8"/><rect x="976" y="500" width="8" height="8" fill="#aeaeae"/><rect x="984" y="500" width="8" height="8" fill="#ababab"/><rect x="992" y="500" width="8" height="8" fill="#a8a8a8"/><rect x="1000" y="500" width="8" height="8" fill="#a2a2a2"/><rect x="1008" y="500" width="16" height="8" fill="#9c9c9c"/><rect x="1024" y="500" width="8" height="8" fill="#999999"/><rect x="600" y="508" width="8" height="8" fill="#454545"/><rect x="608" y="508" width="8" height="8" fill="#484848"/><rect x="616" y="508" width="16" height="8" fill="#4b4b4b"/><rect x="632" y="508" width="8" height="8" fill="#4e4e4e"/><rect x="640" y="508" width="16" height="8" fill="#4b4b4b"/><rect x="656" y="508" width="8" height="8" fill="#484848"/><rect x="664" y="508" width="8" height="8" fill="#515151"/><rect x="672" y="508" width="16" height="8" fill="#4e4e4e"/><rect x="688" y="508" width="8" height="8" fill="#4b4b4b"/><rect x="696" y="508" width="8" height="8" fill="#5a5a5a"/><rect x="704" y="508" width="8" height="8" fill="#636363"/><rect x="712" y="508" width="8" height="8" fill="#727272"/><rect x="720" y="508" width="8" height="8" fill="#848484"/><rect x="728" y="508" width="8" height="8" fill="#999999"/><rect x="736" y="508" width="8" height="8" fill="#9c9c9c"/><rect x="744" y="508" width="16" height="8" fill="#9f9f9f"/><rect x="760" y="508" width="8" height="8" fill="#a8a8a8"/><rect x="768" y="508" width="8" height="8" fill="#b1b1b1"/><rect x="776" y="508" width="16" height="8" fill="#c9c9c9"/><rect x="792" y="508" width="16" height="8" fill="#c6c6c6"/><rect x="808" y="508" width="16" height="8" fill="#d5d5d5"/><rect x="824" y="508" width="8" height="8" fill="#d2d2d2"/><rect x="832" y="508" width="24" height="8" fill="#cfcfcf"/><rect x="856" y="508" width="8" height="8" fill="#c9c9c9"/><rect x="864" y="508" width="8" height="8" fill="#c6c6c6"/><rect x="872" y="508" width="16" height="8" fill="#c0c0c0"/><rect x="888" y="508" width="16" height="8" fill="#bdbdbd"/><rect x="904" y="508" width="8" height="8" fill="#bababa"/><rect x="912" y="508" width="8" height="8" fill="#b1b1b1"/><rect x="920" y="508" width="8" height="8" fill="#ababab"/><rect x="928" y="508" width="8" height="8" fill="#a8a8a8"/><rect x="936" y="508" width="24" height="8" fill="#a2a2a2"/><rect x="960" y="508" width="8" height="8" fill="#a5a5a5"/><rect x="968" y="508" width="8" height="8" fill="#a8a8a8"/><rect x="976" y="508" width="16" height="8" fill="#aeaeae"/><rect x="992" y="508" width="8" height="8" fill="#ababab"/><rect x="1000" y="508" width="8" height="8" fill="#a5a5a5"/><rect x="1008" y="508" width="8" height="8" fill="#a2a2a2"/><rect x="1016" y="508" width="8" height="8" fill="#9c9c9c"/><rect x="1024" y="508" width="8" height="8" fill="#999999"/><rect x="600" y="516" width="8" height="8" fill="#454545"/><rect x="608" y="516" width="8" height="8" fill="#484848"/><rect x="616" y="516" width="40" height="8" fill="#4b4b4b"/><rect x="656" y="516" width="8" height="8" fill="#424242"/><rect x="664" y="516" width="16" height="8" fill="#4e4e4e"/><rect x="680" y="516" width="8" height="8" fill="#4b4b4b"/><rect x="688" y="516" width="8" height="8" fill="#878787"/><rect x="696" y="516" width="8" height="8" fill="#848484"/><rect x="704" y="516" width="8" height="8" fill="#606060"/><rect x="712" y="516" width="8" height="8" fill="#6c6c6c"/><rect x="720" y="516" width="8" height="8" fill="#787878"/><rect x="728" y="516" width="8" height="8" fill="#8a8a8a"/><rect x="736" y="516" width="8" height="8" fill="#909090"/><rect x="744" y="516" width="8" height="8" fill="#969696"/><rect x="752" y="516" width="8" height="8" fill="#999999"/><rect x="760" y="516" width="8" height="8" fill="#9f9f9f"/><rect x="768" y="516" width="8" height="8" fill="#a5a5a5"/><rect x="776" y="516" width="8" height="8" fill="#b1b1b1"/><rect x="784" y="516" width="8" height="8" fill="#c3c3c3"/><rect x="792" y="516" width="8" height="8" fill="#c0c0c0"/><rect x="800" y="516" width="8" height="8" fill="#bdbdbd"/><rect x="808" y="516" width="16" height="8" fill="#dbdbdb"/><rect x="824" y="516" width="8" height="8" fill="#d8d8d8"/><rect x="832" y="516" width="16" height="8" fill="#d2d2d2"/><rect x="848" y="516" width="16" height="8" fill="#d8d8d8"/><rect x="864" y="516" width="8" height="8" fill="#d2d2d2"/><rect x="872" y="516" width="24" height="8" fill="#cccccc"/><rect x="896" y="516" width="8" height="8" fill="#c6c6c6"/><rect x="904" y="516" width="8" height="8" fill="#bdbdbd"/><rect x="912" y="516" width="8" height="8" fill="#b4b4b4"/><rect x="920" y="516" width="8" height="8" fill="#aeaeae"/><rect x="928" y="516" width="8" height="8" fill="#a8a8a8"/><rect x="936" y="516" width="8" height="8" fill="#a5a5a5"/><rect x="944" y="516" width="8" height="8" fill="#a2a2a2"/><rect x="952" y="516" width="16" height="8" fill="#a5a5a5"/><rect x="968" y="516" width="8" height="8" fill="#ababab"/><rect x="976" y="516" width="8" height="8" fill="#aeaeae"/><rect x="984" y="516" width="8" height="8" fill="#b1b1b1"/><rect x="992" y="516" width="8" height="8" fill="#aeaeae"/><rect x="1000" y="516" width="8" height="8" fill="#a8a8a8"/><rect x="1008" y="516" width="8" height="8" fill="#a5a5a5"/><rect x="1016" y="516" width="8" height="8" fill="#9c9c9c"/><rect x="1024" y="516" width="8" height="8" fill="#999999"/><rect x="600" y="524" width="8" height="8" fill="#454545"/><rect x="608" y="524" width="8" height="8" fill="#484848"/><rect x="616" y="524" width="32" height="8" fill="#4b4b4b"/><rect x="648" y="524" width="16" height="8" fill="#424242"/><rect x="664" y="524" width="16" height="8" fill="#4e4e4e"/><rect x="680" y="524" width="8" height="8" fill="#4b4b4b"/><rect x="688" y="524" width="8" height="8" fill="#848484"/><rect x="696" y="524" width="8" height="8" fill="#818181"/><rect x="704" y="524" width="8" height="8" fill="#7e7e7e"/><rect x="712" y="524" width="8" height="8" fill="#666666"/><rect x="720" y="524" width="8" height="8" fill="#727272"/><rect x="728" y="524" width="8" height="8" fill="#7e7e7e"/><rect x="736" y="524" width="8" height="8" fill="#848484"/><rect x="744" y="524" width="8" height="8" fill="#909090"/><rect x="752" y="524" width="8" height="8" fill="#969696"/><rect x="760" y="524" width="16" height="8" fill="#9c9c9c"/><rect x="776" y="524" width="8" height="8" fill="#9f9f9f"/><rect x="784" y="524" width="8" height="8" fill="#aeaeae"/><rect x="792" y="524" width="8" height="8" fill="#bababa"/><rect x="800" y="524" width="8" height="8" fill="#b7b7b7"/><rect x="808" y="524" width="8" height="8" fill="#d8d8d8"/><rect x="816" y="524" width="8" height="8" fill="#e1e1e1"/><rect x="824" y="524" width="8" height="8" fill="#d8d8d8"/><rect x="832" y="524" width="16" height="8" fill="#d2d2d2"/><rect x="848" y="524" width="8" height="8" fill="#dbdbdb"/><rect x="856" y="524" width="8" height="8" fill="#e1e1e1"/><rect x="864" y="524" width="8" height="8" fill="#dedede"/><rect x="872" y="524" width="8" height="8" fill="#dbdbdb"/><rect x="880" y="524" width="8" height="8" fill="#d8d8d8"/><rect x="888" y="524" width="8" height="8" fill="#d2d2d2"/><rect x="896" y="524" width="8" height="8" fill="#c9c9c9"/><rect x="904" y="524" width="8" height="8" fill="#c0c0c0"/><rect x="912" y="524" width="8" height="8" fill="#bababa"/><rect x="920" y="524" width="8" height="8" fill="#b1b1b1"/><rect x="928" y="524" width="8" height="8" fill="#a8a8a8"/><rect x="936" y="524" width="8" height="8" fill="#a5a5a5"/><rect x="944" y="524" width="8" height="8" fill="#a2a2a2"/><rect x="952" y="524" width="8" height="8" fill="#a5a5a5"/><rect x="960" y="524" width="8" height="8" fill="#a8a8a8"/><rect x="968" y="524" width="8" height="8" fill="#ababab"/><rect x="976" y="524" width="8" height="8" fill="#aeaeae"/><rect x="984" y="524" width="16" height="8" fill="#b1b1b1"/><rect x="1000" y="524" width="8" height="8" fill="#aeaeae"/><rect x="1008" y="524" width="8" height="8" fill="#a8a8a8"/><rect x="1016" y="524" width="8" height="8" fill="#ababab"/><rect x="1024" y="524" width="8" height="8" fill="#a8a8a8"/><rect x="600" y="532" width="8" height="8" fill="#454545"/><rect x="608" y="532" width="8" height="8" fill="#484848"/><rect x="616" y="532" width="24" height="8" fill="#4b4b4b"/><rect x="640" y="532" width="16" height="8" fill="#424242"/><rect x="656" y="532" width="8" height="8" fill="#3f3f3f"/><rect x="664" y="532" width="8" height="8" fill="#4e4e4e"/><rect x="672" y="532" width="8" height="8" fill="#4b4b4b"/><rect x="680" y="532" width="32" height="8" fill="#818181"/><rect x="712" y="532" width="8" height="8" fill="#606060"/><rect x="720" y="532" width="8" height="8" fill="#6f6f6f"/><rect x="728" y="532" width="8" height="8" fill="#7b7b7b"/><rect x="736" y="532" width="8" height="8" fill="#818181"/><rect x="744" y="532" width="8" height="8" fill="#878787"/><rect x="752" y="532" width="8" height="8" fill="#909090"/><rect x="760" y="532" width="8" height="8" fill="#969696"/><rect x="768" y="532" width="8" height="8" fill="#939393"/><rect x="776" y="532" width="8" height="8" fill="#8d8d8d"/><rect x="784" y="532" width="8" height="8" fill="#9c9c9c"/><rect x="792" y="532" width="8" height="8" fill="#ababab"/><rect x="800" y="532" width="8" height="8" fill="#b1b1b1"/><rect x="808" y="532" width="8" height="8" fill="#c9c9c9"/><rect x="816" y="532" width="8" height="8" fill="#d5d5d5"/><rect x="824" y="532" width="8" height="8" fill="#d8d8d8"/><rect x="832" y="532" width="16" height="8" fill="#d5d5d5"/><rect x="848" y="532" width="8" height="8" fill="#dbdbdb"/><rect x="856" y="532" width="8" height="8" fill="#e1e1e1"/><rect x="864" y="532" width="16" height="8" fill="#e7e7e7"/><rect x="880" y="532" width="8" height="8" fill="#e1e1e1"/><rect x="888" y="532" width="8" height="8" fill="#d8d8d8"/><rect x="896" y="532" width="8" height="8" fill="#cfcfcf"/><rect x="904" y="532" width="8" height="8" fill="#c6c6c6"/><rect x="912" y="532" width="8" height="8" fill="#bdbdbd"/><rect x="920" y="532" width="8" height="8" fill="#b4b4b4"/><rect x="928" y="532" width="8" height="8" fill="#aeaeae"/><rect x="936" y="532" width="8" height="8" fill="#a5a5a5"/><rect x="944" y="532" width="8" height="8" fill="#a2a2a2"/><rect x="952" y="532" width="8" height="8" fill="#a8a8a8"/><rect x="960" y="532" width="8" height="8" fill="#ababab"/><rect x="968" y="532" width="8" height="8" fill="#aeaeae"/><rect x="976" y="532" width="16" height="8" fill="#b1b1b1"/><rect x="992" y="532" width="8" height="8" fill="#b4b4b4"/><rect x="1000" y="532" width="8" height="8" fill="#b1b1b1"/><rect x="1008" y="532" width="16" height="8" fill="#ababab"/><rect x="1024" y="532" width="8" height="8" fill="#a8a8a8"/><rect x="600" y="540" width="8" height="8" fill="#454545"/><rect x="608" y="540" width="8" height="8" fill="#484848"/><rect x="616" y="540" width="16" height="8" fill="#4b4b4b"/><rect x="632" y="540" width="16" height="8" fill="#424242"/><rect x="648" y="540" width="8" height="8" fill="#3f3f3f"/><rect x="656" y="540" width="16" height="8" fill="#4e4e4e"/><rect x="672" y="540" width="8" height="8" fill="#4b4b4b"/><rect x="680" y="540" width="40" height="8" fill="#818181"/><rect x="720" y="540" width="8" height="8" fill="#696969"/><rect x="728" y="540" width="8" height="8" fill="#787878"/><rect x="736" y="540" width="8" height="8" fill="#848484"/><rect x="744" y="540" width="8" height="8" fill="#878787"/><rect x="752" y="540" width="8" height="8" fill="#8a8a8a"/><rect x="760" y="540" width="16" height="8" fill="#909090"/><rect x="776" y="540" width="8" height="8" fill="#878787"/><rect x="784" y="540" width="8" height="8" fill="#939393"/><rect x="792" y="540" width="8" height="8" fill="#a2a2a2"/><rect x="800" y="540" width="8" height="8" fill="#ababab"/><rect x="808" y="540" width="8" height="8" fill="#b4b4b4"/><rect x="816" y="540" width="8" height="8" fill="#bdbdbd"/><rect x="824" y="540" width="8" height="8" fill="#c0c0c0"/><rect x="832" y="540" width="8" height="8" fill="#c3c3c3"/><rect x="840" y="540" width="8" height="8" fill="#dedede"/><rect x="848" y="540" width="8" height="8" fill="#e4e4e4"/><rect x="856" y="540" width="8" height="8" fill="#eaeaea"/><rect x="864" y="540" width="16" height="8" fill="#f0f0f0"/><rect x="880" y="540" width="8" height="8" fill="#e4e4e4"/><rect x="888" y="540" width="8" height="8" fill="#dbdbdb"/><rect x="896" y="540" width="8" height="8" fill="#d2d2d2"/><rect x="904" y="540" width="8" height="8" fill="#c9c9c9"/><rect x="912" y="540" width="8" height="8" fill="#c3c3c3"/><rect x="920" y="540" width="8" height="8" fill="#bababa"/><rect x="928" y="540" width="8" height="8" fill="#b1b1b1"/><rect x="936" y="540" width="8" height="8" fill="#ababab"/><rect x="944" y="540" width="8" height="8" fill="#a5a5a5"/><rect x="952" y="540" width="8" height="8" fill="#a8a8a8"/><rect x="960" y="540" width="8" height="8" fill="#ababab"/><rect x="968" y="540" width="40" height="8" fill="#b1b1b1"/><rect x="1008" y="540" width="8" height="8" fill="#aeaeae"/><rect x="1016" y="540" width="8" height="8" fill="#ababab"/><rect x="1024" y="540" width="8" height="8" fill="#a8a8a8"/><rect x="600" y="548" width="16" height="8" fill="#484848"/><rect x="616" y="548" width="8" height="8" fill="#4b4b4b"/><rect x="624" y="548" width="8" height="8" fill="#454545"/><rect x="632" y="548" width="16" height="8" fill="#424242"/><rect x="648" y="548" width="8" height="8" fill="#3f3f3f"/><rect x="656" y="548" width="8" height="8" fill="#4e4e4e"/><rect x="664" y="548" width="8" height="8" fill="#4b4b4b"/><rect x="672" y="548" width="40" height="8" fill="#818181"/><rect x="712" y="548" width="16" height="8" fill="#848484"/><rect x="728" y="548" width="8" height="8" fill="#757575"/><rect x="736" y="548" width="8" height="8" fill="#848484"/><rect x="744" y="548" width="8" height="8" fill="#8a8a8a"/><rect x="752" y="548" width="8" height="8" fill="#8d8d8d"/><rect x="760" y="548" width="16" height="8" fill="#909090"/><rect x="776" y="548" width="8" height="8" fill="#8d8d8d"/><rect x="784" y="548" width="8" height="8" fill="#969696"/><rect x="792" y="548" width="8" height="8" fill="#9f9f9f"/><rect x="800" y="548" width="8" height="8" fill="#a5a5a5"/><rect x="808" y="548" width="8" height="8" fill="#a2a2a2"/><rect x="816" y="548" width="16" height="8" fill="#ababab"/><rect x="832" y="548" width="8" height="8" fill="#c3c3c3"/><rect x="840" y="548" width="8" height="8" fill="#dbdbdb"/><rect x="848" y="548" width="8" height="8" fill="#f0f0f0"/><rect x="856" y="548" width="24" height="8" fill="#f3f3f3"/><rect x="880" y="548" width="8" height="8" fill="#eaeaea"/><rect x="888" y="548" width="8" height="8" fill="#e1e1e1"/><rect x="896" y="548" width="8" height="8" fill="#d8d8d8"/><rect x="904" y="548" width="8" height="8" fill="#cfcfcf"/><rect x="912" y="548" width="8" height="8" fill="#c6c6c6"/><rect x="920" y="548" width="8" height="8" fill="#c0c0c0"/><rect x="928" y="548" width="8" height="8" fill="#b7b7b7"/><rect x="936" y="548" width="8" height="8" fill="#aeaeae"/><rect x="944" y="548" width="8" height="8" fill="#a8a8a8"/><rect x="952" y="548" width="8" height="8" fill="#ababab"/><rect x="960" y="548" width="8" height="8" fill="#aeaeae"/><rect x="968" y="548" width="8" height="8" fill="#b1b1b1"/><rect x="976" y="548" width="24" height="8" fill="#aeaeae"/><rect x="1000" y="548" width="8" height="8" fill="#b1b1b1"/><rect x="1008" y="548" width="8" height="8" fill="#aeaeae"/><rect x="1016" y="548" width="8" height="8" fill="#ababab"/><rect x="1024" y="548" width="8" height="8" fill="#a8a8a8"/><rect x="600" y="556" width="16" height="8" fill="#484848"/><rect x="616" y="556" width="16" height="8" fill="#454545"/><rect x="632" y="556" width="16" height="8" fill="#424242"/><rect x="648" y="556" width="8" height="8" fill="#3f3f3f"/><rect x="656" y="556" width="8" height="8" fill="#4b4b4b"/><rect x="664" y="556" width="8" height="8" fill="#848484"/><rect x="672" y="556" width="24" height="8" fill="#818181"/><rect x="696" y="556" width="24" height="8" fill="#848484"/><rect x="720" y="556" width="8" height="8" fill="#878787"/><rect x="728" y="556" width="8" height="8" fill="#8d8d8d"/><rect x="736" y="556" width="8" height="8" fill="#818181"/><rect x="744" y="556" width="8" height="8" fill="#8d8d8d"/><rect x="752" y="556" width="8" height="8" fill="#909090"/><rect x="760" y="556" width="16" height="8" fill="#939393"/><rect x="776" y="556" width="8" height="8" fill="#909090"/><rect x="784" y="556" width="16" height="8" fill="#969696"/><rect x="800" y="556" width="16" height="8" fill="#9c9c9c"/><rect x="816" y="556" width="8" height="8" fill="#969696"/><rect x="824" y="556" width="8" height="8" fill="#ababab"/><rect x="832" y="556" width="8" height="8" fill="#bdbdbd"/><rect x="840" y="556" width="8" height="8" fill="#cfcfcf"/><rect x="848" y="556" width="8" height="8" fill="#dbdbdb"/><rect x="856" y="556" width="24" height="8" fill="#f6f6f6"/><rect x="880" y="556" width="8" height="8" fill="#f0f0f0"/><rect x="888" y="556" width="8" height="8" fill="#e7e7e7"/><rect x="896" y="556" width="8" height="8" fill="#dedede"/><rect x="904" y="556" width="8" height="8" fill="#d5d5d5"/><rect x="912" y="556" width="8" height="8" fill="#cccccc"/><rect x="920" y="556" width="8" height="8" fill="#c3c3c3"/><rect x="928" y="556" width="8" height="8" fill="#bababa"/><rect x="936" y="556" width="8" height="8" fill="#b1b1b1"/><rect x="944" y="556" width="8" height="8" fill="#ababab"/><rect x="952" y="556" width="8" height="8" fill="#aeaeae"/><rect x="960" y="556" width="8" height="8" fill="#b1b1b1"/><rect x="968" y="556" width="8" height="8" fill="#aeaeae"/><rect x="976" y="556" width="8" height="8" fill="#b7b7b7"/><rect x="984" y="556" width="8" height="8" fill="#b1b1b1"/><rect x="992" y="556" width="24" height="8" fill="#aeaeae"/><rect x="1016" y="556" width="16" height="8" fill="#ababab"/><rect x="600" y="564" width="8" height="8" fill="#484848"/><rect x="608" y="564" width="16" height="8" fill="#454545"/><rect x="624" y="564" width="16" height="8" fill="#424242"/><rect x="640" y="564" width="8" height="8" fill="#3f3f3f"/><rect x="648" y="564" width="8" height="8" fill="#4b4b4b"/><rect x="656" y="564" width="40" height="8" fill="#848484"/><rect x="696" y="564" width="24" height="8" fill="#878787"/><rect x="720" y="564" width="16" height="8" fill="#909090"/><rect x="736" y="564" width="8" height="8" fill="#939393"/><rect x="744" y="564" width="8" height="8" fill="#8d8d8d"/><rect x="752" y="564" width="8" height="8" fill="#939393"/><rect x="760" y="564" width="8" height="8" fill="#969696"/><rect x="768" y="564" width="32" height="8" fill="#939393"/><rect x="800" y="564" width="8" height="8" fill="#969696"/><rect x="808" y="564" width="8" height="8" fill="#939393"/><rect x="816" y="564" width="8" height="8" fill="#969696"/><rect x="824" y="564" width="8" height="8" fill="#9f9f9f"/><rect x="832" y="564" width="8" height="8" fill="#b1b1b1"/><rect x="840" y="564" width="8" height="8" fill="#c0c0c0"/><rect x="848" y="564" width="8" height="8" fill="#c9c9c9"/><rect x="856" y="564" width="8" height="8" fill="#e1e1e1"/><rect x="864" y="564" width="8" height="8" fill="#f9f9f9"/><rect x="872" y="564" width="8" height="8" fill="#fcfcfc"/><rect x="880" y="564" width="8" height="8" fill="#f9f9f9"/><rect x="888" y="564" width="8" height="8" fill="#ededed"/><rect x="896" y="564" width="8" height="8" fill="#e4e4e4"/><rect x="904" y="564" width="8" height="8" fill="#dbdbdb"/><rect x="912" y="564" width="8" height="8" fill="#d2d2d2"/><rect x="920" y="564" width="8" height="8" fill="#c9c9c9"/><rect x="928" y="564" width="8" height="8" fill="#bdbdbd"/><rect x="936" y="564" width="8" height="8" fill="#b4b4b4"/><rect x="944" y="564" width="8" height="8" fill="#aeaeae"/><rect x="952" y="564" width="8" height="8" fill="#b1b1b1"/><rect x="960" y="564" width="8" height="8" fill="#b7b7b7"/><rect x="968" y="564" width="8" height="8" fill="#c0c0c0"/><rect x="976" y="564" width="16" height="8" fill="#b1b1b1"/><rect x="992" y="564" width="8" height="8" fill="#ababab"/><rect x="1000" y="564" width="16" height="8" fill="#aeaeae"/><rect x="1016" y="564" width="16" height="8" fill="#ababab"/><rect x="600" y="572" width="8" height="8" fill="#424242"/><rect x="608" y="572" width="8" height="8" fill="#454545"/><rect x="616" y="572" width="16" height="8" fill="#424242"/><rect x="632" y="572" width="16" height="8" fill="#3f3f3f"/><rect x="648" y="572" width="8" height="8" fill="#4e4e4e"/><rect x="656" y="572" width="24" height="8" fill="#848484"/><rect x="680" y="572" width="16" height="8" fill="#878787"/><rect x="696" y="572" width="8" height="8" fill="#8a8a8a"/><rect x="704" y="572" width="16" height="8" fill="#909090"/><rect x="720" y="572" width="16" height="8" fill="#939393"/><rect x="736" y="572" width="24" height="8" fill="#969696"/><rect x="760" y="572" width="8" height="8" fill="#999999"/><rect x="768" y="572" width="24" height="8" fill="#969696"/><rect x="792" y="572" width="8" height="8" fill="#939393"/><rect x="800" y="572" width="8" height="8" fill="#909090"/><rect x="808" y="572" width="8" height="8" fill="#939393"/><rect x="816" y="572" width="8" height="8" fill="#969696"/><rect x="824" y="572" width="8" height="8" fill="#9f9f9f"/><rect x="832" y="572" width="8" height="8" fill="#a8a8a8"/><rect x="840" y="572" width="8" height="8" fill="#b1b1b1"/><rect x="848" y="572" width="8" height="8" fill="#b7b7b7"/><rect x="856" y="572" width="8" height="8" fill="#cccccc"/><rect x="864" y="572" width="8" height="8" fill="#e4e4e4"/><rect x="872" y="572" width="16" height="8" fill="#fcfcfc"/><rect x="888" y="572" width="8" height="8" fill="#f9f9f9"/><rect x="896" y="572" width="8" height="8" fill="#ededed"/><rect x="904" y="572" width="8" height="8" fill="#e1e1e1"/><rect x="912" y="572" width="8" height="8" fill="#d5d5d5"/><rect x="920" y="572" width="8" height="8" fill="#cccccc"/><rect x="928" y="572" width="8" height="8" fill="#c0c0c0"/><rect x="936" y="572" width="16" height="8" fill="#b7b7b7"/><rect x="952" y="572" width="8" height="8" fill="#c0c0c0"/><rect x="960" y="572" width="32" height="8" fill="#b1b1b1"/><rect x="992" y="572" width="16" height="8" fill="#ababab"/><rect x="1008" y="572" width="16" height="8" fill="#aeaeae"/><rect x="1024" y="572" width="8" height="8" fill="#ababab"/><rect x="600" y="580" width="8" height="8" fill="#424242"/><rect x="608" y="580" width="8" height="8" fill="#454545"/><rect x="616" y="580" width="16" height="8" fill="#424242"/><rect x="632" y="580" width="16" height="8" fill="#3f3f3f"/><rect x="648" y="580" width="16" height="8" fill="#848484"/><rect x="664" y="580" width="16" height="8" fill="#878787"/><rect x="680" y="580" width="8" height="8" fill="#8a8a8a"/><rect x="688" y="580" width="16" height="8" fill="#909090"/><rect x="704" y="580" width="16" height="8" fill="#939393"/><rect x="720" y="580" width="16" height="8" fill="#969696"/><rect x="736" y="580" width="24" height="8" fill="#999999"/><rect x="760" y="580" width="16" height="8" fill="#9c9c9c"/><rect x="776" y="580" width="8" height="8" fill="#999999"/><rect x="784" y="580" width="32" height="8" fill="#969696"/><rect x="816" y="580" width="8" height="8" fill="#999999"/><rect x="824" y="580" width="8" height="8" fill="#9f9f9f"/><rect x="832" y="580" width="8" height="8" fill="#ababab"/><rect x="840" y="580" width="8" height="8" fill="#a8a8a8"/><rect x="848" y="580" width="8" height="8" fill="#a5a5a5"/><rect x="856" y="580" width="8" height="8" fill="#bdbdbd"/><rect x="864" y="580" width="8" height="8" fill="#dbdbdb"/><rect x="872" y="580" width="8" height="8" fill="#e7e7e7"/><rect x="880" y="580" width="8" height="8" fill="#f6f6f6"/><rect x="888" y="580" width="8" height="8" fill="#fcfcfc"/><rect x="896" y="580" width="8" height="8" fill="#f9f9f9"/><rect x="904" y="580" width="8" height="8" fill="#ededed"/><rect x="912" y="580" width="8" height="8" fill="#dedede"/><rect x="920" y="580" width="8" height="8" fill="#d2d2d2"/><rect x="928" y="580" width="8" height="8" fill="#c6c6c6"/><rect x="936" y="580" width="8" height="8" fill="#c0c0c0"/><rect x="944" y="580" width="8" height="8" fill="#c9c9c9"/><rect x="952" y="580" width="40" height="8" fill="#b1b1b1"/><rect x="992" y="580" width="24" height="8" fill="#ababab"/><rect x="1016" y="580" width="8" height="8" fill="#aeaeae"/><rect x="1024" y="580" width="8" height="8" fill="#ababab"/><rect x="600" y="588" width="24" height="8" fill="#424242"/><rect x="624" y="588" width="16" height="8" fill="#3f3f3f"/><rect x="640" y="588" width="8" height="8" fill="#848484"/><rect x="648" y="588" width="16" height="8" fill="#878787"/><rect x="664" y="588" width="8" height="8" fill="#8a8a8a"/><rect x="672" y="588" width="16" height="8" fill="#909090"/><rect x="688" y="588" width="16" height="8" fill="#939393"/><rect x="704" y="588" width="16" height="8" fill="#969696"/><rect x="720" y="588" width="48" height="8" fill="#999999"/><rect x="768" y="588" width="24" height="8" fill="#939393"/><rect x="792" y="588" width="16" height="8" fill="#999999"/><rect x="808" y="588" width="8" height="8" fill="#9c9c9c"/><rect x="816" y="588" width="16" height="8" fill="#9f9f9f"/><rect x="832" y="588" width="16" height="8" fill="#a5a5a5"/><rect x="848" y="588" width="8" height="8" fill="#9f9f9f"/><rect x="856" y="588" width="8" height="8" fill="#b4b4b4"/><rect x="864" y="588" width="8" height="8" fill="#c3c3c3"/><rect x="872" y="588" width="8" height="8" fill="#d2d2d2"/><rect x="880" y="588" width="8" height="8" fill="#e1e1e1"/><rect x="888" y="588" width="8" height="8" fill="#f0f0f0"/><rect x="896" y="588" width="8" height="8" fill="#fcfcfc"/><rect x="904" y="588" width="8" height="8" fill="#f6f6f6"/><rect x="912" y="588" width="8" height="8" fill="#eaeaea"/><rect x="920" y="588" width="8" height="8" fill="#d8d8d8"/><rect x="928" y="588" width="8" height="8" fill="#cfcfcf"/><rect x="936" y="588" width="8" height="8" fill="#d2d2d2"/><rect x="944" y="588" width="56" height="8" fill="#b1b1b1"/><rect x="1000" y="588" width="32" height="8" fill="#ababab"/><rect x="600" y="596" width="16" height="8" fill="#424242"/><rect x="616" y="596" width="16" height="8" fill="#3f3f3f"/><rect x="632" y="596" width="16" height="8" fill="#878787"/><rect x="648" y="596" width="8" height="8" fill="#8a8a8a"/><rect x="656" y="596" width="16" height="8" fill="#909090"/><rect x="672" y="596" width="16" height="8" fill="#939393"/><rect x="688" y="596" width="72" height="8" fill="#969696"/><rect x="760" y="596" width="8" height="8" fill="#939393"/><rect x="768" y="596" width="40" height="8" fill="#909090"/><rect x="808" y="596" width="16" height="8" fill="#8a8a8a"/><rect x="824" y="596" width="16" height="8" fill="#a8a8a8"/><rect x="840" y="596" width="8" height="8" fill="#ababab"/><rect x="848" y="596" width="8" height="8" fill="#b4b4b4"/><rect x="856" y="596" width="8" height="8" fill="#bdbdbd"/><rect x="864" y="596" width="8" height="8" fill="#c6c6c6"/><rect x="872" y="596" width="8" height="8" fill="#d2d2d2"/><rect x="880" y="596" width="8" height="8" fill="#dbdbdb"/><rect x="888" y="596" width="8" height="8" fill="#e4e4e4"/><rect x="896" y="596" width="8" height="8" fill="#ededed"/><rect x="904" y="596" width="8" height="8" fill="#f6f6f6"/><rect x="912" y="596" width="8" height="8" fill="#f0f0f0"/><rect x="920" y="596" width="8" height="8" fill="#e1e1e1"/><rect x="928" y="596" width="32" height="8" fill="#d8d8d8"/><rect x="960" y="596" width="40" height="8" fill="#b1b1b1"/><rect x="1000" y="596" width="32" height="8" fill="#ababab"/><rect x="600" y="604" width="32" height="8" fill="#424242"/><rect x="632" y="604" width="8" height="8" fill="#8a8a8a"/><rect x="640" y="604" width="8" height="8" fill="#909090"/><rect x="648" y="604" width="48" height="8" fill="#939393"/><rect x="696" y="604" width="72" height="8" fill="#909090"/><rect x="768" y="604" width="40" height="8" fill="#8a8a8a"/><rect x="808" y="604" width="8" height="8" fill="#848484"/><rect x="816" y="604" width="32" height="8" fill="#a5a5a5"/><rect x="848" y="604" width="32" height="8" fill="#909090"/><rect x="880" y="604" width="40" height="8" fill="#f6f6f6"/><rect x="920" y="604" width="48" height="8" fill="#d8d8d8"/><rect x="968" y="604" width="40" height="8" fill="#b1b1b1"/><rect x="1008" y="604" width="24" height="8" fill="#ababab"/><rect x="600" y="612" width="16" height="8" fill="#424242"/><rect x="616" y="612" width="8" height="8" fill="#454545"/><rect x="624" y="612" width="16" height="8" fill="#909090"/><rect x="640" y="612" width="128" height="8" fill="#8d8d8d"/><rect x="768" y="612" width="40" height="8" fill="#8a8a8a"/><rect x="808" y="612" width="48" height="8" fill="#a2a2a2"/><rect x="856" y="612" width="8" height="8" fill="#8d8d8d"/><rect x="864" y="612" width="16" height="8" fill="#909090"/><rect x="880" y="612" width="40" height="8" fill="#f6f6f6"/><rect x="920" y="612" width="64" height="8" fill="#d8d8d8"/><rect x="984" y="612" width="24" height="8" fill="#b1b1b1"/><rect x="1008" y="612" width="24" height="8" fill="#ababab"/></g><g filter="url(#b07)"><path d="M867 127L869 129M869 129L871 129M871 129L873 131M833 131L831 133M835 131L833 131M843 131L841 133M841 133L839 135M851 133L853 135M839 135L837 137M853 135L851 137M879 135L881 133M839 137L837 137M851 137L853 139M833 143L831 141M897 143L899 145M835 145L833 143M855 145L857 143M875 145L877 147M899 145L901 145M901 145L903 147M837 147L835 145M877 147L879 149M903 147L905 145M861 149L863 147M891 151L889 153M889 153L889 155M831 155L833 153M839 155L837 157M889 155L889 157M837 157L835 157M903 161L905 163M833 165L835 167M913 165L913 163M833 167L835 167M847 167L847 169M859 167L861 165M789 169L789 171M847 169L845 171M775 171L773 173M789 171L789 173M845 171L845 173M889 171L891 169M773 173L771 175M789 173L789 175M889 173L889 171M769 175L771 177M771 175L771 177M797 175L799 177M907 175L907 177M807 177L809 175M847 177L849 177M875 177L875 175M907 177L907 179M805 179L807 177M875 179L875 177M907 179L909 181M743 181L745 183M803 181L805 179M745 183L747 185M755 183L755 185M801 183L803 181M901 183L903 185M693 185L691 183M729 185L727 187M731 185L729 185M747 185L745 187M755 185L753 187M799 185L801 183M745 187L745 189M769 187L771 189M883 187L885 185M907 187L905 189M689 189L689 187M713 189L715 189M715 189L717 191M811 189L809 187M829 189L831 191M881 189L883 187M891 189L893 189M661 191L659 191M691 191L689 189M813 191L811 189M879 191L881 189M889 191L891 189M663 193L661 191M693 193L691 191M721 193L721 191M771 193L773 193M801 193L803 191M815 193L813 191M887 193L889 191M661 195L663 193M685 195L687 193M769 195L771 193M799 195L801 193M817 195L815 193M885 195L887 193M893 195L891 193M661 197L661 195M729 197L727 195M797 197L799 195M869 197L871 199M883 197L885 195M893 197L893 195M669 199L669 197M731 199L729 197M795 199L797 197M671 201L669 199M711 201L713 199M733 201L731 199M793 201L795 199M735 203L733 201M791 203L793 201M829 203L831 203M853 203L855 201M855 203L857 203M915 203L917 203M687 205L689 203M737 205L735 203M759 205L761 205M761 205L763 205M763 205L765 205M809 205L807 207M825 205L827 205M827 205L829 203M851 205L853 203M853 205L855 203M685 207L687 205M739 207L737 205M807 207L807 209M849 207L851 205M851 207L853 205M891 207L889 209M907 207L909 207M909 207L911 205M669 209L667 211M691 209L691 207M699 209L701 207M741 209L739 207M765 209L767 207M847 209L849 207M849 209L851 207M889 209L887 211M893 209L891 207M665 211L665 213M669 211L667 211M671 211L669 209M673 211L671 211M691 211L691 209M701 211L699 209M717 211L719 209M743 211L741 209M763 211L765 209M847 211L849 209M863 211L865 211M887 211L885 213M671 213L669 211M691 213L691 211M703 213L701 211M715 213L717 211M859 213L861 213M861 213L863 211M885 213L883 215M671 215L671 213M693 215L691 213M729 215L731 217M811 215L813 215M671 217L671 215M731 217L733 219M657 219L655 217M843 219L841 221M655 221L657 219M677 221L675 223M789 221L791 219M835 221L833 219M845 221L843 219M913 221L913 219M675 223L673 225M709 223L711 225M749 223L749 225M765 223L767 225M835 223L835 221M911 223L913 221M673 225L673 227M833 225L835 223M857 225L857 223M873 225L875 225M875 225L877 223M879 225L881 223M895 225L897 225M909 225L911 223M807 227L809 229M877 227L879 225M883 227L885 225M893 227L895 225M701 229L699 231M807 229L809 229M893 229L893 227M665 231L663 233M695 231L695 233M699 231L697 233M805 231L807 229M695 233L693 235M697 233L695 235M693 235L691 237M695 235L693 237M761 235L763 235M789 235L791 233M813 235L811 233M815 235L813 235M907 235L909 235M909 235L911 237M693 237L693 239M789 237L789 235M833 237L835 239M843 237L843 239M861 237L859 239M717 239L715 237M731 239L733 239M733 239L735 237M789 239L789 237M843 239L845 241M859 239L857 241M889 239L891 241M717 241L717 239M791 241L789 239M833 241L835 239M857 241L855 243M891 241L893 243M679 243L681 245M705 243L703 245M717 243L717 241M745 243L743 245M809 243L811 241M811 243L811 241M831 243L833 241M893 243L895 245M681 245L681 247M703 245L701 247M743 245L743 247M767 245L767 247M781 245L779 247M813 245L811 243M829 245L831 243M871 245L869 247M681 247L681 249M701 247L701 249M767 247L767 249M869 247L869 249M681 249L679 251M689 249L691 251M701 249L699 251M759 249L761 251M797 249L797 251M869 249L867 251M887 249L889 249M889 249L891 251M679 251L677 253M761 251L763 253M797 251L797 253M801 251L799 253M865 251L867 251M875 251L877 253M891 251L893 251M801 253L799 253M877 253L875 255M771 255L769 253M797 255L795 255M803 255L801 253M837 255L839 255M839 255L841 255M875 255L877 257M725 257L727 257M759 257L761 259M773 257L771 255M789 257L787 255M799 257L797 255M805 257L803 255M895 257L897 257M897 257L899 259M775 259L773 257M807 259L805 257M811 259L809 261M899 259L901 261M777 261L775 259M809 261L807 259M823 261L823 263M823 263L821 265M821 265L821 267M825 265L823 265M851 265L853 267M871 265L873 263M827 267L825 265M829 267L827 267M831 267L829 267M843 267L845 269M869 267L871 265M845 269L847 271M881 269L881 271M903 273L903 275M865 275L867 273M889 275L887 277M849 277L847 277M863 277L865 275M887 277L885 279M821 283L821 281M841 283L843 281M821 285L821 283M831 287L833 285M913 287L915 285M829 289L831 287M911 289L913 287M827 291L829 289M857 291L859 291M859 291L861 291M861 291L863 291M863 291L865 293M917 293L917 291M919 295L917 293M841 297L843 299M897 297L899 297M899 297L901 295M915 299L913 297M873 301L875 303M917 301L915 299M875 303L877 305M915 303L917 301M717 497L715 499M719 499L717 497M721 501L719 499M723 501L721 501M711 511L709 511M737 517L737 519M737 519L735 521M735 521L733 523M733 523L731 525M731 525L729 527M739 527L741 529M755 527L753 529M741 529L741 531M753 529L753 531M741 531L739 533M777 533L779 535M795 545L793 545M775 549L773 551M773 551L773 553M773 553L773 555M773 555L775 557M779 555L779 557M775 557L775 559M779 557L779 559M795 559L793 561M821 559L823 561M775 563L775 561M775 565L775 563M809 565L807 565M811 567L809 565M837 569L835 571M801 571L799 569M835 571L833 573M795 573L797 571M803 573L801 571M831 573L829 571M833 573L831 573M841 573L843 575M793 575L795 573M805 575L803 573M843 575L843 577M765 579L763 581M777 579L779 577M779 579L779 577M783 579L781 581M781 581L779 579M833 581L833 579M765 583L763 581M855 583L853 583M767 585L765 583M853 585L851 583M801 587L803 589M855 587L853 585M853 589L855 587M773 593L771 595M835 593L833 591M837 595L835 593M819 601L817 603M817 603L815 605M857 603L855 605" stroke="#000" stroke-opacity="0.06" stroke-width="1.0" stroke-linecap="round" fill="none"/><path d="M657 251L655 251M661 251L659 253M659 253L657 251M653 257L651 255M711 259L711 261M715 261L713 259M671 263L673 263M717 263L715 261M719 263L717 263M779 263L777 261M791 263L789 261M681 265L683 267M755 265L753 265M781 265L779 263M793 265L791 263M683 267L681 269M695 267L697 265M757 267L755 265M783 267L781 265M795 267L793 265M681 269L681 271M759 269L757 267M785 269L783 267M797 269L795 267M711 271L709 273M761 271L759 269M775 271L777 269M787 271L785 269M799 271L797 269M657 273L655 275M669 273L669 275M707 273L705 275M709 273L707 273M777 273L775 271M789 273L787 271M801 273L799 271M655 275L653 277M669 275L667 277M735 275L733 273M779 275L777 273M803 275L801 273M653 277L651 279M661 277L661 279M667 277L665 277M737 277L735 275M621 279L621 277M651 279L649 281M681 279L679 281M683 279L681 279M731 279L729 277M739 279L737 277M623 281L621 279M649 281L647 283M675 281L673 281M679 281L677 283M733 281L731 279M639 283L637 285M677 283L675 281M719 283L717 281M735 283L733 281M751 283L751 281M637 285L635 285M711 285L709 283M719 285L719 283M737 285L735 283M751 285L751 283M779 285L777 287M781 285L779 285M797 285L799 283M721 287L719 285M737 287L735 285M739 287L737 285M751 287L751 285M693 289L693 291M723 289L721 287M739 289L737 287M741 289L739 287M769 289L769 291M699 291L697 289M741 291L739 289M743 291L741 289M769 291L771 293M647 293L645 291M649 293L647 293M651 293L649 293M743 293L741 291M745 295L743 293M729 297L731 297M731 297L733 297M733 297L735 297M745 297L745 295M921 297L919 295M709 299L707 301M727 299L729 297M655 301L653 301M685 301L687 299M707 301L707 303M725 301L727 299M759 301L759 299M795 301L797 301M797 301L799 303M657 303L655 301M761 303L759 301M775 303L773 301M815 303L813 301M677 305L675 303M679 305L677 305M711 305L709 303M777 305L775 303M805 305L805 303M817 305L815 303M877 305L879 303M779 307L777 305M807 307L805 305M813 307L813 305M815 307L813 305M819 307L817 305M843 307L841 305M863 307L861 305M809 309L807 307M817 309L815 307M821 309L819 307M845 309L843 307M865 309L863 307M867 309L865 309M901 309L903 307M819 311L817 309M823 311L821 309M847 311L845 309M857 311L855 311M885 311L887 311M887 311L889 311M899 311L901 309M821 313L819 311M825 313L823 311M849 313L847 311M859 313L857 311M883 313L885 311M823 315L821 313M827 315L825 313M851 315L849 313M881 315L883 313M783 317L781 319M825 317L823 315M829 317L827 315M841 317L839 315M853 317L851 315M889 317L887 315M907 317L907 315M693 319L691 321M781 319L779 321M793 319L795 317M831 319L829 317M843 319L841 317M691 321L689 323M791 321L793 319M807 321L807 319M845 321L843 319M847 321L845 321M915 321L917 323M689 323L687 323M803 323L805 323M805 323L807 321M911 323L913 323M913 323L915 321M909 325L911 323M813 327L811 325M881 327L879 325M679 329L677 331M813 329L811 327M879 329L879 327M659 331L661 329M661 331L661 329M815 331L813 329M857 331L855 333M875 331L877 329M881 331L879 329M663 333L661 331M817 333L815 331M819 333L817 333M855 333L853 333M873 333L875 331M883 333L881 331M821 335L819 333M823 335L821 335M871 335L873 333M883 335L883 333M845 337L843 335M893 337L891 339M935 337L935 339M675 339L673 339M677 339L675 339M833 339L835 339M835 339L837 341M847 339L845 337M891 339L891 341M831 341L833 339M873 345L871 347M925 345L925 347M657 347L655 345M817 347L815 347M819 347L817 347M841 347L839 345M925 347L927 349M659 349L657 347M843 349L841 347M895 349L897 347M927 349L927 351M661 351L659 349M895 351L895 349M915 351L917 353M933 351L933 349M835 353L835 351M917 353L919 355M935 353L933 351M835 355L835 353M919 355L921 357M921 357L923 359M867 359L865 361M869 359L867 359M885 359L887 357M909 359L911 361M923 359L925 359M851 361L851 363M887 361L885 359M851 363L853 365M913 363L915 361M933 363L935 363M935 363L937 363M937 363L939 363M939 363L941 361M941 363L941 361M845 365L847 367M911 365L913 363M909 367L911 365M899 369L899 371M909 369L909 367M899 371L897 373M897 373L895 375M925 379L927 381M943 379L945 379M965 391L967 391M963 393L965 391M971 397L973 395M953 407L955 407M955 409L955 407M971 409L969 407M975 409L973 411M957 411L955 409M973 411L971 409M701 473L699 475M715 473L713 475M699 475L697 477M713 475L711 477M697 477L697 479M711 477L709 479M721 483L719 485M729 483L727 485M719 485L717 487M717 487L715 489M739 497L737 499M747 497L749 499M781 497L783 497M737 499L735 501M749 499L749 501M781 499L783 497M783 501L781 499M793 501L791 499M737 503L735 501M793 503L793 501M737 505L737 503M793 505L793 503M739 507L737 505M767 507L765 509M765 509L763 507M769 509L767 507M771 509L769 509M779 513L777 515M777 515L775 517M809 515L809 513M775 517L773 519M789 517L789 519M807 517L809 515M771 519L771 521M789 519L789 521M801 521L799 523M799 523L797 525M823 523L823 521M781 525L783 527M797 525L795 525M783 527L785 529M785 529L785 531M785 531L787 533M801 533L799 535M839 533L839 531M843 533L841 531M779 535L781 535M799 535L797 537M815 535L815 537M841 535L839 533M815 537L813 539M843 537L841 535M813 539L813 541M843 539L843 537M821 541L821 543M841 541L843 539M829 547L829 549M829 549L829 551M829 551L829 553M879 553L881 555M821 555L821 557M845 555L843 557M881 555L879 557M821 557L821 559M843 557L841 559M835 559L833 561M841 559L839 561M833 561L831 563M907 561L909 561M909 561L911 561M911 561L913 559M925 561L923 559M831 563L831 565M889 563L887 563M903 563L905 563M905 563L907 561M927 563L925 561M891 565L889 563M853 567L851 569M855 567L853 567M943 567L945 565M911 569L913 569M871 571L873 573M909 571L911 569M911 571L913 569M911 573L911 571M909 575L911 573M917 577L919 577M919 577L921 579M885 579L883 581M897 579L897 581M883 581L881 581M897 581L897 583M857 583L855 583M859 583L857 583M897 583L899 585M899 585L901 587M915 587L917 585M913 589L915 587M879 593L877 595M881 593L879 593M877 595L875 597M893 595L891 597M875 597L873 599M891 597L893 599M923 597L925 595M927 597L925 595M929 597L927 597M913 599L915 599M915 599L917 601M875 601L873 601M911 601L913 599M917 601L919 603" stroke="#000" stroke-opacity="0.12" stroke-width="1.0" stroke-linecap="round" fill="none"/><path d="M713 307L711 305M737 311L739 311M709 313L707 311M711 315L709 313M721 317L723 319M761 317L763 315M723 319L725 321M769 327L767 325M735 329L737 329M751 329L753 329M771 329L769 327M703 331L705 329M733 331L735 329M749 331L751 329M755 331L757 329M717 333L715 335M731 333L733 331M757 333L755 331M729 335L731 333M755 335L757 333M785 335L787 337M713 337L713 335M731 337L729 335M753 337L755 335M767 337L767 335M691 339L689 337M693 339L691 339M711 339L713 337M719 339L719 337M733 339L731 337M769 339L767 337M679 341L677 339M681 341L679 341M719 341L719 339M771 341L769 339M751 347L753 347M753 347L755 349M685 349L683 351M737 349L739 349M755 349L757 351M787 349L789 351M809 349L809 347M699 351L697 353M789 351L791 351M793 351L793 349M807 351L809 349M683 353L681 353M713 353L711 355M789 353L791 351M795 353L793 351M805 353L807 351M685 355L683 353M711 355L709 355M721 355L723 357M759 355L761 353M795 355L795 353M687 357L685 355M723 357L725 357M725 357L727 357M757 357L759 355M795 357L795 355M795 359L795 357M653 361L653 359M655 363L653 361M663 363L661 361M771 365L773 365M773 365L775 365M679 367L677 369M681 367L679 367M777 367L775 365M827 367L825 369M693 369L693 367M707 369L705 371M779 369L777 367M807 369L807 367M825 369L825 371M855 369L857 367M705 371L703 371M781 371L779 369M783 371L781 371M785 371L783 371M803 371L805 371M805 371L807 369M853 371L855 369M851 373L853 371M651 375L649 377M753 375L751 373M891 375L893 377M649 377L647 379M709 377L707 375M813 377L815 375M829 377L831 377M853 377L851 375M867 377L869 379M647 379L647 381M795 379L793 381M797 379L795 379M811 379L813 377M827 379L829 377M869 379L871 379M679 381L677 383M707 381L709 379M793 381L791 383M809 381L811 379M871 381L873 379M677 383L677 385M691 383L689 383M693 383L691 383M779 383L777 383M869 383L871 381M677 385L679 387M723 385L725 383M833 385L835 383M835 385L835 383M889 385L891 383M655 387L657 389M721 387L723 385M831 387L833 385M835 387L835 385M887 387L889 385M647 389L645 391M719 389L721 387M793 389L791 391M837 389L835 387M879 389L879 387M747 391L749 393M749 393L751 393M751 393L753 393M805 393L807 395M685 395L685 393M703 395L701 397M807 395L809 397M687 397L685 395M701 397L703 399M729 397L729 399M869 397L871 395M895 397L897 395M671 399L669 397M689 399L687 397M703 399L705 401M787 399L789 397M839 399L841 397M855 399L855 401M867 399L869 397M673 401L671 399M705 401L705 403M925 401L923 399M649 403L647 403M675 403L673 401M677 403L675 403M705 403L705 405M709 403L707 405M877 403L879 405M925 403L923 401M651 405L649 403M707 405L705 405M721 405L721 407M737 405L735 403M739 405L737 405M741 405L739 405M795 405L793 403M841 405L843 403M911 405L911 403M925 405L925 403M937 405L939 405M939 405L941 405M721 407L721 409M825 407L823 405M909 407L911 405M679 409L677 409M721 409L721 411M771 409L773 407M911 409L909 407M663 411L663 409M681 411L679 409M803 411L805 411M865 411L863 413M911 411L911 409M661 413L663 411M727 413L725 415M801 413L803 411M807 413L805 411M859 413L857 413M861 413L859 413M863 413L861 413M883 413L885 411M737 415L735 417M783 415L781 413M807 415L807 413M881 415L883 413M903 415L901 413M687 417L685 417M689 417L687 417M735 417L733 419M903 417L903 415M949 417L947 417M669 419L667 417M709 419L707 419M767 419L765 419M769 419L767 419M869 419L867 421M873 419L871 421M901 419L903 417M951 419L949 417M653 421L651 423M671 421L669 419M701 421L701 423M711 421L709 419M733 421L731 421M871 421L869 419M965 421L967 423M651 423L649 425M671 423L671 421M683 423L681 421M709 423L711 421M735 423L733 421M923 423L925 423M967 423L967 425M649 425L649 427M685 425L683 423M793 425L795 425M915 425L917 425M917 425L919 427M963 425L965 427M983 425L981 427M649 427L649 429M719 427L719 425M729 427L729 425M839 427L841 427M951 427L951 425M965 427L967 425M655 429L653 429M717 429L719 427M729 429L729 427M769 429L767 427M803 429L805 429M821 429L821 431M869 429L867 427M943 429L945 427M949 429L951 427M657 431L655 429M717 431L717 429M729 431L729 429M821 431L821 433M871 431L869 429M945 431L943 429M659 433L657 431M729 433L729 431M741 433L743 433M743 433L745 431M785 433L787 433M821 433L821 435M857 433L859 431M873 433L871 431M915 433L917 431M661 435L659 433M707 435L705 437M739 435L741 433M751 435L751 433M855 435L857 433M883 435L885 433M705 437L703 439M753 437L751 435M809 437L811 437M853 437L855 435M885 437L883 435M997 437L999 439M755 439L753 437M853 439L853 437M875 439L873 439M883 439L885 437M901 439L899 437M903 439L901 439M969 439L971 441M973 439L975 437M657 441L659 439M659 441L659 439M757 441L755 439M773 441L771 443M859 441L861 439M905 441L903 439M965 441L967 441M967 441L969 439M971 441L973 439M659 443L657 441M661 443L659 441M689 443L689 441M769 443L767 441M771 443L769 443M787 443L789 445M923 443L921 441M661 445L659 443M663 445L661 443M715 445L713 447M717 445L715 445M789 445L791 447M925 445L923 443M937 445L939 443M663 447L661 445M665 447L663 445M713 447L711 447M925 447L925 445M935 447L937 445M667 449L665 447M885 449L883 449M889 449L887 451M923 449L925 447M731 451L731 453M745 451L747 453M773 451L771 453M807 451L809 453M887 451L885 449M947 451L949 449M963 451L965 451M701 453L699 451M731 453L729 455M771 453L769 455M775 453L773 451M809 453L811 453M941 453L943 453M943 453L945 453M945 453L947 451M977 453L977 451M677 455L679 457M703 455L701 453M729 455L727 457M795 455L797 455M907 455L907 457M979 455L977 453M993 455L991 457M679 457L681 459M685 457L683 457M687 457L685 457M689 457L687 457M715 457L715 455M749 457L749 455M789 457L791 459M793 457L795 455M813 457L815 457M839 457L841 457M841 457L843 455M875 457L873 455M885 457L883 457M907 457L907 459M977 457L979 455M715 459L715 457M739 459L741 461M791 459L793 457M811 459L813 457M877 459L875 457M887 459L885 457M901 459L903 461M951 459L953 457M741 461L743 461M809 461L811 459M879 461L877 459M943 461L945 459M951 461L951 459M807 463L809 461M861 463L859 465M925 463L925 465M943 463L943 461M951 463L951 461M663 465L665 467M667 465L665 467M855 465L853 463M857 465L855 465M859 465L857 465M871 465L869 467M889 465L887 465M951 465L951 463M983 465L985 465M689 467L689 469M691 467L689 469M693 467L691 467M791 467L793 467M869 467L867 469M891 467L889 465M975 467L977 469M981 467L983 465M985 467L987 465M733 469L735 467M739 469L741 467M789 469L791 467M867 469L865 471M893 469L891 467M977 469L979 469M979 469L981 467M983 469L985 467M677 471L675 473M703 471L701 473M717 471L715 473M731 471L733 469M747 471L745 471M763 471L765 469M895 471L893 469M981 471L983 469M675 473L673 475M761 473L763 471M979 473L981 471M759 475L761 473M807 475L809 477M937 475L937 477M805 477L807 475M883 477L881 479M937 477L937 479M803 479L805 477M879 479L879 481M881 479L879 481M967 479L967 477M987 479L989 477M745 481L745 479M801 481L803 479M905 481L907 483M969 481L967 479M985 481L987 479M663 483L661 485M661 485L661 487M893 485L893 487M997 485L999 483M789 487L791 489M893 487L891 489M927 487L925 489M823 489L825 489M865 489L863 487M925 489L923 491M961 489L959 491M821 491L823 489M865 491L865 489M891 491L889 489M923 491L921 493M819 493L821 491M893 493L891 491M921 493L921 495M817 495L819 493M827 495L829 493M977 495L975 497M815 497L817 495M851 497L853 495M905 497L907 499M941 497L943 499M975 497L975 499M981 497L981 499M907 499L909 501M943 499L945 501M975 499L973 501M981 499L981 501M1005 499L1005 501M867 501L865 503M869 501L867 501M927 501L925 503M945 501L947 501M995 501L997 503M967 503L965 505M915 505L917 503M965 505L963 507M893 507L891 507M895 507L893 507M915 507L915 505M963 507L961 509M863 509L863 507M915 509L915 507M961 509L959 511M849 511L851 509M891 511L891 509M913 511L915 509M959 511L959 513M847 513L849 511M879 513L881 515M911 513L913 511M995 513L997 515M827 515L829 515M849 515L847 513M879 515L881 515M997 515L999 515M877 517L879 515M835 519L833 519M837 521L835 519M857 521L855 519M1011 521L1013 521M859 523L857 521M995 523L997 525M857 525L859 523M905 525L907 525M935 525L937 527M997 525L999 527M1013 525L1015 523M855 527L857 525M891 527L893 525M937 527L937 529M983 527L981 529M999 527L1001 529M1011 527L1013 525M889 529L891 527M911 529L909 527M937 529L935 531M1001 529L999 531M867 531L869 529M913 531L911 529M995 531L997 531M997 531L999 533M999 531L999 533M845 533L843 533M847 533L845 533M875 533L873 533M873 535L873 533M925 535L927 537M873 537L873 535M927 537L929 537M929 537L931 537M977 537L977 539M873 539L873 537M977 539L977 541M991 539L993 537M857 541L855 539M859 541L857 541M861 541L859 541M891 541L893 541M977 541L979 543M989 541L991 539M887 543L889 543M889 543L891 541M891 543L893 541M919 543L921 545M939 547L937 545M1003 547L1005 547M895 549L895 547M941 549L939 547M1001 549L1003 547M987 551L985 551M1001 551L1001 549M913 553L915 555M989 553L987 551M953 557L955 557M955 557L957 559M985 563L983 565M983 565L981 565M943 589L945 591M945 591L947 593" stroke="#000" stroke-opacity="0.20" stroke-width="1.0" stroke-linecap="round" fill="none"/><path d="M873 131L875 131M875 131L877 131M877 131L879 129M879 131L879 129M831 133L833 135M881 133L879 131M833 135L833 137M833 137L833 139M835 137L833 139M837 137L835 137M833 139L831 141M853 139L855 141M855 141L857 143M831 143L829 143M857 143L859 143M859 143L861 145M833 145L831 143M861 145L863 147M833 147L833 145M863 147L865 149M831 149L833 147M879 149L881 151M831 151L831 149M881 151L881 153M833 153L831 151M881 153L883 155M833 155L833 153M883 155L885 157M835 157L833 155M885 157L887 159M889 157L889 159M887 159L889 161M889 159L889 161M865 161L867 161M867 161L869 161M869 161L871 161M889 161L887 163M863 163L865 161M887 163L887 165M861 165L863 163M887 165L887 167M835 167L837 169M837 169L839 169M839 169L841 171M881 169L883 167M841 171L843 171M843 171L845 173M879 171L881 169M817 173L819 171M845 173L847 175M877 173L879 171M789 175L787 177M815 175L817 173M847 175L849 177M875 175L877 173M771 177L773 179M787 177L785 179M813 177L815 175M773 179L775 181M811 179L813 177M775 181L777 183M783 181L785 179M811 181L811 179M909 181L907 183M777 183L779 185M781 183L783 181M809 183L811 181M907 183L905 185M685 185L687 187M779 185L781 183M807 185L809 183M885 185L887 187M905 185L905 187M677 187L679 187M679 187L681 189M683 187L685 185M687 187L689 187M753 187L753 189M805 187L807 185M887 187L889 187M889 187L891 187M891 187L893 189M675 189L677 187M681 189L683 187M745 189L743 191M753 189L751 191M771 189L773 191M805 189L805 187M893 189L895 189M673 191L675 189M687 191L687 189M717 191L719 193M723 191L721 189M743 191L741 191M751 191L749 193M773 191L773 193M783 191L785 189M803 191L805 189M831 191L833 193M861 191L859 193M893 191L895 189M673 193L673 191M687 193L687 191M725 193L723 191M743 193L741 191M745 193L743 193M747 193L745 193M749 193L747 193M773 193L775 195M781 193L783 191M833 193L835 195M859 193L857 195M891 193L893 191M671 195L673 193M687 195L687 193M711 195L713 197M727 195L725 193M775 195L777 197M783 195L781 193M801 195L803 193M835 195L837 197M845 195L847 197M857 195L855 197M669 197L671 195M689 197L687 195M709 197L711 195M713 197L715 197M777 197L779 199M781 197L783 195M799 197L801 195M837 197L839 199M841 197L843 197M843 197L845 195M847 197L849 195M855 197L853 199M689 199L689 197M707 199L709 197M713 199L715 197M779 199L781 197M797 199L799 197M839 199L841 197M871 199L873 201M687 201L689 199M705 201L707 199M715 201L713 199M795 201L797 199M689 203L687 201M703 203L705 201M717 203L715 201M795 203L795 201M831 203L833 205M689 205L689 203M701 205L703 203M719 205L717 203M765 205L767 207M797 205L795 203M911 205L913 207M691 207L689 205M701 207L701 205M719 207L719 205M767 207L769 207M769 207L771 209M795 207L797 205M913 207L915 207M915 207L917 205M719 209L719 207M771 209L771 211M797 209L795 207M807 209L809 211M667 211L665 213M771 211L771 213M795 211L797 209M809 211L811 213M819 211L821 211M821 211L823 213M665 213L663 215M771 213L771 215M793 213L795 211M811 213L813 215M817 213L819 211M823 213L825 213M657 215L655 217M663 215L661 217M771 215L773 217M793 215L793 213M813 215L815 215M815 215L817 213M867 215L869 213M917 215L919 215M659 217L657 215M661 217L659 217M773 217L773 219M793 217L793 215M823 217L823 215M829 217L827 219M831 217L829 217M865 217L867 215M915 217L917 215M733 219L735 221M773 219L773 221M791 219L793 217M825 219L823 217M827 219L825 219M833 219L831 217M835 219L833 219M863 219L865 217M913 219L915 217M735 221L735 223M837 221L835 219M839 221L837 221M841 221L839 221M859 221L861 221M861 221L863 219M879 221L881 223M735 223L733 225M857 223L859 221M877 223L879 221M881 223L883 225M887 223L889 221M711 225L713 227M733 225L735 227M749 225L749 227M767 225L769 227M883 225L885 225M885 225L887 223M673 227L675 229M713 227L715 229M735 227L737 229M749 227L747 229M769 227L771 229M675 229L677 231M715 229L715 231M737 229L739 231M741 229L739 231M743 229L741 229M745 229L743 229M747 229L745 229M769 229L771 229M785 229L783 231M787 229L785 229M789 229L787 229M809 229L811 231M813 229L815 231M677 231L679 233M681 231L683 231M683 231L685 233M715 231L717 233M767 231L769 229M783 231L781 233M791 231L789 229M811 231L813 229M813 231L815 231M679 233L681 231M685 233L687 235M717 233L719 233M719 233L721 233M721 233L723 233M723 233L725 231M765 233L767 231M781 233L779 235M791 233L791 231M811 233L813 231M687 235L689 237M717 235L719 233M763 235L765 233M779 235L779 237M809 235L811 233M689 237L691 237M715 237L717 235M809 237L809 235M811 239L809 237M835 239L837 241M811 241L811 239M837 241L839 243M843 241L845 241M839 243L841 243M841 243L843 241M855 243L853 245M853 245L851 247M895 245L897 247M897 247L899 247M899 247L901 247M901 247L903 247M903 247L905 247M905 247L907 247M907 247L909 247M767 249L765 251M895 249L897 247M695 251L693 253M697 251L695 251M699 251L697 251M765 251L763 253M779 251L777 249M849 251L851 253M893 251L895 249M677 253L675 255M693 253L693 255M763 253L763 255M769 253L767 253M781 253L779 251M797 253L795 255M799 253L797 253M843 253L845 253M845 253L847 253M847 253L849 251M675 255L675 257M763 255L761 257M783 255L781 253M841 255L843 253M911 255L911 253M675 257L675 259M727 257L729 259M761 257L761 259M767 257L765 255M785 257L783 255M877 257L879 259M911 257L911 255M675 259L673 261M769 259L767 257M787 259L785 257M879 259L877 261M909 259L911 257M773 261L771 261M789 261L787 259M877 261L875 263M901 261L903 263M905 261L907 261M907 261L909 259M903 263L905 261M823 265L821 267M821 267L819 269M819 269L817 271M817 271L815 273M817 273L815 273M867 273L869 271M869 273L869 271M819 275L817 273M871 275L869 273M903 275L905 277M821 277L819 275M847 277L845 275M871 277L871 275M905 277L907 279M823 279L821 277M845 279L847 277M869 279L871 277M907 279L909 281M821 281L823 279M837 281L839 281M839 281L841 281M841 281L843 281M843 281L845 279M867 281L869 279M835 283L837 281M867 283L867 281M833 285L835 283M867 285L867 283M867 287L867 285M889 287L891 285M867 289L867 287M887 289L889 287M901 289L903 287M867 291L867 289M885 291L887 289M899 291L901 289M917 291L919 289M865 293L867 291M883 293L885 291M901 293L899 291M915 293L917 291M883 295L883 293M901 295L901 293M915 295L915 293M883 297L883 295M913 297L915 295M843 299L843 301M847 299L845 301M881 299L883 297M843 301L843 303M845 301L843 303M849 301L847 299M879 301L881 299M851 303L849 301M879 303L879 301M709 489L707 491M711 489L709 489M715 489L713 487M717 489L715 489M723 489L721 491M719 491L717 489M721 491L719 491M715 499L713 499M731 503L729 505M729 505L727 507M727 507L725 509M725 509L723 511M723 511L723 513M723 515L721 517M721 517L719 519M719 519L717 521M717 521L719 523M721 525L719 523M723 525L721 525M725 525L723 525M767 525L769 527M727 527L725 525M729 527L727 527M769 527L769 529M769 529L767 531M755 531L753 531M759 531L757 533M761 531L759 531M763 531L761 531M765 531L763 531M767 531L765 531M757 533L755 531M783 539L783 541M783 541L785 543M785 543L785 545M785 545L787 547M787 547L787 549M787 549L787 551M809 553L807 555M811 553L809 553M775 561L775 559M823 561L823 563M823 563L823 565M785 565L783 563M807 565L805 565M823 565L825 567M831 565L829 567M787 567L785 565M795 567L797 565M825 567L827 569M829 567L827 569M787 569L787 567M795 569L795 567M787 571L787 569M797 571L795 569M829 571L827 571M785 573L787 571M827 573L825 573M781 575L783 575M783 575L785 573M829 575L827 573M779 577L781 575M821 577L819 577M831 577L829 575M823 579L821 577M833 579L831 577M763 581L761 583M825 581L823 579M757 583L755 585M759 583L757 583M761 583L759 583M823 583L825 581M823 585L823 583M825 587L823 585M803 589L805 591M827 589L825 587M805 591L807 593M829 591L827 589M833 591L831 593M807 593L809 595M831 593L829 591M809 595L809 597M809 597L807 599M807 599L807 601M807 601L807 603M807 603L807 605M807 605L805 607M805 607L803 607" stroke="#000" stroke-opacity="0.07" stroke-width="1.3" stroke-linecap="round" fill="none"/><path d="M655 251L653 253M653 253L651 255M649 255L647 255M651 255L649 255M713 259L711 261M729 259L731 261M733 259L735 259M735 259L737 261M673 261L673 263M711 261L709 263M731 261L733 259M737 261L739 261M771 261L769 259M673 263L675 265M709 263L707 265M775 263L773 261M675 265L677 265M677 265L679 267M707 265L705 267M777 265L775 263M679 267L679 269M705 267L703 269M779 267L777 265M679 269L681 271M703 269L703 271M777 269L779 267M673 281L671 279M647 283L647 285M777 287L775 289M775 289L773 291M773 291L771 293M771 293L769 295M769 295L767 297M669 297L667 295M735 297L737 297M769 297L767 297M671 299L669 297M771 299L769 297M673 301L671 299M773 301L771 299M809 301L807 299M675 303L673 301M707 303L705 305M709 303L707 303M799 303L801 303M801 303L803 305M811 303L809 301M701 305L699 305M703 305L701 305M705 305L703 305M813 305L811 303M845 305L843 303M853 305L851 303M855 305L853 305M861 305L859 307M741 307L741 305M847 307L845 305M857 307L855 305M859 307L857 307M741 309L741 307M849 309L847 307M701 311L701 309M801 311L803 309M851 311L849 309M855 311L853 313M889 311L891 311M801 313L801 311M837 313L835 311M853 313L851 311M909 313L911 311M759 315L761 315M801 315L801 313M839 315L837 313M887 315L889 313M907 315L909 313M679 317L677 315M795 317L797 317M797 317L799 317M799 317L801 315M885 317L887 315M681 319L679 317M807 319L809 317M883 319L885 317M683 321L681 319M685 321L683 321M881 321L883 319M687 323L685 321M879 323L881 321M917 323L919 323M689 325L687 323M879 325L879 323M687 327L689 325M879 327L879 325M663 329L663 327M687 329L687 327M877 329L879 327M665 331L663 329M677 331L675 333M845 331L843 329M645 333L643 335M667 333L665 331M671 333L669 335M673 333L671 333M675 333L673 333M847 333L845 331M853 333L851 335M647 335L645 333M669 335L667 333M849 335L847 333M851 335L849 335M649 337L647 335M651 339L649 337M653 339L651 339M673 339L671 339M839 339L841 337M655 341L653 339M837 341L839 339M891 341L893 343M657 343L655 341M837 343L837 341M859 343L857 343M861 343L859 343M867 343L865 345M893 343L895 345M655 345L657 343M813 345L813 343M839 345L837 343M863 345L861 343M865 345L863 345M869 345L867 343M893 345L895 345M815 347L813 345M839 347L839 345M871 347L869 345M891 347L893 345M837 349L839 347M889 349L891 347M835 351L837 349M887 351L889 349M927 351L929 353M885 353L887 351M887 355L885 353M887 357L887 355M943 359L945 357M911 361L913 361M913 361L915 361M915 361L917 361M917 361L919 363M921 361L923 361M923 361L925 359M941 361L943 359M919 363L921 361M895 375L893 377M955 377L957 377M945 379L947 381M949 379L951 381M953 379L955 377M927 381L927 383M947 381L949 379M951 381L953 379M927 383L929 385M929 385L931 387M915 387L917 385M931 387L933 387M915 389L915 387M969 389L971 389M927 391L929 389M967 391L969 389M925 393L927 391M965 393L967 391M923 395L925 393M949 395L947 393M951 395L949 395M963 395L965 393M953 397L951 395M963 397L963 395M955 399L953 397M965 399L963 397M957 401L955 399M965 401L965 399M957 403L957 401M965 403L965 401M957 405L957 403M967 405L965 403M955 407L957 405M969 407L967 405M697 479L697 481M707 479L705 481M709 479L707 479M701 481L699 483M703 481L701 481M705 481L703 481M699 483L697 483M727 485L725 487M713 487L711 489M725 487L723 489M783 497L785 495M789 497L791 495M791 499L789 497M733 501L731 503M735 501L733 501M749 501L751 503M751 503L751 505M751 505L751 507M759 505L757 507M761 505L759 505M751 507L751 509M753 507L751 509M755 507L753 507M757 507L755 507M763 507L761 505M751 509L749 511M811 511L813 509M723 513L723 515M809 513L811 511M773 519L771 521M771 521L769 523M789 521L787 523M823 521L825 519M769 523L767 525M787 523L789 525M791 523L789 525M793 523L791 523M789 525L791 527M795 525L793 523M791 527L793 529M793 529L795 531M795 531L795 533M841 531L839 529M787 533L785 535M795 533L797 535M781 535L783 537M785 535L783 537M797 535L795 537M783 537L783 539M795 537L795 539M797 537L795 539M849 539L847 539M851 539L849 539M853 539L851 539M813 541L813 543M847 541L847 539M813 543L813 545M821 543L819 545M849 543L847 541M813 545L811 547M815 545L813 547M817 545L815 545M819 545L817 545M851 545L849 543M811 547L813 549M813 547L813 549M853 547L851 545M813 549L813 551M855 549L853 547M813 551L811 553M857 551L855 549M859 551L857 551M829 553L827 555M861 553L859 551M827 555L827 557M915 555L917 555M827 557L825 559M877 557L875 559M879 557L877 557M915 557L917 555M825 559L823 561M873 559L871 561M875 559L873 559M881 559L879 557M913 559L915 557M923 559L925 557M839 561L837 563M871 561L869 563M883 561L881 559M885 561L883 561M921 561L923 559M833 563L831 565M837 563L835 565M869 563L867 565M887 563L885 561M919 563L921 561M835 565L833 563M867 565L867 567M917 565L919 563M915 567L917 565M851 569L849 571M913 569L915 567M849 571L849 573M849 573L847 575M873 573L873 575M873 575L873 577M873 577L871 579M871 579L871 581M921 579L923 581M871 581L869 583M881 581L879 583M923 581L923 583M869 583L869 585M879 583L877 585M905 583L907 583M907 583L909 583M909 583L911 583M911 583L913 583M913 583L915 585M923 583L925 585M869 585L869 587M877 585L875 587M903 585L905 583M915 585L917 585M917 585L919 585M919 585L921 585M921 585L923 587M869 587L867 589M875 587L873 589M901 587L903 585M867 589L865 591M873 589L871 591M923 589L923 587M871 591L871 593M921 591L923 589M867 593L865 591M871 593L869 595M923 593L921 591M869 595L867 593M925 595L923 593M873 599L873 601" stroke="#000" stroke-opacity="0.15" stroke-width="1.3" stroke-linecap="round" fill="none"/><path d="M707 311L705 313M739 311L741 309M703 313L701 311M705 313L703 313M737 313L739 311M735 315L737 313M757 315L759 315M735 317L735 315M753 317L755 317M755 317L757 315M733 319L735 317M751 319L753 317M773 319L771 317M725 321L727 323M733 321L733 319M747 321L749 321M749 321L751 319M775 321L773 319M777 321L775 321M779 321L777 321M727 323L729 323M729 323L731 323M731 323L733 321M743 323L745 323M745 323L747 321M741 325L743 323M739 327L741 325M705 329L707 327M707 329L707 327M737 329L739 327M753 329L755 329M755 329L757 329M757 329L759 329M759 329L761 329M761 329L763 329M689 331L687 329M709 331L707 329M689 333L689 331M711 333L709 331M689 335L689 333M713 335L711 333M715 335L713 335M717 335L715 335M689 337L689 335M719 337L717 335M787 337L789 339M793 337L795 339M789 339L791 339M791 339L793 337M793 341L795 339M795 343L793 341M793 345L795 343M793 347L793 345M809 347L811 345M739 349L741 351M793 349L793 347M741 351L743 353M791 351L793 349M697 353L695 355M743 353L745 353M745 353L747 353M747 353L749 355M761 353L763 351M695 355L693 357M699 355L697 353M701 355L699 355M703 355L701 355M705 355L703 355M707 355L705 355M709 355L707 355M727 357L729 359M657 359L655 361M659 359L657 359M729 359L727 361M813 359L815 359M655 361L653 359M661 361L659 359M727 361L725 363M811 361L813 359M813 361L815 359M725 363L725 365M739 363L741 361M809 363L811 361M815 363L813 361M725 365L725 367M737 365L739 363M807 365L809 363M815 365L815 363M725 367L725 369M735 367L737 365M807 367L807 365M815 367L815 365M675 369L673 371M677 369L675 369M695 369L693 367M725 369L727 371M733 369L735 367M817 369L815 367M671 371L669 373M673 371L671 371M697 371L695 369M703 371L701 373M727 371L729 371M729 371L731 371M731 371L733 369M749 371L747 369M815 371L817 369M825 371L827 373M847 371L849 369M669 373L669 375M699 373L697 371M701 373L699 373M705 373L703 371M743 373L745 371M751 373L749 371M813 373L815 371M827 373L829 375M845 373L847 371M879 373L881 373M881 373L883 375M669 375L667 377M707 375L705 373M745 375L743 373M815 375L813 373M829 375L831 377M843 375L845 373M877 375L879 373M883 375L883 377M667 377L665 379M707 377L707 375M743 377L745 375M841 377L843 375M877 377L877 375M883 377L883 379M893 377L895 379M665 379L663 381M709 379L707 377M741 379L743 377M781 379L779 381M783 379L781 379M839 379L841 377M871 379L873 379M873 379L875 379M875 379L877 377M883 379L883 381M895 379L895 381M663 381L661 383M737 381L739 381M739 381L741 379M781 381L779 381M785 381L783 379M837 381L839 379M883 381L885 383M661 383L659 385M689 383L687 385M725 383L727 383M727 383L729 385M735 383L737 381M783 383L781 381M787 383L785 381M789 383L787 383M791 383L789 383M835 383L837 381M883 383L885 383M659 385L657 387M681 385L679 387M683 385L681 385M685 385L683 385M687 385L685 385M729 385L731 385M731 385L733 385M733 385L735 383M785 385L783 383M881 385L883 383M657 387L657 389M787 387L785 385M879 387L881 385M657 389L659 391M757 389L759 389M759 389L761 389M789 389L787 387M877 389L879 387M755 391L757 389M791 391L789 389M815 391L817 391M817 391L819 391M819 391L821 389M875 391L877 389M913 391L915 389M691 393L689 395M753 393L755 391M791 393L791 391M813 393L815 391M873 393L875 391M911 393L913 391M687 395L685 393M689 395L687 395M693 395L691 393M773 395L773 393M789 395L791 393M811 395L813 393M871 395L873 393M909 395L911 393M665 397L663 395M669 397L667 399M695 397L693 395M775 397L773 395M789 397L789 395M809 397L811 395M909 397L909 395M923 397L923 395M667 399L665 397M695 399L695 397M729 399L731 401M777 399L775 397M789 399L789 397M911 399L909 397M923 399L923 397M697 401L695 399M731 401L729 403M779 401L777 399M791 401L789 399M813 401L815 403M855 401L853 403M913 401L911 399M923 401L923 399M699 403L697 401M729 403L727 405M735 403L733 405M777 403L779 401M793 403L791 401M811 403L813 401M815 403L817 405M851 403L849 405M853 403L851 403M911 403L913 401M699 405L699 403M705 405L703 407M727 405L725 407M733 405L731 407M775 405L777 403M809 405L811 403M817 405L819 407M849 405L847 405M879 405L881 405M881 405L883 407M701 407L699 405M703 407L701 407M725 407L723 409M731 407L729 409M773 407L775 405M809 407L809 405M849 407L847 405M851 407L849 405M883 407L885 409M677 409L675 411M723 409L721 411M729 409L727 411M757 409L755 411M775 409L773 407M807 409L809 407M851 409L849 407M853 409L851 407M885 409L885 411M675 411L673 411M679 411L677 409M721 411L721 413M727 411L725 413M759 411L757 409M777 411L775 409M805 411L807 409M853 411L851 409M855 411L853 409M885 411L887 413M893 411L895 411M895 411L897 413M665 413L665 411M681 413L679 411M721 413L723 415M725 413L723 415M761 413L759 411M779 413L777 411M781 413L779 413M853 413L853 411M855 413L853 411M857 413L855 411M887 413L889 415M891 413L893 411M943 413L941 411M667 415L665 413M683 415L681 413M725 415L723 417M763 415L761 413M855 415L853 413M857 415L855 413M889 415L891 413M945 415L943 413M667 417L667 415M677 417L675 415M685 417L683 415M727 417L725 415M763 417L763 415M851 417L851 415M857 417L855 415M859 417L857 415M947 417L945 415M679 419L677 417M723 419L721 419M729 419L727 417M733 419L731 421M765 419L763 417M833 419L835 421M853 419L851 417M859 419L857 417M861 419L859 417M931 419L933 419M933 419L935 421M947 419L947 417M681 421L679 419M719 421L717 419M725 421L723 419M731 421L729 419M765 421L765 419M835 421L837 423M855 421L853 419M861 421L859 419M863 421L861 419M867 421L865 423M927 421L929 421M929 421L931 419M949 421L947 419M719 423L719 421M727 423L725 421M765 423L765 421M797 423L799 423M799 423L801 425M837 423L839 425M857 423L855 421M863 423L861 421M865 423L863 421M925 423L927 421M933 423L935 421M949 423L949 421M719 425L719 423M729 425L727 423M765 425L765 423M795 425L797 423M801 425L803 427M839 425L841 427M859 425L857 423M865 425L863 423M921 425L923 425M923 425L925 423M931 425L933 423M951 425L949 423M967 425L969 427M767 427L765 425M793 427L795 425M803 427L805 429M841 427L843 427M843 427L845 427M861 427L859 425M867 427L865 425M889 427L891 425M893 427L891 425M919 427L921 425M929 427L931 425M945 427L947 427M947 427L949 427M949 427L951 425M977 427L975 429M979 427L977 427M981 427L979 427M791 429L793 427M805 429L807 429M807 429L809 429M861 429L861 427M887 429L889 427M895 429L893 427M919 429L919 427M929 429L929 427M975 429L973 431M655 431L653 429M745 431L747 431M747 431L749 431M789 431L791 429M859 431L861 429M885 431L887 429M897 431L895 429M917 431L919 429M927 431L929 429M657 433L655 431M787 433L789 431M859 433L859 431M885 433L885 431M899 433L897 431M927 433L927 431M655 435L657 433M821 435L821 437M861 435L859 433M899 435L899 433M923 435L925 435M925 435L927 433M657 437L655 435M811 437L813 435M821 437L821 439M863 437L861 435M899 437L899 435M921 437L923 435M659 439L657 437M821 439L821 441M861 439L863 437M921 439L921 437M767 441L765 443M921 441L921 439M765 443L763 445M939 443L941 445M951 443L953 443M759 445L757 447M763 445L761 447M941 445L943 447M947 445L949 445M949 445L951 443M979 445L981 443M711 447L709 447M757 447L755 447M761 447L759 445M791 447L793 449M839 447L837 445M943 447L945 447M945 447L947 445M949 447L951 445M977 447L979 445M697 449L695 447M711 449L709 447M757 449L755 447M793 449L795 449M795 449L797 449M797 449L799 449M799 449L801 451M841 449L839 447M883 449L881 451M949 449L949 447M975 449L977 447M699 451L697 449M711 451L711 449M759 451L757 449M821 451L823 451M843 451L841 449M881 451L879 453M949 451L949 449M977 451L975 449M713 453L711 451M747 453L749 455M761 453L759 451M799 453L801 451M819 453L821 451M845 453L843 451M879 453L881 455M949 453L949 451M715 455L713 453M763 455L761 453M769 455L767 457M797 455L799 453M817 455L819 453M843 455L845 453M873 455L873 453M875 455L873 453M881 455L879 457M951 455L949 453M683 457L681 459M717 457L715 455M719 457L717 457M727 457L725 459M765 457L763 455M767 457L765 457M795 457L797 455M815 457L817 455M857 457L855 459M877 457L875 455M879 457L877 457M883 457L881 455M951 457L951 455M953 457L951 455M681 459L679 461M721 459L719 457M723 459L721 459M725 459L723 459M793 459L795 457M855 459L853 461M881 459L879 457M907 459L905 461M945 459L947 459M947 459L949 459M949 459L951 457M679 461L677 463M795 461L793 459M853 461L851 463M883 461L881 459M903 461L905 463M905 461L905 463M995 461L997 461M677 463L677 465M795 463L795 461M851 463L851 465M853 463L851 465M885 463L883 461M905 463L907 465M993 463L995 461M677 465L675 467M737 465L739 467M795 465L795 463M817 465L819 463M887 465L885 463M907 465L909 467M925 465L925 467M985 465L987 465M987 465L989 465M989 465L991 465M991 465L993 463M665 467L665 469M675 467L673 469M735 467L737 465M739 467L741 467M767 467L769 467M769 467L771 469M793 467L795 465M819 467L817 465M909 467L911 469M925 467L923 469M665 469L663 471M673 469L671 471M689 469L689 471M741 469L741 467M743 469L741 467M765 469L767 467M771 469L773 471M817 469L819 467M911 469L913 471M961 469L963 467M663 471L661 473M671 471L671 473M689 471L689 473M743 471L741 469M745 471L743 469M773 471L775 473M817 471L817 469M865 471L863 471M959 471L961 469M961 471L961 469M661 473L659 473M671 473L673 475M689 473L691 475M745 473L743 471M773 473L775 473M815 473L817 471M959 473L959 471M963 473L961 471M673 475L673 477M691 475L691 477M747 475L745 473M771 475L773 473M815 475L815 473M913 475L915 473M961 475L959 473M965 475L963 473M691 477L693 479M745 477L747 475M769 477L771 475M809 477L811 479M813 477L815 475M913 477L913 475M961 477L961 475M967 477L965 475M989 477L991 477M991 477L993 475M693 479L691 481M745 479L745 477M767 479L769 477M811 479L813 477M913 479L913 477M937 479L935 481M951 479L953 479M953 479L955 479M955 479L957 481M961 479L961 477M683 481L681 483M687 481L685 483M691 481L689 483M697 481L697 483M765 481L767 479M879 481L877 483M911 481L913 479M935 481L933 483M957 481L959 481M959 481L961 479M675 483L673 485M677 483L675 483M681 483L679 485M685 483L683 481M689 483L687 481M765 483L765 481M877 483L877 485M907 483L909 483M909 483L911 481M933 483L931 485M671 485L669 483M673 485L671 485M679 485L677 483M765 485L765 483M877 485L875 487M931 485L929 487M767 487L765 485M929 487L927 489M767 489L767 487M889 489L887 491M891 489L889 489M927 489L925 491M767 491L767 489M789 491L791 489M887 491L885 493M925 491L923 493M959 491L957 493M765 493L767 491M787 493L789 491M793 493L795 491M827 493L829 493M885 493L883 493M923 493L921 495M957 493L955 495M785 495L787 493M791 495L793 493M825 495L827 493M955 495L957 497M823 497L825 495M957 497L957 499M821 499L823 497M857 499L855 499M859 499L857 499M957 499L955 501M819 501L821 499M859 501L857 499M861 501L859 499M909 501L911 501M911 501L913 501M913 501L915 501M915 501L917 503M947 501L949 503M955 501L955 503M973 501L971 503M981 501L983 503M1005 501L1007 503M819 503L819 501M861 503L859 501M863 503L861 501M865 503L863 503M917 503L919 503M919 503L921 503M921 503L923 501M949 503L951 503M951 503L953 505M955 503L953 505M971 503L969 505M983 503L983 505M997 503L999 505M1001 503L1003 503M1003 503L1005 501M1007 503L1009 505M1011 503L1013 503M819 505L819 503M863 505L861 503M953 505L953 507M969 505L969 507M983 505L985 507M999 505L1001 503M1009 505L1011 503M817 507L819 505M863 507L863 505M953 507L951 509M969 507L969 509M979 507L977 509M985 507L983 509M813 509L815 509M815 509L817 507M951 509L951 511M969 509L969 511M977 509L975 511M981 509L979 507M983 509L981 509M969 511L967 513M975 511L973 513M885 513L887 513M959 513L957 515M967 513L967 515M973 513L971 515M853 515L853 513M855 515L853 513M881 515L883 515M883 515L885 513M885 515L887 513M957 515L955 517M967 515L965 517M973 515L971 515M999 515L1001 517M1005 515L1007 515M1007 515L1009 515M1009 515L1011 517M855 517L853 515M857 517L855 515M859 517L857 517M885 517L885 515M965 517L963 519M975 517L973 515M1001 517L1003 517M1003 517L1005 515M1011 517L1013 519M825 519L827 517M833 519L831 519M855 519L855 517M861 519L859 517M887 519L885 517M889 519L887 519M891 519L889 519M963 519L961 521M977 519L975 517M1013 519L1013 521M863 521L861 519M865 521L863 521M893 521L891 519M913 521L915 521M961 521L959 523M979 521L977 519M1013 521L1015 523M867 523L865 521M895 523L893 521M911 523L913 521M959 523L957 525M979 523L979 521M867 525L867 523M893 525L895 523M907 525L909 525M909 525L911 523M957 525L957 527M977 525L979 523M867 527L867 525M957 527L955 529M979 527L977 525M839 529L837 527M869 529L867 527M955 529L953 531M981 529L979 527M871 531L869 529M935 531L937 533M953 531L951 533M873 533L871 531M937 533L939 535M951 533L949 535M997 533L999 533M999 533L1001 535M995 535L997 533M1001 535L1003 537M901 537L903 535M931 537L933 539M993 537L995 535M855 539L853 539M899 539L901 537M933 539L935 539M935 539L937 537M893 541L895 543M901 541L899 539M895 543L897 545M899 543L901 541M979 543L979 545M897 545L899 543M921 545L923 547M979 545L979 547M895 547L897 545M923 547L925 549M927 547L929 547M979 547L979 549M981 547L979 549M1005 547L1007 547M1007 547L1009 547M925 549L927 547M927 549L929 547M979 549L977 551M983 549L981 547M923 551L925 551M925 551L927 549M977 551L975 553M985 551L983 549M919 553L921 553M921 553L923 551M975 553L973 555M917 555L919 553M927 555L929 553M973 555L971 557M925 557L927 555M971 557L969 559M969 559L967 561M967 561L965 563M975 561L973 563M977 561L975 561M965 563L963 565M973 563L971 565M979 563L977 561M945 565L947 567M963 565L961 567M971 565L969 567M981 565L979 563M947 567L949 569M961 567L959 569M969 567L967 569M949 569L951 571M967 569L965 571M951 571L951 573M965 571L963 573M951 573L951 575M963 573L961 575M951 575L953 577M947 593L949 593M949 593L951 593M951 593L953 591" stroke="#000" stroke-opacity="0.25" stroke-width="1.3" stroke-linecap="round" fill="none"/><path d="M831 141L829 143M827 143L825 145M829 143L827 143M819 145L817 147M821 145L819 145M823 145L821 145M825 145L823 145M817 147L815 149M815 149L813 151M865 149L867 151M813 151L811 153M867 151L869 151M869 151L871 153M811 153L813 155M871 153L869 155M813 155L815 157M869 155L867 157M919 155L919 153M815 157L815 159M867 157L869 159M917 157L919 155M869 159L871 161M915 159L917 157M871 161L873 163M915 161L915 159M873 163L875 163M875 163L877 165M879 163L881 165M903 163L905 163M905 163L907 165M913 163L915 161M877 165L879 163M881 165L883 167M901 165L903 163M907 165L909 165M909 165L911 165M911 165L913 163M883 167L885 167M885 167L887 167M887 167L889 169M893 167L895 169M899 167L901 165M889 169L891 169M891 169L893 167M895 169L897 169M897 169L899 167M813 171L815 171M815 171L817 171M817 171L819 171M819 171L821 171M805 173L807 175M811 173L813 171M821 173L821 171M803 175L805 173M807 175L809 175M809 175L811 173M821 175L821 173M797 177L799 177M799 177L801 177M801 177L803 175M819 177L821 175M849 177L851 179M785 179L787 181M795 179L797 177M817 179L819 177M851 179L853 181M787 181L789 183M791 181L793 181M793 181L795 179M815 181L817 179M853 181L855 183M691 183L691 181M789 183L791 181M791 183L793 181M813 183L815 181M855 183L857 185M691 185L691 183M789 185L791 183M811 185L813 183M857 185L855 187M901 185L903 185M903 185L905 187M689 187L691 185M721 187L723 185M723 187L723 185M727 187L725 189M729 187L727 187M787 187L789 185M809 187L811 185M855 187L853 189M899 187L901 185M905 187L905 189M687 189L689 187M721 189L721 187M725 189L723 187M731 189L729 187M785 189L787 187M807 189L809 187M853 189L851 191M895 189L897 189M897 189L899 187M905 189L907 191M721 191L721 189M733 191L731 189M737 191L735 193M739 191L737 191M741 191L739 191M805 191L807 189M851 191L849 193M907 191L909 193M719 193L721 191M735 193L733 191M803 193L805 191M849 193L849 195M909 193L911 195M919 193L921 195M717 195L719 193M849 195L851 197M911 195L913 197M915 195L917 195M917 195L919 193M715 197L717 195M849 197L851 197M913 197L915 195M847 199L849 197M845 201L847 199M843 203L845 201M833 205L835 207M841 205L843 203M831 207L833 205M835 207L837 207M837 207L839 207M839 207L841 205M829 209L831 207M827 211L829 209M825 213L827 211M823 215L825 213M821 217L823 215M819 219L821 217M773 221L773 223M817 221L819 219M773 223L773 225M815 223L817 221M773 225L771 227M815 225L815 223M771 227L771 229M817 227L815 225M771 229L773 231M817 229L817 227M725 231L727 231M727 231L729 231M729 231L731 233M739 231L739 233M773 231L773 233M815 231L817 229M731 233L733 235M739 233L739 235M773 233L775 235M733 235L735 237M739 235L737 237M775 235L777 235M777 235L779 237M691 237L693 239M735 237L737 237M737 237L739 239M779 237L781 239M693 239L695 241M739 239L741 241M781 239L781 241M695 241L697 243M741 241L741 243M781 241L781 243M845 241L847 243M697 243L695 245M741 243L741 245M781 243L779 245M847 243L849 245M695 245L693 247M741 245L743 247M779 245L779 247M849 245L851 247M693 247L691 249M743 247L745 249M851 247L853 249M691 249L691 251M745 249L743 251M781 249L779 247M853 249L851 251M691 251L691 253M743 251L741 253M783 251L781 249M851 251L851 253M867 251L869 253M691 253L693 255M741 253L739 255M785 253L783 251M851 253L853 255M865 253L867 251M869 253L871 255M693 255L695 257M739 255L741 257M787 255L785 253M789 255L787 255M793 255L791 257M795 255L793 255M853 255L853 257M863 255L865 253M871 255L873 257M695 257L697 259M741 257L741 259M791 257L789 255M797 257L795 255M853 257L855 259M863 257L863 255M873 257L873 259M799 259L797 257M855 259L857 259M857 259L859 259M859 259L861 259M861 259L863 257M873 259L871 261M801 261L799 259M859 261L861 259M871 261L873 263M803 263L801 261M859 263L859 261M873 263L875 263M805 265L803 263M859 265L859 263M875 265L877 265M807 267L805 265M851 267L853 267M853 267L855 267M855 267L857 267M857 267L859 265M873 267L875 265M809 269L807 267M849 269L851 267M871 269L873 267M811 271L809 269M847 271L849 269M869 271L871 269M813 273L811 271M815 273L813 273M845 273L847 271M845 275L845 273M751 515L751 517M751 517L753 519M753 519L751 521M751 521L749 523M749 523L747 525M747 525L749 527M749 527L751 529M751 529L753 531M753 531L751 533M749 533L747 535M751 533L749 533M793 545L791 547M791 547L789 549M789 549L787 551M787 551L785 553M785 553L783 555M783 555L781 557M807 555L805 557M781 557L779 559M805 557L805 559M779 559L777 561M805 559L803 561M803 561L803 563M803 563L805 565M827 569L827 571M829 573L827 571M831 575L829 573M833 577L831 575M843 577L841 579M845 577L843 577M835 579L833 577M839 579L837 581M841 579L839 579M847 579L845 577M837 581L835 579M849 581L847 579M851 583L849 581M853 583L851 583M855 585L853 583M857 587L855 585M859 589L857 587M861 591L859 589M863 593L861 591" stroke="#000" stroke-opacity="0.09" stroke-width="1.8" stroke-linecap="round" fill="none"/><path d="M697 259L699 261M741 259L739 261M699 261L699 263M739 261L741 263M699 263L697 265M741 263L741 265M697 265L699 267M741 265L743 267M699 267L701 269M701 269L703 271M681 271L681 273M703 271L705 273M681 273L679 275M705 273L705 275M675 275L673 277M679 275L677 277M705 275L705 277M663 277L661 279M665 277L663 277M673 277L671 279M677 277L675 275M705 277L705 279M661 279L659 281M667 279L665 277M669 279L667 279M671 279L669 279M705 279L705 281M729 279L727 277M659 281L657 283M705 281L705 283M731 281L729 279M649 283L647 285M651 283L649 283M653 283L651 283M655 283L653 283M657 283L655 283M733 283L731 281M635 285L633 283M647 285L647 287M735 285L733 283M637 287L635 285M647 287L647 289M735 287L735 285M639 289L637 287M647 289L645 291M737 289L735 287M641 291L639 289M645 291L643 293M739 291L737 289M643 293L641 291M741 293L739 291M739 295L741 293M685 297L685 295M737 297L739 295M763 297L761 295M767 297L765 299M687 299L685 297M735 299L737 297M765 299L763 297M689 301L687 299M691 301L689 301M693 301L691 301M695 301L693 301M737 301L735 299M697 303L695 301M739 303L737 301M843 303L841 305M699 305L697 303M741 305L739 303M823 305L821 305M827 305L825 307M841 305L839 307M701 307L699 305M825 307L823 305M829 307L827 305M831 307L829 307M839 307L837 309M895 307L897 307M897 307L899 307M899 307L901 307M901 307L903 307M903 307L905 309M907 307L909 309M701 309L701 307M833 309L831 307M837 309L835 311M893 309L895 307M905 309L907 307M909 309L911 311M667 311L665 313M669 311L667 311M671 311L669 311M673 311L671 311M699 311L701 309M803 311L803 309M835 311L833 309M891 311L893 309M911 311L913 311M913 311L915 311M915 311L917 313M665 313L663 315M675 313L673 311M765 313L767 311M805 313L803 311M889 313L891 311M917 313L919 313M919 313L921 313M921 313L923 313M923 313L925 315M659 315L659 313M661 315L659 313M663 315L661 315M677 315L675 313M761 315L763 315M763 315L765 313M807 315L805 313M925 315L927 315M659 317L659 315M809 317L807 315M927 317L927 315M659 319L659 317M809 319L809 317M925 319L927 317M661 321L659 319M811 321L809 319M925 321L925 319M663 323L661 321M811 323L811 321M919 323L921 323M921 323L923 323M923 323L925 321M661 325L663 323M811 325L811 323M917 325L919 323M663 327L661 325M811 327L811 325M915 327L917 325M661 329L663 327M809 329L811 327M811 329L811 327M913 329L915 327M663 331L661 329M807 331L809 329M811 331L811 329M913 331L913 329M665 333L663 331M801 333L803 333M803 333L805 333M805 333L807 331M813 333L811 331M915 333L913 331M667 335L665 333M799 335L801 333M811 335L813 333M843 335L843 333M915 335L915 333M669 337L667 335M811 337L811 335M841 337L843 335M915 337L915 335M671 339L669 337M813 339L811 337M915 339L915 337M673 341L671 339M813 341L813 339M903 341L905 341M905 341L907 343M915 341L915 339M675 343L673 341M813 343L813 341M901 343L903 341M907 343L909 343M909 343L911 343M911 343L913 343M913 343L915 341M811 345L813 343M895 345L897 347M899 345L901 343M813 347L811 345M897 347L899 345M815 349L813 347M817 351L815 349M931 351L933 349M929 353L931 351M927 355L929 353M927 357L927 355M925 359L927 357M853 365L855 367M855 367L857 367M857 367L859 367M903 381L905 383M945 395L947 393M943 397L945 395M941 399L943 397M941 401L941 399M943 403L941 401M941 405L943 403M749 511L751 513M751 513L751 515M837 529L837 527M839 531L837 529M841 533L839 531M843 535L841 533M845 537L843 535M795 539L795 541M847 539L845 537M795 541L795 543M795 543L793 545M867 567L865 569M865 569L863 571M863 571L863 573M863 573L861 575M847 575L845 577M849 575L847 575M851 575L849 575M855 575L853 577M857 575L855 575M859 575L857 575M861 575L859 575M945 575L947 575M853 577L851 575M937 577L939 577M939 577L941 577M941 577L943 577M943 577L945 575M931 579L933 579M933 579L935 579M935 579L937 577M929 581L931 579M927 583L929 581M925 585L927 583M923 587L925 585M865 591L863 593" stroke="#000" stroke-opacity="0.19" stroke-width="1.8" stroke-linecap="round" fill="none"/><path d="M701 313L699 311M703 315L701 313M703 317L703 315M703 319L703 317M705 321L703 319M707 323L705 321M707 325L707 323M707 327L707 325M797 337L799 335M795 339L797 337M675 345L675 343M763 345L763 343M673 347L675 345M763 347L763 345M671 349L673 347M765 349L763 347M671 351L671 349M683 351L681 353M685 351L683 351M757 351L759 351M759 351L761 351M761 351L763 351M763 351L765 349M673 353L671 351M675 353L673 353M681 353L679 355M687 353L685 351M755 353L757 351M817 353L817 351M677 355L675 353M679 355L677 355M689 355L687 353M747 355L749 355M749 355L751 355M751 355L753 355M753 355L755 353M817 355L817 353M691 357L689 355M693 357L691 357M745 357L747 355M751 357L753 355M817 357L817 355M695 359L693 357M743 359L745 357M749 359L751 357M815 359L817 357M695 361L695 359M741 361L743 359M747 361L749 359M693 363L695 361M747 363L747 361M693 365L693 363M749 365L747 363M693 367L693 365M747 367L749 365M847 367L849 369M851 367L853 365M747 369L747 367M845 369L847 367M849 369L851 367M745 371L747 369M843 371L845 369M835 373L837 373M837 373L839 375M841 373L843 371M833 375L835 373M839 375L841 373M765 377L765 375M831 377L833 375M767 379L765 377M829 379L831 377M769 381L767 379M779 381L777 383M827 381L829 379M895 381L897 383M665 383L663 385M667 383L665 383M669 383L667 383M771 383L769 381M773 383L771 383M775 383L773 383M777 383L775 383M825 383L827 381M885 383L887 383M887 383L889 383M889 383L891 383M891 383L893 383M893 383L895 381M897 383L899 385M901 383L903 381M905 383L907 383M663 385L661 387M671 385L669 383M773 385L771 383M823 385L825 383M899 385L901 383M907 385L907 383M661 387L659 389M671 387L671 385M679 387L677 389M681 387L679 387M775 387L773 385M821 387L823 385M905 387L907 385M659 389L659 391M673 389L671 387M675 389L673 389M677 389L675 389M683 389L681 387M777 389L775 387M821 389L821 387M903 389L905 387M659 391L657 393M683 391L683 389M775 391L777 389M821 391L821 389M901 391L903 389M685 393L683 391M773 393L775 391M823 393L821 391M899 393L901 391M825 395L823 393M897 395L899 393M825 397L825 395M897 397L897 395M823 399L825 397M899 399L897 397M823 401L823 399M899 401L899 399M823 403L823 401M845 403L843 401M901 403L899 401M823 405L823 403M847 405L845 403M901 405L901 403M819 407L821 407M821 407L823 405M901 407L901 405M939 407L941 405M901 409L901 407M941 409L939 407M901 411L901 409M941 411L941 409M851 413L849 411M895 413L897 413M897 413L899 415M901 413L901 411M941 413L941 411M723 415L723 417M853 415L851 413M893 415L895 413M899 415L901 413M939 415L941 413M709 417L707 419M711 417L709 417M715 417L713 419M723 417L721 419M751 417L751 415M855 417L853 415M891 417L893 415M939 417L939 415M705 419L703 421M707 419L705 419M713 419L711 417M717 419L715 417M719 419L717 419M721 419L719 419M753 419L751 417M857 419L855 417M889 419L891 417M937 419L939 417M703 421L701 423M755 421L753 419M859 421L857 419M889 421L889 419M935 421L937 419M701 423L699 425M755 423L755 421M861 423L859 421M891 423L889 421M699 425L697 427M753 425L755 423M863 425L861 423M891 425L891 423M697 427L695 429M753 427L753 425M865 427L863 425M967 427L969 427M969 427L971 429M651 429L649 429M653 429L651 429M695 429L693 431M751 429L753 427M809 429L811 431M867 429L865 427M965 429L967 427M971 429L973 431M693 431L691 433M749 431L751 429M811 431L813 433M869 431L867 429M963 431L965 429M973 431L975 433M691 433L691 435M751 433L749 431M813 433L813 435M871 433L869 431M961 433L963 431M975 433L975 435M691 435L689 437M749 435L751 433M813 435L815 437M873 435L871 433M961 435L961 433M975 435L975 437M689 437L687 437M751 437L749 435M815 437L817 437M817 437L819 439M871 437L873 435M959 437L961 435M975 437L977 439M689 439L687 437M701 439L699 441M703 439L701 439M751 439L751 437M819 439L821 441M873 439L871 437M957 439L959 437M975 439L977 439M689 441L689 439M699 441L699 443M705 441L703 439M751 441L751 439M821 441L821 443M871 441L873 439M955 441L957 439M973 441L975 439M691 443L689 441M699 443L699 445M705 443L705 441M753 443L751 441M821 443L821 445M869 443L871 441M953 443L955 441M971 443L973 441M693 445L691 443M699 445L697 447M707 445L705 443M753 445L753 443M821 445L819 447M869 445L869 443M951 445L953 443M969 445L971 443M695 447L693 445M697 447L695 447M709 447L707 445M753 447L753 445M755 447L753 445M819 447L821 449M869 447L869 445M967 447L969 445M753 449L753 447M815 449L817 449M817 449L819 447M821 449L823 451M871 449L869 447M967 449L967 447M751 451L753 449M801 451L803 453M813 451L815 449M873 451L871 449M965 451L967 449M751 453L751 451M803 453L805 455M811 453L813 451M873 453L873 451M963 453L965 451M749 455L751 453M805 455L807 455M807 455L809 455M809 455L811 453M961 455L963 453M747 457L749 455M963 457L961 455M745 459L747 457M963 459L963 457M743 461L745 459M963 461L963 459M741 463L743 461M965 463L963 461M743 465L741 463M851 465L849 467M853 465L851 465M965 465L965 463M741 467L743 465M847 467L845 467M849 467L847 467M855 467L853 465M963 467L965 465M857 469L855 467M919 469L921 471M923 469L925 471M859 471L857 469M863 471L861 473M913 471L915 473M917 471L919 469M921 471L923 469M925 471L927 473M775 473L777 475M861 473L859 471M865 473L863 471M915 473L917 471M927 473L927 475M777 475L779 477M865 475L865 473M927 475L925 477M673 477L671 479M779 477L781 479M841 477L839 475M863 477L865 475M925 477L923 479M671 479L669 481M781 479L783 481M843 479L841 477M863 479L863 477M923 479L921 481M669 481L669 483M783 481L783 483M845 481L843 479M863 481L863 479M921 481L921 483M669 483L667 485M783 483L783 485M847 483L845 481M861 483L863 481M921 483L919 485M667 485L667 487M783 485L783 487M849 485L847 483M861 485L861 483M865 485L863 487M867 485L865 485M869 485L867 485M919 485L917 487M667 487L669 489M783 487L781 489M821 487L823 487M823 487L825 489M851 487L849 485M863 487L861 485M871 487L869 485M873 487L871 487M875 487L873 487M917 487L915 489M669 489L669 491M781 489L783 491M789 489L791 489M791 489L793 489M793 489L795 491M819 489L821 487M825 489L827 491M853 489L851 487M877 489L875 487M879 489L877 489M915 489L917 491M669 491L671 493M783 491L785 491M785 491L787 491M787 491L789 489M795 491L797 493M799 491L801 491M801 491L803 493M817 491L819 489M827 491L829 493M855 491L853 489M881 491L879 489M917 491L919 493M797 493L799 491M803 493L805 495M815 493L817 491M853 493L855 491M883 493L881 491M919 493L921 495M805 495L807 497M813 495L815 493M833 495L835 493M853 495L853 493M885 495L883 493M921 495L919 497M807 497L809 497M809 497L811 497M811 497L813 495M833 497L833 495M853 497L853 495M887 497L885 495M919 497L921 499M831 499L833 497M855 499L853 497M887 499L887 497M921 499L923 501M833 501L831 499M857 501L855 499M889 501L887 499M923 501L925 503M831 503L833 501M855 503L857 501M891 503L889 501M925 503L927 505M831 505L831 503M853 505L855 503M889 505L891 503M927 505L929 507M831 507L831 505M851 507L853 505M891 507L889 505M833 509L831 507M851 509L851 507M891 509L891 507M831 511L833 509M851 511L851 509M889 511L891 509M951 511L951 513M831 513L831 511M853 513L851 511M887 513L889 511M951 513L953 515M829 515L831 513M953 515L955 517M971 515L969 517M827 517L829 515M925 517L927 517M927 517L929 517M929 517L931 517M931 517L933 517M933 517L935 519M955 517L953 519M969 517L967 519M829 519L827 517M831 519L829 519M917 519L919 521M921 519L923 519M923 519L925 517M935 519L937 519M937 519L939 521M943 519L945 519M953 519L953 521M967 519L965 521M833 521L831 519M915 521L917 519M919 521L921 519M939 521L941 521M941 521L943 519M965 521L963 523M835 523L833 521M913 523L915 521M963 523L961 525M837 525L835 523M911 525L913 523M961 525L959 527M837 527L837 525M909 527L911 525M959 527L961 529M907 529L909 527M961 529L961 531M907 531L907 529M943 531L945 533M961 531L959 533M905 533L907 531M941 533L943 531M945 533L947 533M959 533L957 535M903 535L905 533M939 535L941 533M957 535L955 537M937 537L939 535M955 537L953 539M1003 537L1005 539M937 539L937 537M1005 539L1007 539M1007 539L1009 541M939 541L937 539M1009 541L1009 543M939 543L939 541M1009 543L1009 545M937 545L939 543M1009 545L1009 547M929 547L931 549M935 547L937 545M1009 547L1011 549M931 549L933 549M933 549L935 547M931 551L933 549M929 553L931 551M947 575L949 577M949 577L951 577M951 577L953 577M953 577L955 579M959 577L961 575M955 579L957 579M957 579L959 577" stroke="#000" stroke-opacity="0.31" stroke-width="1.8" stroke-linecap="round" fill="none"/><path d="M809 159L807 157M811 159L809 159M815 159L813 161M813 161L811 159M817 161L815 159M819 163L817 161M821 165L819 163M823 167L821 165M823 169L823 167M821 171L823 169M851 197L853 199M853 199L855 201M855 201L857 203M871 201L873 201M873 201L875 203M919 201L921 199M857 203L859 205M869 203L871 201M875 203L877 203M877 203L879 205M917 203L919 201M859 205L861 207M869 205L869 203M879 205L881 207M917 205L917 203M861 207L863 209M869 207L869 205M881 207L883 209M917 207L917 205M863 209L865 211M871 209L869 207M883 209L883 211M915 209L917 207M865 211L867 213M871 211L871 209M883 211L881 213M913 211L915 209M867 213L869 213M869 213L871 211M881 213L883 215M907 213L909 213M909 213L911 215M913 213L913 211M883 215L885 217M905 215L907 213M911 215L913 213M885 217L887 219M903 217L905 215M887 219L889 221M901 219L903 217M889 221L891 223M901 221L901 219M891 223L893 223M893 223L895 223M895 223L897 225M899 223L901 221M897 225L899 223M779 247L777 249M775 249L773 251M777 249L775 249M769 251L767 253M771 251L769 251M773 251L771 251M777 251L775 249M767 253L765 255M779 253L777 251M765 255L763 257M781 255L779 253M763 257L761 259M783 257L781 255M761 259L759 261M785 259L783 257M787 261L785 259M875 263L877 265M877 265L879 267M879 267L879 269M879 269L881 271M881 271L883 273M883 273L883 275M883 275L883 277M883 277L885 279M885 279L887 281M887 281L889 283M909 281L911 283M889 283L891 285M907 283L909 281M911 283L913 285M891 285L893 285M893 285L895 285M895 285L897 285M897 285L899 285M899 285L901 287M905 285L907 283M913 285L915 285M901 287L903 287M903 287L905 285M777 561L775 559M779 561L777 561M781 561L779 561M793 561L791 563M783 563L781 561M785 563L783 563M791 563L789 565M795 563L793 561M787 565L785 563M789 565L787 565M797 565L795 563M805 565L803 567M797 567L797 565M803 567L801 569M807 567L805 565M799 569L797 567M801 569L799 569M809 569L807 567M811 571L809 569M827 571L825 573M813 573L811 571M823 573L821 575M825 573L823 573M815 575L813 573M821 575L819 577M817 577L815 575M819 577L817 577" stroke="#000" stroke-opacity="0.10" stroke-width="2.4" stroke-linecap="round" fill="none"/><path d="M757 261L755 263M759 261L757 261M755 263L753 265M789 263L787 261M751 265L749 267M753 265L751 265M791 265L789 263M743 267L741 269M745 267L743 267M747 267L745 267M749 267L747 267M755 267L753 265M793 267L791 265M739 269L737 271M741 269L739 269M755 269L755 267M795 269L793 267M735 271L733 273M737 271L735 271M753 271L755 269M797 271L795 269M733 273L731 275M753 273L753 271M799 273L797 271M731 275L729 277M755 275L753 273M799 275L799 273M723 277L721 279M725 277L723 277M727 277L725 277M729 277L727 277M755 277L755 275M801 277L799 275M719 279L717 281M721 279L719 279M753 279L755 277M801 279L801 277M711 281L709 283M717 281L715 283M751 281L753 279M801 281L801 279M705 283L703 285M707 283L705 283M709 283L707 283M713 283L711 281M715 283L713 283M753 283L751 281M799 283L801 281M703 285L701 287M755 285L753 283M799 285L799 283M701 287L699 289M757 287L755 285M801 287L799 285M695 289L693 291M697 289L695 289M699 289L697 289M759 289L757 287M803 289L801 287M693 291L691 293M761 291L759 289M803 291L803 289M669 293L667 295M671 293L669 293M679 293L677 295M681 293L679 293M683 293L681 293M687 293L685 295M689 293L687 293M691 293L689 293M761 293L761 291M803 293L803 291M805 293L803 291M659 295L657 297M661 295L659 295M663 295L661 295M667 295L665 297M673 295L671 293M677 295L675 297M685 295L683 293M761 295L761 293M803 295L803 293M807 295L805 293M657 297L655 299M665 297L663 295M675 297L673 295M759 297L761 295M805 297L803 295M809 297L807 295M651 299L649 301M655 299L653 301M759 299L759 297M807 299L805 297M811 299L809 297M653 301L651 299M761 301L759 299M805 301L807 299M813 301L811 299M815 301L813 301M655 303L653 301M763 303L761 301M805 303L805 301M817 303L815 301M655 305L655 303M765 305L763 303M803 305L805 303M819 305L817 303M821 305L819 305M655 307L655 305M767 307L765 305M801 307L803 305M823 307L821 305M657 309L655 307M769 309L767 307M803 309L801 307M825 309L823 307M659 311L657 309M767 311L769 309M827 311L825 309M659 313L659 311M767 313L767 311M829 313L827 311M929 313L931 313M931 313L933 311M769 315L767 313M831 315L829 313M927 315L929 313M771 317L769 315M833 317L831 315M835 319L833 317M837 321L835 319M839 323L837 321M841 325L839 323M843 327L841 325M843 329L843 327M843 331L843 329M843 333L843 331M845 335L843 333M847 337L845 335M849 339L847 337M851 341L849 339M853 341L851 341M855 341L853 341M857 343L855 341M857 345L857 343M857 347L857 345M857 349L857 347M857 351L857 349M857 353L857 351M859 355L857 353M861 357L859 355M863 359L861 357M865 361L863 359M863 363L865 361M861 365L863 363M859 367L861 365M957 377L959 375M911 379L913 379M913 379L915 381M955 379L957 377M909 381L911 379M915 381L915 383M953 381L955 379M907 383L909 381M915 383L917 385M951 383L953 381M917 385L919 387M949 385L951 383M919 387L921 389M933 387L935 387M935 387L937 389M947 387L949 385M921 389L923 391M925 389L927 389M927 389L929 389M929 389L931 389M931 389L933 387M937 389L939 391M947 389L947 387M923 391L925 389M939 391L941 393M949 391L947 389M941 393L943 393M943 393L945 393M945 393L947 393M947 393L949 391" stroke="#000" stroke-opacity="0.21" stroke-width="2.4" stroke-linecap="round" fill="none"/><path d="M769 319L771 317M767 321L769 319M765 323L767 321M767 325L765 323M765 327L767 325M763 329L765 327M763 331L763 329M765 333L763 331M767 335L765 333M765 337L767 335M763 339L765 337M763 341L763 339M763 343L763 341M765 345L763 343M767 347L765 345M769 349L767 347M771 351L769 349M773 353L771 351M775 355L773 353M775 357L775 355M777 359L775 357M779 361L777 359M777 363L779 361M775 365L777 363M773 367L775 365M771 369L773 367M857 369L859 367M769 371L771 369M855 371L857 369M767 373L769 371M853 373L855 371M765 375L767 373M851 375L853 373M763 377L765 375M849 377L851 375M761 379L763 377M849 379L849 377M763 381L761 379M851 381L849 379M765 383L763 381M851 383L851 381M767 385L765 383M851 385L851 383M767 387L767 385M849 387L851 385M761 389L763 389M763 389L765 389M765 389L767 387M847 389L849 387M647 391L645 391M759 391L761 389M847 391L847 389M649 393L647 391M651 393L649 393M653 393L651 393M657 393L655 395M659 393L657 393M661 393L659 393M757 393L759 391M845 393L847 391M655 395L653 393M663 395L661 393M755 395L757 393M843 395L845 393M663 397L663 395M755 397L755 395M841 397L843 395M661 399L663 397M755 399L755 397M843 399L841 397M661 401L661 399M755 401L755 399M843 401L843 399M663 403L661 401M757 403L755 401M843 403L843 401M665 405L663 403M753 405L755 405M755 405L757 403M843 405L843 403M663 407L665 405M751 407L753 405M845 407L843 405M663 409L663 407M669 409L667 411M753 409L751 407M847 409L845 407M665 411L663 409M667 411L665 411M671 411L669 409M673 411L671 411M755 411L753 409M849 411L847 409M675 413L673 411M753 413L755 411M849 413L849 411M675 415L675 413M751 415L753 413M851 415L849 413M675 417L675 415M849 417L851 415M675 419L675 417M847 419L849 417M677 421L675 419M847 421L847 419M677 423L677 421M847 423L847 421M679 425L677 423M847 425L847 423M677 427L679 425M845 427L847 425M679 429L677 427M843 429L845 427M679 431L679 429M841 431L843 429M677 433L679 431M839 433L841 431M675 435L677 433M839 435L839 433M677 437L675 435M679 437L677 437M681 437L679 437M683 437L681 437M687 437L685 439M839 437L839 435M685 439L683 437M837 439L839 437M977 439L979 441M839 441L837 439M979 441L981 443M839 443L839 441M981 443L983 445M835 445L837 445M837 445L839 443M983 445L985 445M985 445L987 447M833 447L835 445M987 447L989 449M831 449L833 447M989 449L991 451M823 451L825 453M829 451L831 449M991 451L991 453M821 453L823 451M825 453L827 453M827 453L829 451M991 453L991 455M819 455L821 453M991 455L991 457M817 457L819 455M991 457L993 459M815 459L817 457M993 459L995 459M995 459L997 461M817 461L815 459M997 461L999 461M999 461L1001 461M819 463L817 461M819 465L819 463M823 465L821 467M825 465L823 465M835 465L833 467M821 467L819 465M827 467L825 465M831 467L829 469M833 467L831 467M837 467L835 465M839 467L837 467M841 467L839 467M845 467L843 469M829 469L827 467M843 469L841 467M841 471L843 469M839 473L841 471M839 475L839 473M839 477L839 475M841 479L839 477M841 481L841 479M839 483L841 481M837 485L839 483M839 487L837 485M837 489L839 487M837 491L837 489M829 493L831 493M831 493L833 493M833 493L835 493M835 493L837 491M929 507L931 509M931 509L933 511M933 511L935 511M935 511L937 513M937 513L939 513M939 513L941 515M941 515L943 517M943 517L945 519M945 519L947 519M947 519L949 519M949 519L951 519M951 519L953 521M953 521L951 523M951 523L951 525M951 525L949 527M949 527L947 529M947 529L947 531M947 531L947 533M947 533L949 535M949 535L951 537M951 537L953 539M953 539L955 541M955 541L957 543M957 543L957 545M957 545L959 547M959 547L961 549M961 549L959 551M959 551L961 553M961 553L961 555M961 555L959 557M959 557L957 559M957 559L959 561M959 561L961 563M961 563L959 565M959 565L959 567M959 567L959 569M959 569L959 571M959 571L961 573M961 573L961 575M961 575L963 577M963 577L963 579" stroke="#000" stroke-opacity="0.34" stroke-width="2.4" stroke-linecap="round" fill="none"/></g><g fill="none" stroke-linejoin="round" stroke-linecap="round" filter="url(#b1)">
<path d="M775.6 253.2L784.6 261.3L795.3 272L802.5 282.8L808 295.3L809.7 309.7L813.3 320.4L811 354" stroke="#444" stroke-width="3" opacity=".8"/>
<path d="M752.3 273.8L761.3 295.3L772 306L779.2 320.4L788.2 334.8L793 344.8L811 353.8L825.4 368L836 386L847 407.5L856 414L864 437L853.8 465.7L840.3 490" stroke="#4a4a4a" stroke-width="4" opacity=".75"/>
<path d="M840.3 490L835 511.4L840.3 533L853.8 546.3" stroke="#707070" stroke-width="4" opacity=".6"/>
<path d="M636 288L660 292L680 292L699.8 288.5L720 286L738 281L752.3 273.8L759.5 261.3L768.4 254L775.6 253.2" stroke="#262626" stroke-width="7"/>

<path d="M647 405L650 440L655 472.5L668 487.8" stroke="#444" stroke-width="5" opacity=".7"/>
<path d="M793 344.8L780.6 359L768 375L759 400L753.8 420L746.9 452L741.8 472.5" stroke="#606060" stroke-width="2.5" opacity=".8"/>
<path d="M738 279.2L741.5 300.7L738 317" stroke="#555" stroke-width="2" opacity=".7"/>
<path d="M762 258.6L764.4 238L759.6 224" stroke="#4a4a4a" stroke-width="2" opacity=".7"/>
<path d="M650 433L678 437L703.6 447L724 457L741.8 462" stroke="#555" stroke-width="3" opacity=".8"/>
<path d="M673 353L703.6 355.4L736.7 358" stroke="#6e6e6e" stroke-width="2" opacity=".6"/>
<path d="M864.5 441.5L880.6 457.6L907.5 465.7L921 473.8" stroke="#7a7a7a" stroke-width="2.5" opacity=".7"/>
<path d="M961 440L961 473.8L956 500.6L953 527.5L961 546.3L974.7 559.8" stroke="#8a8a8a" stroke-width="6" opacity=".6"/>
<path d="M800 487L813.4 495L840.3 490" stroke="#7a7a7a" stroke-width="2" opacity=".6"/>
</g>
<g filter="url(#b15x)">
<path d="M614 276L628 281L640 286L650 293L658 300L652 302L636 299L620 295L613 287Z" fill="#141414"/>
<path d="M640 287L650 297L654 318L664.6 331.8L671.8 343.7L669.4 353.3L660 360.5L652.6 366" stroke="#1e1e1e" stroke-width="8" fill="none" stroke-linejoin="round"/>
</g>
<defs><radialGradient id="dz" cx="0.5" cy="0.5" r="0.5"><stop offset="0" stop-color="#202020" stop-opacity="1"/><stop offset=".55" stop-color="#202020" stop-opacity=".9"/><stop offset="1" stop-color="#202020" stop-opacity="0"/></radialGradient></defs><ellipse cx="655" cy="392" rx="22" ry="36" fill="url(#dz)"/>
<path d="M848 110L862 123L879 128L895 131L899 139L909 146L917 149L922 157L925 167L929 176L925 184L922 194L920 207L920 217L925 227L915 235L910 245" stroke="#2a2a2a" stroke-width="18" fill="none" opacity=".75" filter="url(#b3)"/>
<path d="M765 560L800 568L830 575L860 585" stroke="#606060" stroke-width="7" fill="none" opacity=".45" filter="url(#b3)"/>
<ellipse cx="657" cy="305" rx="20" ry="24" fill="url(#dz)" opacity=".85"/>
</g></svg>
<div class="a" style="left:0;top:648px;width:1280px;height:21px;background:#efefef"></div>
<div class="a inp" style="left:2px;top:652px;width:155px;height:15px;border-color:#d0d0d0"></div>
<svg class="a" style="left:6px;top:654px" width="10" height="10" viewBox="0 0 10 10"><circle cx="4" cy="4" r="3" fill="none" stroke="#888" stroke-width="1"/><path d="M6.2 6.2L9 9" stroke="#888" stroke-width="1.2"/></svg>

<div class="a inp" style="left:708px;top:651px;width:75px;height:16px"></div>
<svg class="a" style="left:785px;top:652px" width="13" height="13" viewBox="0 0 13 13"><ellipse cx="6" cy="7" rx="4.5" ry="5" fill="#222"/><circle cx="6" cy="9" r="2" fill="#fff"/><path d="M1 2L12 11M12 2L5 6" stroke="#222" stroke-width="1.5"/></svg>

<div class="a inp" style="left:830px;top:651px;width:62px;height:16px"></div>
<svg class="a" style="left:879px;top:658px" width="7" height="4" viewBox="0 0 7 4"><path d="M0 0H7L3.5 4Z" fill="#555"/></svg>

<svg class="a" style="left:900px;top:653px" width="11" height="12" viewBox="0 0 11 12"><path d="M2.5 5V3.5Q2.5 .8 5.5 .8Q8.5 .8 8.5 3.5V5" stroke="#666" stroke-width="1.6" fill="none"/><rect x=".5" y="5" width="10" height="7" rx="1" fill="#666"/></svg>

<div class="a inp" style="left:970px;top:651px;width:61px;height:16px"></div>
<svg class="a" style="left:1020px;top:652px" width="10" height="14" viewBox="0 0 10 14"><path d="M.5 0V14" stroke="#ddd"/><path d="M2.5 5.5L5 2.5L7.5 5.5M2.5 8.5L5 11.5L7.5 8.5" stroke="#666" stroke-width="1.2" fill="none"/></svg>

<div class="a inp" style="left:1065px;top:651px;width:60px;height:16px"></div>
<svg class="a" style="left:1113px;top:652px" width="10" height="14" viewBox="0 0 10 14"><path d="M.5 0V14" stroke="#ddd"/><path d="M2.5 5.5L5 2.5L7.5 5.5M2.5 8.5L5 11.5L7.5 8.5" stroke="#666" stroke-width="1.2" fill="none"/></svg>

<div class="a" style="left:1128px;top:653px;width:11px;height:11px;background:#fff;border:1px solid #c8c8c8"></div>
<svg class="a" style="left:1129px;top:654px" width="9" height="9" viewBox="0 0 9 9"><path d="M1.5 4.5L3.8 7.5L7.8 1" stroke="#111" stroke-width="1.5" fill="none"/></svg>

<svg class="a" style="left:1190px;top:653px" width="13" height="12" viewBox="0 0 13 12"><ellipse cx="6.5" cy="6" rx="6" ry="5.5" fill="none" stroke="#777" stroke-width="1.2"/><ellipse cx="6.5" cy="6" rx="2.5" ry="5.5" fill="none" stroke="#777" stroke-width="1"/><path d="M.5 6H12.5M1.5 3H11.5M1.5 9H11.5" stroke="#777" stroke-width=".9"/></svg>

<svg class="a" style="left:1262px;top:653px" width="14" height="13" viewBox="0 0 14 13"><ellipse cx="7" cy="5.5" rx="6.5" ry="5.2" fill="#666"/><path d="M9 9L12 12.5L8 10Z" fill="#666"/><circle cx="4" cy="5.5" r="1" fill="#fff"/><circle cx="7" cy="5.5" r="1" fill="#fff"/><circle cx="10" cy="5.5" r="1" fill="#fff"/></svg>

<svg class="a" style="left:0;top:0;overflow:hidden" width="1280" height="669" viewBox="0 0 1280 669" font-family="Liberation Sans"><text x="5.90" y="10.7" font-size="10.7" fill="#1e1e1e" stroke="#1e1e1e" stroke-width="0.22" textLength="30.02" lengthAdjust="spacingAndGlyphs">Projekt</text><text x="46.40" y="10.7" font-size="10.7" fill="#1e1e1e" stroke="#1e1e1e" stroke-width="0.22" textLength="27.77" lengthAdjust="spacingAndGlyphs">Edycja</text><rect x="46.40" y="11.2" width="6.17" height="1" fill="#1e1e1e"/><text x="85.20" y="10.7" font-size="10.7" fill="#1e1e1e" stroke="#1e1e1e" stroke-width="0.22" textLength="28.33" lengthAdjust="spacingAndGlyphs">Widok</text><rect x="85.20" y="11.2" width="9.62" height="1" fill="#1e1e1e"/><text x="123.90" y="10.7" font-size="10.7" fill="#1e1e1e" stroke="#1e1e1e" stroke-width="0.22" textLength="37.07" lengthAdjust="spacingAndGlyphs">Warstwa</text><rect x="132.98" y="11.2" width="5.35" height="1" fill="#1e1e1e"/><text x="171.70" y="10.7" font-size="10.7" fill="#1e1e1e" stroke="#1e1e1e" stroke-width="0.22" textLength="47.26" lengthAdjust="spacingAndGlyphs">Ustawienia</text><rect x="171.70" y="11.2" width="6.98" height="1" fill="#1e1e1e"/><text x="230.00" y="10.7" font-size="10.7" fill="#1e1e1e" stroke="#1e1e1e" stroke-width="0.22" textLength="32.99" lengthAdjust="spacingAndGlyphs">Wtyczki</text><rect x="230.00" y="11.2" width="9.04" height="1" fill="#1e1e1e"/><text x="274.00" y="10.7" font-size="10.7" fill="#1e1e1e" stroke="#1e1e1e" stroke-width="0.22" textLength="31.59" lengthAdjust="spacingAndGlyphs">Wektor</text><rect x="296.67" y="11.2" width="5.58" height="1" fill="#1e1e1e"/><text x="316.00" y="10.7" font-size="10.7" fill="#1e1e1e" stroke="#1e1e1e" stroke-width="0.22" textLength="26.80" lengthAdjust="spacingAndGlyphs">Raster</text><rect x="316.00" y="11.2" width="6.57" height="1" fill="#1e1e1e"/><text x="353.20" y="10.7" font-size="10.7" fill="#1e1e1e" stroke="#1e1e1e" stroke-width="0.22" textLength="54.81" lengthAdjust="spacingAndGlyphs">Bazy danych</text><rect x="353.20" y="11.2" width="6.38" height="1" fill="#1e1e1e"/><text x="418.00" y="10.7" font-size="10.7" fill="#1e1e1e" stroke="#1e1e1e" stroke-width="0.22" textLength="55.38" lengthAdjust="spacingAndGlyphs">W internecie</text><rect x="430.17" y="11.2" width="2.21" height="1" fill="#1e1e1e"/><text x="483.30" y="10.7" font-size="10.7" fill="#1e1e1e" stroke="#1e1e1e" stroke-width="0.22" textLength="26.65" lengthAdjust="spacingAndGlyphs">Siatka</text><text x="520.50" y="10.7" font-size="10.7" fill="#1e1e1e" stroke="#1e1e1e" stroke-width="0.22" textLength="45.52" lengthAdjust="spacingAndGlyphs">Processing</text><rect x="534.82" y="11.2" width="4.60" height="1" fill="#1e1e1e"/><text x="576.80" y="10.7" font-size="10.7" fill="#1e1e1e" stroke="#1e1e1e" stroke-width="0.22" textLength="30.62" lengthAdjust="spacingAndGlyphs">Pomoc</text><rect x="576.80" y="11.2" width="6.56" height="1" fill="#1e1e1e"/><text x="0.80" y="77.7" font-size="10.1" fill="#262626" stroke="#262626" stroke-width="0.22" textLength="37.31" lengthAdjust="spacingAndGlyphs">Warstwy</text><text x="50.50" y="112.8" font-size="9.8" fill="#ffffff" stroke="#ffffff" stroke-width="0.22" font-weight="bold" textLength="40.40" lengthAdjust="spacingAndGlyphs">lubelskie</text><text x="50.20" y="127.6" font-size="10.4" fill="#222" stroke="#222" stroke-width="0.22" textLength="27.89" lengthAdjust="spacingAndGlyphs">106.29</text><text x="50.20" y="142" font-size="10.4" fill="#222" stroke="#222" stroke-width="0.22" textLength="27.89" lengthAdjust="spacingAndGlyphs">287.68</text><text x="0.80" y="394.9" font-size="10" fill="#262626" stroke="#262626" stroke-width="0.22" textLength="46.78" lengthAdjust="spacingAndGlyphs">Value Tool</text><text x="20.70" y="415.1" font-size="9" fill="#262626" stroke="#262626" stroke-width="0.22" textLength="25.19" lengthAdjust="spacingAndGlyphs">Enable</text><text x="15.30" y="438.8" font-size="9.6" fill="#262626" stroke="#262626" stroke-width="0.22" textLength="20.81" lengthAdjust="spacingAndGlyphs">Table</text><text x="56.90" y="438" font-size="9.6" fill="#262626" stroke="#262626" stroke-width="0.22" textLength="22.10" lengthAdjust="spacingAndGlyphs">Graph</text><text x="99.80" y="438.8" font-size="9.6" fill="#262626" stroke="#262626" stroke-width="0.22" textLength="28.21" lengthAdjust="spacingAndGlyphs">Options</text><text x="14.00" y="463.5" font-size="9" fill="#262626" stroke="#262626" stroke-width="0.22" textLength="20.99" lengthAdjust="spacingAndGlyphs">Y min</text><text x="139.00" y="463.5" font-size="9" fill="#262626" stroke="#262626" stroke-width="0.22" textLength="23.31" lengthAdjust="spacingAndGlyphs">Y max</text><text x="21.10" y="519.4" font-size="11" fill="#262626" stroke="#262626" stroke-width="0.22" textLength="19.68" lengthAdjust="spacingAndGlyphs">300</text><text x="21.10" y="562.4" font-size="11" fill="#262626" stroke="#262626" stroke-width="0.22" textLength="19.68" lengthAdjust="spacingAndGlyphs">200</text><text x="37.10" y="612.9" font-size="11" fill="#262626" stroke="#262626" stroke-width="0.22" textLength="22.82" lengthAdjust="spacingAndGlyphs">0.75</text><text x="66.90" y="612.9" font-size="11" fill="#262626" stroke="#262626" stroke-width="0.22" textLength="22.82" lengthAdjust="spacingAndGlyphs">0.80</text><text x="96.70" y="612.9" font-size="11" fill="#262626" stroke="#262626" stroke-width="0.22" textLength="22.82" lengthAdjust="spacingAndGlyphs">0.85</text><text x="126.50" y="612.9" font-size="11" fill="#262626" stroke="#262626" stroke-width="0.22" textLength="22.82" lengthAdjust="spacingAndGlyphs">0.90</text><text x="156.30" y="612.9" font-size="11" fill="#262626" stroke="#262626" stroke-width="0.22" textLength="22.82" lengthAdjust="spacingAndGlyphs">0.95</text><text x="186.10" y="612.9" font-size="11" fill="#262626" stroke="#262626" stroke-width="0.22" textLength="22.82" lengthAdjust="spacingAndGlyphs">1.00</text><text x="215.90" y="612.9" font-size="11" fill="#262626" stroke="#262626" stroke-width="0.22" textLength="22.82" lengthAdjust="spacingAndGlyphs">1.05</text><text x="245.70" y="612.9" font-size="11" fill="#262626" stroke="#262626" stroke-width="0.22" textLength="22.82" lengthAdjust="spacingAndGlyphs">1.10</text><text x="275.50" y="612.9" font-size="11" fill="#262626" stroke="#262626" stroke-width="0.22" textLength="22.82" lengthAdjust="spacingAndGlyphs">1.15</text><text x="305.30" y="612.9" font-size="11" fill="#262626" stroke="#262626" stroke-width="0.22" textLength="22.82" lengthAdjust="spacingAndGlyphs">1.20</text><text x="335.10" y="612.9" font-size="11" fill="#262626" stroke="#262626" stroke-width="0.22" textLength="22.82" lengthAdjust="spacingAndGlyphs">1.25</text><rect x="354" y="602" width="7.5" height="14" fill="#fff"/><text x="5.90" y="639.4" font-size="9.5" fill="#1e1e1e" stroke="#1e1e1e" stroke-width="0.22" textLength="176.09" lengthAdjust="spacingAndGlyphs">Coordinate: (770813.172808, 372183.692025)</text><text x="20.00" y="662.5" font-size="9.4" fill="#8c8c8c" stroke="#8c8c8c" stroke-width="0.22" textLength="86.68" lengthAdjust="spacingAndGlyphs">Szukana fraza (Ctrl+K)</text><text x="655.90" y="663" font-size="8.8" fill="#1e1e1e" stroke="#1e1e1e" stroke-width="0.22" textLength="49.41" lengthAdjust="spacingAndGlyphs">Współrzędne</text><text x="715.00" y="663" font-size="9.6" fill="#1e1e1e" stroke="#1e1e1e" stroke-width="0.22" textLength="59.02" lengthAdjust="spacingAndGlyphs">770813,372184</text><text x="807.70" y="663" font-size="8.8" fill="#1e1e1e" stroke="#1e1e1e" stroke-width="0.22" textLength="19.67" lengthAdjust="spacingAndGlyphs">Skala</text><text x="832.70" y="663" font-size="9.6" fill="#1e1e1e" stroke="#1e1e1e" stroke-width="0.22" textLength="40.32" lengthAdjust="spacingAndGlyphs">1:1403429</text><text x="916.80" y="663" font-size="8.8" fill="#1e1e1e" stroke="#1e1e1e" stroke-width="0.22" textLength="50.20" lengthAdjust="spacingAndGlyphs">Powiększenie</text><text x="973.00" y="663" font-size="9.6" fill="#1e1e1e" stroke="#1e1e1e" stroke-width="0.22" textLength="21.68" lengthAdjust="spacingAndGlyphs">100%</text><text x="1038.00" y="663" font-size="8.8" fill="#1e1e1e" stroke="#1e1e1e" stroke-width="0.22" textLength="21.01" lengthAdjust="spacingAndGlyphs">Obrót</text><text x="1068.50" y="663" font-size="9.6" fill="#1e1e1e" stroke="#1e1e1e" stroke-width="0.22" textLength="18.48" lengthAdjust="spacingAndGlyphs">0,0 °</text><text x="1143.75" y="662.5" font-size="8.8" fill="#1e1e1e" stroke="#1e1e1e" stroke-width="0.22" textLength="34.74" lengthAdjust="spacingAndGlyphs">Renderuj</text><text x="1206.00" y="662.9" font-size="8.8" fill="#1e1e1e" stroke="#1e1e1e" stroke-width="0.22" textLength="41.51" lengthAdjust="spacingAndGlyphs">EPSG:2180</text></svg>
</body></html>
